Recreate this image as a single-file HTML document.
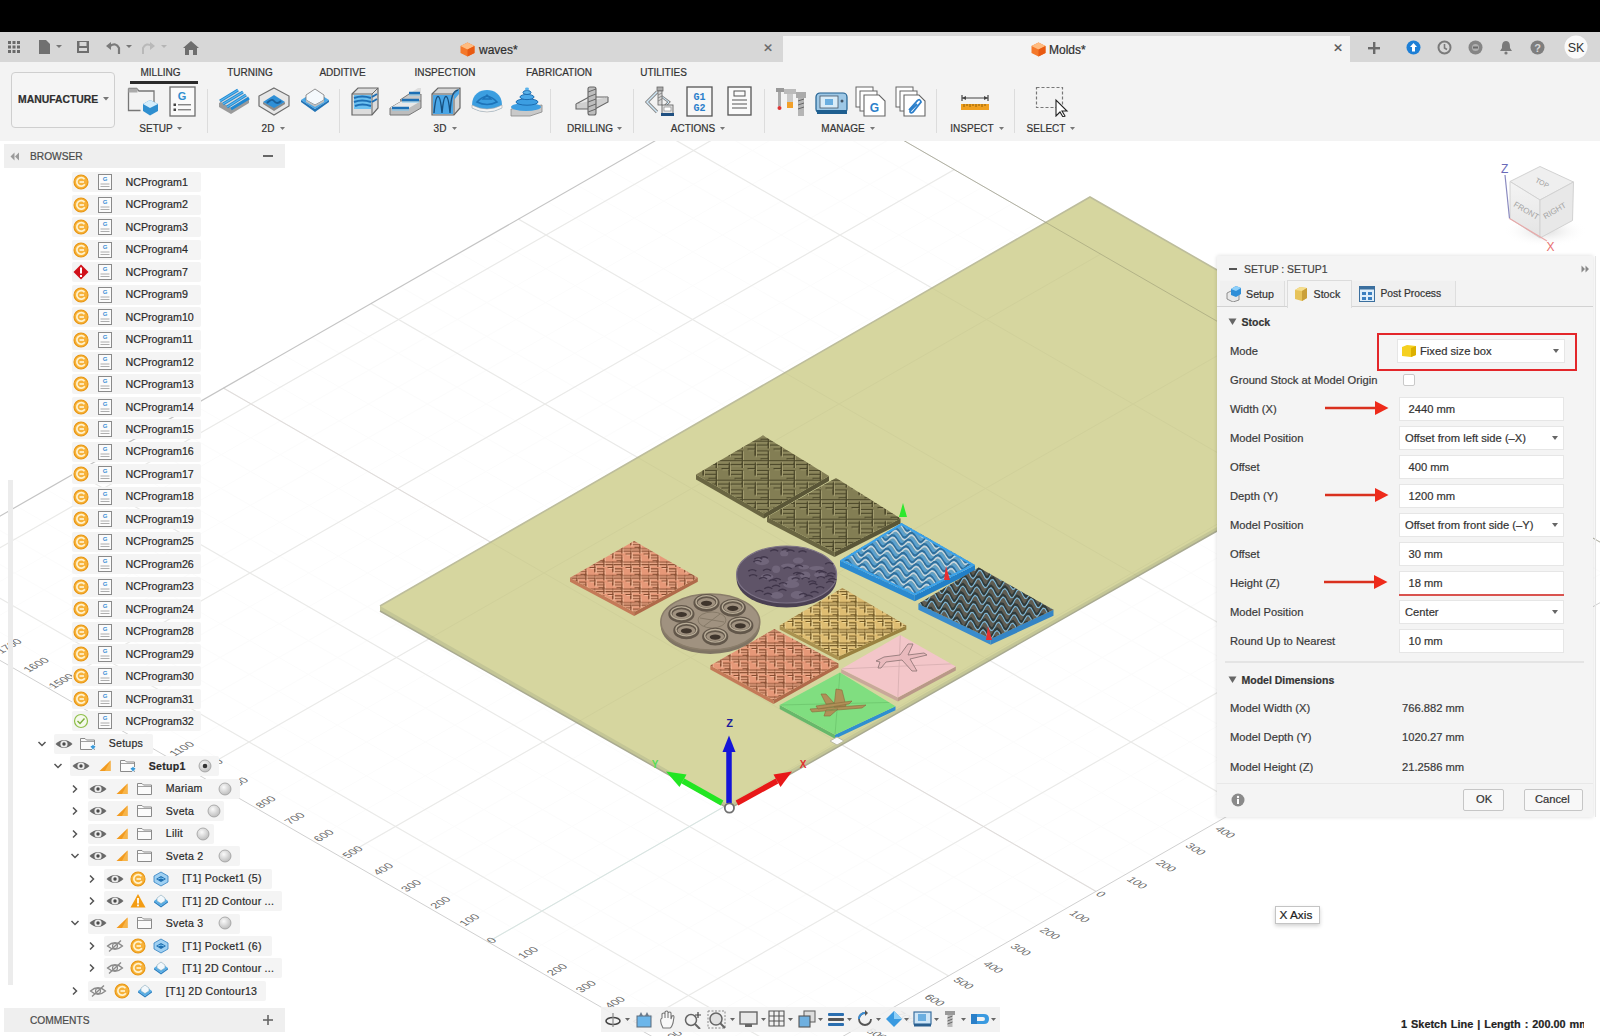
<!DOCTYPE html>
<html><head><meta charset="utf-8">
<style>
*{margin:0;padding:0;box-sizing:border-box}
html,body{width:1600px;height:1036px;overflow:hidden;background:#fff;font-family:"Liberation Sans",sans-serif;color:#333}
.a{position:absolute}
.t{white-space:nowrap;-webkit-text-stroke:0.2px currentColor}
</style></head><body>

<svg class="a" style="left:0;top:0" width="1600" height="1036" viewBox="0 0 1600 1036"><g shape-rendering="geometricPrecision"><line x1="771.5" y1="1077.3" x2="-101.0" y2="574.0" stroke="#fcfcfc" stroke-width="1" opacity="1"/><line x1="830.5" y1="1043.5" x2="-42.0" y2="540.2" stroke="#fcfcfc" stroke-width="1" opacity="1"/><line x1="860.0" y1="1026.6" x2="-12.5" y2="523.3" stroke="#fcfcfc" stroke-width="1" opacity="1"/><line x1="889.5" y1="1009.7" x2="17.0" y2="506.4" stroke="#fcfcfc" stroke-width="1" opacity="1"/><line x1="919.0" y1="992.8" x2="46.5" y2="489.5" stroke="#fcfcfc" stroke-width="1" opacity="1"/><line x1="978.0" y1="959.0" x2="105.5" y2="455.7" stroke="#fcfcfc" stroke-width="1" opacity="1"/><line x1="1007.5" y1="942.1" x2="135.0" y2="438.8" stroke="#fcfcfc" stroke-width="1" opacity="1"/><line x1="1037.0" y1="925.2" x2="164.5" y2="421.9" stroke="#fcfcfc" stroke-width="1" opacity="1"/><line x1="1066.5" y1="908.3" x2="194.0" y2="405.0" stroke="#fcfcfc" stroke-width="1" opacity="1"/><line x1="1125.5" y1="874.5" x2="253.0" y2="371.2" stroke="#fcfcfc" stroke-width="1" opacity="1"/><line x1="1155.0" y1="857.6" x2="282.5" y2="354.3" stroke="#fcfcfc" stroke-width="1" opacity="1"/><line x1="1184.5" y1="840.7" x2="312.0" y2="337.4" stroke="#fcfcfc" stroke-width="1" opacity="1"/><line x1="1214.0" y1="823.8" x2="341.5" y2="320.5" stroke="#fcfcfc" stroke-width="1" opacity="1"/><line x1="1273.0" y1="790.0" x2="400.5" y2="286.7" stroke="#fcfcfc" stroke-width="1" opacity="1"/><line x1="1302.5" y1="773.1" x2="430.0" y2="269.8" stroke="#fcfcfc" stroke-width="1" opacity="1"/><line x1="1332.0" y1="756.2" x2="459.5" y2="252.9" stroke="#fcfcfc" stroke-width="1" opacity="1"/><line x1="1361.5" y1="739.3" x2="489.0" y2="236.0" stroke="#fcfcfc" stroke-width="1" opacity="1"/><line x1="1420.5" y1="705.5" x2="548.0" y2="202.2" stroke="#fcfcfc" stroke-width="1" opacity="1"/><line x1="1450.0" y1="688.6" x2="577.5" y2="185.3" stroke="#fcfcfc" stroke-width="1" opacity="1"/><line x1="1479.5" y1="671.7" x2="607.0" y2="168.4" stroke="#fcfcfc" stroke-width="1" opacity="1"/><line x1="1509.0" y1="654.8" x2="636.5" y2="151.5" stroke="#fcfcfc" stroke-width="1" opacity="1"/><line x1="1568.0" y1="621.0" x2="695.5" y2="117.7" stroke="#fcfcfc" stroke-width="1" opacity="1"/><line x1="1597.5" y1="604.1" x2="725.0" y2="100.8" stroke="#fcfcfc" stroke-width="1" opacity="1"/><line x1="1627.0" y1="587.2" x2="754.5" y2="83.9" stroke="#fcfcfc" stroke-width="1" opacity="1"/><line x1="722.4" y1="1077.1" x2="1628.1" y2="558.3" stroke="#fcfcfc" stroke-width="1" opacity="1"/><line x1="693.1" y1="1060.2" x2="1598.8" y2="541.4" stroke="#fcfcfc" stroke-width="1" opacity="1"/><line x1="663.8" y1="1043.3" x2="1569.5" y2="524.5" stroke="#fcfcfc" stroke-width="1" opacity="1"/><line x1="605.2" y1="1009.5" x2="1510.9" y2="490.7" stroke="#fcfcfc" stroke-width="1" opacity="1"/><line x1="575.9" y1="992.6" x2="1481.6" y2="473.8" stroke="#fcfcfc" stroke-width="1" opacity="1"/><line x1="546.6" y1="975.7" x2="1452.3" y2="456.9" stroke="#fcfcfc" stroke-width="1" opacity="1"/><line x1="517.3" y1="958.8" x2="1423.0" y2="440.0" stroke="#fcfcfc" stroke-width="1" opacity="1"/><line x1="458.7" y1="925.0" x2="1364.4" y2="406.2" stroke="#fcfcfc" stroke-width="1" opacity="1"/><line x1="429.4" y1="908.1" x2="1335.1" y2="389.3" stroke="#fcfcfc" stroke-width="1" opacity="1"/><line x1="400.1" y1="891.2" x2="1305.8" y2="372.4" stroke="#fcfcfc" stroke-width="1" opacity="1"/><line x1="370.8" y1="874.3" x2="1276.5" y2="355.5" stroke="#fcfcfc" stroke-width="1" opacity="1"/><line x1="312.2" y1="840.5" x2="1217.9" y2="321.7" stroke="#fcfcfc" stroke-width="1" opacity="1"/><line x1="282.9" y1="823.6" x2="1188.6" y2="304.8" stroke="#fcfcfc" stroke-width="1" opacity="1"/><line x1="253.6" y1="806.7" x2="1159.3" y2="287.9" stroke="#fcfcfc" stroke-width="1" opacity="1"/><line x1="224.3" y1="789.8" x2="1130.0" y2="271.0" stroke="#fcfcfc" stroke-width="1" opacity="1"/><line x1="165.7" y1="756.0" x2="1071.4" y2="237.2" stroke="#fcfcfc" stroke-width="1" opacity="1"/><line x1="136.4" y1="739.1" x2="1042.1" y2="220.3" stroke="#fcfcfc" stroke-width="1" opacity="1"/><line x1="107.1" y1="722.2" x2="1012.8" y2="203.4" stroke="#fcfcfc" stroke-width="1" opacity="1"/><line x1="77.8" y1="705.3" x2="983.5" y2="186.5" stroke="#fcfcfc" stroke-width="1" opacity="1"/><line x1="19.2" y1="671.5" x2="924.9" y2="152.7" stroke="#fcfcfc" stroke-width="1" opacity="1"/><line x1="-10.1" y1="654.6" x2="895.6" y2="135.8" stroke="#fcfcfc" stroke-width="1" opacity="1"/><line x1="-39.4" y1="637.7" x2="866.3" y2="118.9" stroke="#fcfcfc" stroke-width="1" opacity="1"/><line x1="-68.7" y1="620.8" x2="837.0" y2="102.0" stroke="#fcfcfc" stroke-width="1" opacity="1"/><line x1="801.0" y1="1060.4" x2="-71.5" y2="557.1" stroke="#f1f1f1" stroke-width="1.3" opacity="1"/><line x1="948.5" y1="975.9" x2="76.0" y2="472.6" stroke="#f1f1f1" stroke-width="1.3" opacity="1"/><line x1="1096.0" y1="891.4" x2="223.5" y2="388.1" stroke="#f1f1f1" stroke-width="1.3" opacity="1"/><line x1="1243.5" y1="806.9" x2="371.0" y2="303.6" stroke="#f1f1f1" stroke-width="1.3" opacity="1"/><line x1="1391.0" y1="722.4" x2="518.5" y2="219.1" stroke="#f1f1f1" stroke-width="1.3" opacity="1"/><line x1="1538.5" y1="637.9" x2="666.0" y2="134.6" stroke="#f1f1f1" stroke-width="1.3" opacity="1"/><line x1="634.5" y1="1026.4" x2="1540.2" y2="507.6" stroke="#f1f1f1" stroke-width="1.3" opacity="1"/><line x1="488.0" y1="941.9" x2="1393.7" y2="423.1" stroke="#f1f1f1" stroke-width="1.3" opacity="1"/><line x1="341.5" y1="857.4" x2="1247.2" y2="338.6" stroke="#f1f1f1" stroke-width="1.3" opacity="1"/><line x1="195.0" y1="772.9" x2="1100.7" y2="254.1" stroke="#f1f1f1" stroke-width="1.3" opacity="1"/><line x1="48.5" y1="688.4" x2="954.2" y2="169.6" stroke="#f1f1f1" stroke-width="1.3" opacity="1"/><line x1="-98.0" y1="603.9" x2="807.7" y2="85.1" stroke="#f1f1f1" stroke-width="1.3" opacity="1"/><line x1="1096.0" y1="891.4" x2="223.5" y2="388.1" stroke="#e6e2e2" stroke-width="1" opacity="1"/><line x1="488.0" y1="941.9" x2="1393.7" y2="423.1" stroke="#dcecea" stroke-width="1" opacity="1"/><line x1="747.0" y1="1091.3" x2="-125.5" y2="588.0" stroke="#d0d0d0" stroke-width="1" opacity="1"/><line x1="1652.7" y1="572.5" x2="780.1" y2="69.2" stroke="#d0d0d0" stroke-width="1" opacity="1"/><line x1="747.0" y1="1091.3" x2="1652.7" y2="572.5" stroke="#d0d0d0" stroke-width="1" opacity="1"/><line x1="-125.5" y1="588.0" x2="780.1" y2="69.2" stroke="#c4c4c4" stroke-width="1.2" opacity="1"/></g><polygon points="380,606 1090,197 1217,270 1217,531 729,809 380,611" fill="#c4c696"/><polygon points="380,606 1090,197 1217,270 1217,527 729,805" fill="#d6d69f"/><polyline points="380,606 1090,197 1217,270" fill="none" stroke="#bdbd9c" stroke-width="1.6"/><polyline points="380,611 729,809 1217,531" fill="none" stroke="#a9aa90" stroke-width="1.5"/><g opacity="0.05"><line x1="801.0" y1="1060.4" x2="-71.5" y2="557.1" stroke="#6f6f4a" stroke-width="1" opacity="1"/><line x1="948.5" y1="975.9" x2="76.0" y2="472.6" stroke="#6f6f4a" stroke-width="1" opacity="1"/><line x1="1096.0" y1="891.4" x2="223.5" y2="388.1" stroke="#6f6f4a" stroke-width="1" opacity="1"/><line x1="1243.5" y1="806.9" x2="371.0" y2="303.6" stroke="#6f6f4a" stroke-width="1" opacity="1"/><line x1="1391.0" y1="722.4" x2="518.5" y2="219.1" stroke="#6f6f4a" stroke-width="1" opacity="1"/><line x1="1538.5" y1="637.9" x2="666.0" y2="134.6" stroke="#6f6f4a" stroke-width="1" opacity="1"/><line x1="634.5" y1="1026.4" x2="1540.2" y2="507.6" stroke="#6f6f4a" stroke-width="1" opacity="1"/><line x1="488.0" y1="941.9" x2="1393.7" y2="423.1" stroke="#6f6f4a" stroke-width="1" opacity="1"/><line x1="341.5" y1="857.4" x2="1247.2" y2="338.6" stroke="#6f6f4a" stroke-width="1" opacity="1"/><line x1="195.0" y1="772.9" x2="1100.7" y2="254.1" stroke="#6f6f4a" stroke-width="1" opacity="1"/><line x1="48.5" y1="688.4" x2="954.2" y2="169.6" stroke="#6f6f4a" stroke-width="1" opacity="1"/><line x1="-98.0" y1="603.9" x2="807.7" y2="85.1" stroke="#6f6f4a" stroke-width="1" opacity="1"/></g><g opacity="0.45"><line x1="1652.7" y1="572.5" x2="780.1" y2="69.2" stroke="#8a8a6a" stroke-width="1" opacity="1"/></g><polygon points="696.0,474.5 764.0,513.5 764.0,518.5 696.0,479.5" fill="#6a6642"/><polygon points="764.0,513.5 829.0,476.0 829.0,481.0 764.0,518.5" fill="#5a5637"/><polygon points="763.0,435.5 829.0,476.0 764.0,513.5 696.0,474.5" fill="#837e54"/><clipPath id="c1"><polygon points="763.0,435.5 829.0,476.0 764.0,513.5 696.0,474.5"/></clipPath><g clip-path="url(#c1)"><defs><pattern id="hp1" patternUnits="userSpaceOnUse" width="26.0" height="19.5"><g fill="none"><path d="M-1.3 2.6 H14.3 V16.9" stroke="#a39d70" stroke-width="1.2" transform="translate(1 1)"/><path d="M-1.3 2.6 H14.3 V16.9" stroke="#4a4628" stroke-width="1.2"/><path d="M2.6 6.5 H14.3 V16.9" stroke="#a39d70" stroke-width="1.2" transform="translate(1 1)"/><path d="M2.6 6.5 H14.3 V16.9" stroke="#4a4628" stroke-width="1.2"/><path d="M6.5 10.4 H14.3 V16.9" stroke="#a39d70" stroke-width="1.2" transform="translate(1 1)"/><path d="M6.5 10.4 H14.3 V16.9" stroke="#4a4628" stroke-width="1.2"/><path d="M11.7 12.3 H27.3 V26.7" stroke="#a39d70" stroke-width="1.2" transform="translate(1 1)"/><path d="M11.7 12.3 H27.3 V26.7" stroke="#4a4628" stroke-width="1.2"/><path d="M15.6 16.2 H27.3 V26.7" stroke="#a39d70" stroke-width="1.2" transform="translate(1 1)"/><path d="M15.6 16.2 H27.3 V26.7" stroke="#4a4628" stroke-width="1.2"/><path d="M19.5 20.1 H27.3 V26.7" stroke="#a39d70" stroke-width="1.2" transform="translate(1 1)"/><path d="M19.5 20.1 H27.3 V26.7" stroke="#4a4628" stroke-width="1.2"/><path d="M-14.3 12.3 H1.3 V26.7" stroke="#a39d70" stroke-width="1.2" transform="translate(1 1)"/><path d="M-14.3 12.3 H1.3 V26.7" stroke="#4a4628" stroke-width="1.2"/><path d="M-10.4 16.2 H1.3 V26.7" stroke="#a39d70" stroke-width="1.2" transform="translate(1 1)"/><path d="M-10.4 16.2 H1.3 V26.7" stroke="#4a4628" stroke-width="1.2"/><path d="M-6.5 20.1 H1.3 V26.7" stroke="#a39d70" stroke-width="1.2" transform="translate(1 1)"/><path d="M-6.5 20.1 H1.3 V26.7" stroke="#4a4628" stroke-width="1.2"/><path d="M-1.3 12.3 H14.3 V26.7" stroke="#a39d70" stroke-width="1.2" transform="translate(1 1)"/><path d="M-1.3 12.3 H14.3 V26.7" stroke="#4a4628" stroke-width="1.2"/><path d="M2.6 16.2 H14.3 V26.7" stroke="#a39d70" stroke-width="1.2" transform="translate(1 1)"/><path d="M2.6 16.2 H14.3 V26.7" stroke="#4a4628" stroke-width="1.2"/><path d="M6.5 20.1 H14.3 V26.7" stroke="#a39d70" stroke-width="1.2" transform="translate(1 1)"/><path d="M6.5 20.1 H14.3 V26.7" stroke="#4a4628" stroke-width="1.2"/><path d="M11.7 -7.2 H27.3 V7.2" stroke="#a39d70" stroke-width="1.2" transform="translate(1 1)"/><path d="M11.7 -7.2 H27.3 V7.2" stroke="#4a4628" stroke-width="1.2"/><path d="M15.6 -3.3 H27.3 V7.2" stroke="#a39d70" stroke-width="1.2" transform="translate(1 1)"/><path d="M15.6 -3.3 H27.3 V7.2" stroke="#4a4628" stroke-width="1.2"/><path d="M19.5 0.6 H27.3 V7.2" stroke="#a39d70" stroke-width="1.2" transform="translate(1 1)"/><path d="M19.5 0.6 H27.3 V7.2" stroke="#4a4628" stroke-width="1.2"/><path d="M-14.3 -7.2 H1.3 V7.2" stroke="#a39d70" stroke-width="1.2" transform="translate(1 1)"/><path d="M-14.3 -7.2 H1.3 V7.2" stroke="#4a4628" stroke-width="1.2"/><path d="M-10.4 -3.3 H1.3 V7.2" stroke="#a39d70" stroke-width="1.2" transform="translate(1 1)"/><path d="M-10.4 -3.3 H1.3 V7.2" stroke="#4a4628" stroke-width="1.2"/><path d="M-6.5 0.6 H1.3 V7.2" stroke="#a39d70" stroke-width="1.2" transform="translate(1 1)"/><path d="M-6.5 0.6 H1.3 V7.2" stroke="#4a4628" stroke-width="1.2"/></g></pattern></defs><rect x="0" y="0" width="1600" height="1036" fill="url(#hp1)" opacity="1"/></g><polygon points="767.0,517.0 834.5,552.0 834.5,557.0 767.0,522.0" fill="#6a6642"/><polygon points="834.5,552.0 900.5,518.5 900.5,523.5 834.5,557.0" fill="#5a5637"/><polygon points="836.0,478.0 900.5,518.5 834.5,552.0 767.0,517.0" fill="#837e54"/><clipPath id="c2"><polygon points="836.0,478.0 900.5,518.5 834.5,552.0 767.0,517.0"/></clipPath><g clip-path="url(#c2)"><defs><pattern id="hp2" patternUnits="userSpaceOnUse" width="26.0" height="19.5"><g fill="none"><path d="M-1.3 2.6 H14.3 V16.9" stroke="#a39d70" stroke-width="1.2" transform="translate(1 1)"/><path d="M-1.3 2.6 H14.3 V16.9" stroke="#4a4628" stroke-width="1.2"/><path d="M2.6 6.5 H14.3 V16.9" stroke="#a39d70" stroke-width="1.2" transform="translate(1 1)"/><path d="M2.6 6.5 H14.3 V16.9" stroke="#4a4628" stroke-width="1.2"/><path d="M6.5 10.4 H14.3 V16.9" stroke="#a39d70" stroke-width="1.2" transform="translate(1 1)"/><path d="M6.5 10.4 H14.3 V16.9" stroke="#4a4628" stroke-width="1.2"/><path d="M11.7 12.3 H27.3 V26.7" stroke="#a39d70" stroke-width="1.2" transform="translate(1 1)"/><path d="M11.7 12.3 H27.3 V26.7" stroke="#4a4628" stroke-width="1.2"/><path d="M15.6 16.2 H27.3 V26.7" stroke="#a39d70" stroke-width="1.2" transform="translate(1 1)"/><path d="M15.6 16.2 H27.3 V26.7" stroke="#4a4628" stroke-width="1.2"/><path d="M19.5 20.1 H27.3 V26.7" stroke="#a39d70" stroke-width="1.2" transform="translate(1 1)"/><path d="M19.5 20.1 H27.3 V26.7" stroke="#4a4628" stroke-width="1.2"/><path d="M-14.3 12.3 H1.3 V26.7" stroke="#a39d70" stroke-width="1.2" transform="translate(1 1)"/><path d="M-14.3 12.3 H1.3 V26.7" stroke="#4a4628" stroke-width="1.2"/><path d="M-10.4 16.2 H1.3 V26.7" stroke="#a39d70" stroke-width="1.2" transform="translate(1 1)"/><path d="M-10.4 16.2 H1.3 V26.7" stroke="#4a4628" stroke-width="1.2"/><path d="M-6.5 20.1 H1.3 V26.7" stroke="#a39d70" stroke-width="1.2" transform="translate(1 1)"/><path d="M-6.5 20.1 H1.3 V26.7" stroke="#4a4628" stroke-width="1.2"/><path d="M-1.3 12.3 H14.3 V26.7" stroke="#a39d70" stroke-width="1.2" transform="translate(1 1)"/><path d="M-1.3 12.3 H14.3 V26.7" stroke="#4a4628" stroke-width="1.2"/><path d="M2.6 16.2 H14.3 V26.7" stroke="#a39d70" stroke-width="1.2" transform="translate(1 1)"/><path d="M2.6 16.2 H14.3 V26.7" stroke="#4a4628" stroke-width="1.2"/><path d="M6.5 20.1 H14.3 V26.7" stroke="#a39d70" stroke-width="1.2" transform="translate(1 1)"/><path d="M6.5 20.1 H14.3 V26.7" stroke="#4a4628" stroke-width="1.2"/><path d="M11.7 -7.2 H27.3 V7.2" stroke="#a39d70" stroke-width="1.2" transform="translate(1 1)"/><path d="M11.7 -7.2 H27.3 V7.2" stroke="#4a4628" stroke-width="1.2"/><path d="M15.6 -3.3 H27.3 V7.2" stroke="#a39d70" stroke-width="1.2" transform="translate(1 1)"/><path d="M15.6 -3.3 H27.3 V7.2" stroke="#4a4628" stroke-width="1.2"/><path d="M19.5 0.6 H27.3 V7.2" stroke="#a39d70" stroke-width="1.2" transform="translate(1 1)"/><path d="M19.5 0.6 H27.3 V7.2" stroke="#4a4628" stroke-width="1.2"/><path d="M-14.3 -7.2 H1.3 V7.2" stroke="#a39d70" stroke-width="1.2" transform="translate(1 1)"/><path d="M-14.3 -7.2 H1.3 V7.2" stroke="#4a4628" stroke-width="1.2"/><path d="M-10.4 -3.3 H1.3 V7.2" stroke="#a39d70" stroke-width="1.2" transform="translate(1 1)"/><path d="M-10.4 -3.3 H1.3 V7.2" stroke="#4a4628" stroke-width="1.2"/><path d="M-6.5 0.6 H1.3 V7.2" stroke="#a39d70" stroke-width="1.2" transform="translate(1 1)"/><path d="M-6.5 0.6 H1.3 V7.2" stroke="#4a4628" stroke-width="1.2"/></g></pattern></defs><rect x="0" y="0" width="1600" height="1036" fill="url(#hp2)" opacity="1"/></g><polygon points="840.0,560.5 914.8,595.3 914.8,601.3 840.0,566.5" fill="#2b8ad0"/><polygon points="914.8,595.3 975.0,565.0 975.0,571.0 914.8,601.3" fill="#2280c8"/><polygon points="901.5,523.0 975.0,565.0 914.8,595.3 840.0,560.5" fill="#5aa0d0"/><clipPath id="c3"><polygon points="901.5,523.0 975.0,565.0 914.8,595.3 840.0,560.5"/></clipPath><g clip-path="url(#c3)"><g fill="none"><polyline points="836.0,497.2 838.0,497.1 840.0,499.1 842.0,502.2 844.0,505.1 846.0,506.3 848.0,505.4 850.0,503.4 852.0,501.7 854.0,501.6 856.0,503.5 858.0,506.7 860.0,509.5 862.0,510.7 864.0,509.9 866.0,507.9 868.0,506.1 870.0,506.1 872.0,508.0 874.0,511.2 876.0,514.0 878.0,515.2 880.0,514.4 882.0,512.3 884.0,510.6 886.0,510.5 888.0,512.5 890.0,515.7 892.0,518.5 894.0,519.7 896.0,518.9 898.0,516.8 900.0,515.1 902.0,515.0 904.0,517.0 906.0,520.1 908.0,523.0 910.0,524.2 912.0,523.3 914.0,521.3 916.0,519.6 918.0,519.5 920.0,521.5 922.0,524.6 924.0,527.5 926.0,528.7 928.0,527.8 930.0,525.8 932.0,524.1 934.0,524.0 936.0,525.9 938.0,529.1 940.0,531.9 942.0,533.1 944.0,532.3 946.0,530.3 948.0,528.5 950.0,528.5 952.0,530.4 954.0,533.6 956.0,536.4 958.0,537.6 960.0,536.8 962.0,534.7 964.0,533.0 966.0,532.9 968.0,534.9 970.0,538.1 972.0,540.9 974.0,542.1 976.0,541.3 978.0,539.2 980.0,537.5" stroke="#2f6f9c" stroke-width="2"/><polyline points="836.0,499.6 838.0,499.5 840.0,501.5 842.0,504.6 844.0,507.5 846.0,508.7 848.0,507.8 850.0,505.8 852.0,504.1 854.0,504.0 856.0,505.9 858.0,509.1 860.0,511.9 862.0,513.1 864.0,512.3 866.0,510.3 868.0,508.5 870.0,508.5 872.0,510.4 874.0,513.6 876.0,516.4 878.0,517.6 880.0,516.8 882.0,514.7 884.0,513.0 886.0,512.9 888.0,514.9 890.0,518.1 892.0,520.9 894.0,522.1 896.0,521.3 898.0,519.2 900.0,517.5 902.0,517.4 904.0,519.4 906.0,522.5 908.0,525.4 910.0,526.6 912.0,525.7 914.0,523.7 916.0,522.0 918.0,521.9 920.0,523.9 922.0,527.0 924.0,529.9 926.0,531.1 928.0,530.2 930.0,528.2 932.0,526.5 934.0,526.4 936.0,528.3 938.0,531.5 940.0,534.3 942.0,535.5 944.0,534.7 946.0,532.7 948.0,530.9 950.0,530.9 952.0,532.8 954.0,536.0 956.0,538.8 958.0,540.0 960.0,539.2 962.0,537.1 964.0,535.4 966.0,535.3 968.0,537.3 970.0,540.5 972.0,543.3 974.0,544.5 976.0,543.7 978.0,541.6 980.0,539.9" stroke="#c9d5da" stroke-width="1.6"/><polyline points="836.0,501.5 838.0,501.4 840.0,503.4 842.0,506.5 844.0,509.4 846.0,510.6 848.0,509.7 850.0,507.7 852.0,506.0 854.0,505.9 856.0,507.8 858.0,511.0 860.0,513.8 862.0,515.0 864.0,514.2 866.0,512.2 868.0,510.4 870.0,510.4 872.0,512.3 874.0,515.5 876.0,518.3 878.0,519.5 880.0,518.7 882.0,516.6 884.0,514.9 886.0,514.8 888.0,516.8 890.0,520.0 892.0,522.8 894.0,524.0 896.0,523.2 898.0,521.1 900.0,519.4 902.0,519.3 904.0,521.3 906.0,524.4 908.0,527.3 910.0,528.5 912.0,527.6 914.0,525.6 916.0,523.9 918.0,523.8 920.0,525.8 922.0,528.9 924.0,531.8 926.0,533.0 928.0,532.1 930.0,530.1 932.0,528.4 934.0,528.3 936.0,530.2 938.0,533.4 940.0,536.2 942.0,537.4 944.0,536.6 946.0,534.6 948.0,532.8 950.0,532.8 952.0,534.7 954.0,537.9 956.0,540.7 958.0,541.9 960.0,541.1 962.0,539.0 964.0,537.3 966.0,537.2 968.0,539.2 970.0,542.4 972.0,545.2 974.0,546.4 976.0,545.6 978.0,543.5 980.0,541.8" stroke="#6aa0b8" stroke-width="1.2"/><polyline points="836.0,504.4 838.0,507.0 840.0,510.2 842.0,512.5 844.0,512.9 846.0,511.4 848.0,509.3 850.0,508.1 852.0,508.9 854.0,511.5 856.0,514.7 858.0,517.0 860.0,517.3 862.0,515.9 864.0,513.8 866.0,512.6 868.0,513.3 870.0,515.9 872.0,519.2 874.0,521.5 876.0,521.8 878.0,520.3 880.0,518.2 882.0,517.1 884.0,517.8 886.0,520.4 888.0,523.6 890.0,525.9 892.0,526.3 894.0,524.8 896.0,522.7 898.0,521.5 900.0,522.3 902.0,524.9 904.0,528.1 906.0,530.4 908.0,530.8 910.0,529.3 912.0,527.2 914.0,526.0 916.0,526.8 918.0,529.4 920.0,532.6 922.0,534.9 924.0,535.3 926.0,533.8 928.0,531.7 930.0,530.5 932.0,531.3 934.0,533.9 936.0,537.1 938.0,539.4 940.0,539.7 942.0,538.3 944.0,536.2 946.0,535.0 948.0,535.7 950.0,538.3 952.0,541.6 954.0,543.9 956.0,544.2 958.0,542.7 960.0,540.6 962.0,539.5 964.0,540.2 966.0,542.8 968.0,546.0 970.0,548.3 972.0,548.7 974.0,547.2 976.0,545.1 978.0,543.9 980.0,544.7" stroke="#2f6f9c" stroke-width="2"/><polyline points="836.0,506.8 838.0,509.4 840.0,512.6 842.0,514.9 844.0,515.3 846.0,513.8 848.0,511.7 850.0,510.5 852.0,511.3 854.0,513.9 856.0,517.1 858.0,519.4 860.0,519.7 862.0,518.3 864.0,516.2 866.0,515.0 868.0,515.7 870.0,518.3 872.0,521.6 874.0,523.9 876.0,524.2 878.0,522.7 880.0,520.6 882.0,519.5 884.0,520.2 886.0,522.8 888.0,526.0 890.0,528.3 892.0,528.7 894.0,527.2 896.0,525.1 898.0,523.9 900.0,524.7 902.0,527.3 904.0,530.5 906.0,532.8 908.0,533.2 910.0,531.7 912.0,529.6 914.0,528.4 916.0,529.2 918.0,531.8 920.0,535.0 922.0,537.3 924.0,537.7 926.0,536.2 928.0,534.1 930.0,532.9 932.0,533.7 934.0,536.3 936.0,539.5 938.0,541.8 940.0,542.1 942.0,540.7 944.0,538.6 946.0,537.4 948.0,538.1 950.0,540.7 952.0,544.0 954.0,546.3 956.0,546.6 958.0,545.1 960.0,543.0 962.0,541.9 964.0,542.6 966.0,545.2 968.0,548.4 970.0,550.7 972.0,551.1 974.0,549.6 976.0,547.5 978.0,546.3 980.0,547.1" stroke="#c9d5da" stroke-width="1.6"/><polyline points="836.0,508.7 838.0,511.3 840.0,514.5 842.0,516.8 844.0,517.2 846.0,515.7 848.0,513.6 850.0,512.4 852.0,513.2 854.0,515.8 856.0,519.0 858.0,521.3 860.0,521.6 862.0,520.2 864.0,518.1 866.0,516.9 868.0,517.6 870.0,520.2 872.0,523.5 874.0,525.8 876.0,526.1 878.0,524.6 880.0,522.5 882.0,521.4 884.0,522.1 886.0,524.7 888.0,527.9 890.0,530.2 892.0,530.6 894.0,529.1 896.0,527.0 898.0,525.8 900.0,526.6 902.0,529.2 904.0,532.4 906.0,534.7 908.0,535.1 910.0,533.6 912.0,531.5 914.0,530.3 916.0,531.1 918.0,533.7 920.0,536.9 922.0,539.2 924.0,539.6 926.0,538.1 928.0,536.0 930.0,534.8 932.0,535.6 934.0,538.2 936.0,541.4 938.0,543.7 940.0,544.0 942.0,542.6 944.0,540.5 946.0,539.3 948.0,540.0 950.0,542.6 952.0,545.9 954.0,548.2 956.0,548.5 958.0,547.0 960.0,544.9 962.0,543.8 964.0,544.5 966.0,547.1 968.0,550.3 970.0,552.6 972.0,553.0 974.0,551.5 976.0,549.4 978.0,548.2 980.0,549.0" stroke="#6aa0b8" stroke-width="1.2"/><polyline points="836.0,515.0 838.0,518.0 840.0,519.6 842.0,519.2 844.0,517.2 846.0,515.3 848.0,514.9 850.0,516.4 852.0,519.5 854.0,522.5 856.0,524.1 858.0,523.6 860.0,521.7 862.0,519.8 864.0,519.3 866.0,520.9 868.0,524.0 870.0,527.0 872.0,528.6 874.0,528.1 876.0,526.2 878.0,524.3 880.0,523.8 882.0,525.4 884.0,528.4 886.0,531.5 888.0,533.1 890.0,532.6 892.0,530.7 894.0,528.8 896.0,528.3 898.0,529.9 900.0,532.9 902.0,536.0 904.0,537.5 906.0,537.1 908.0,535.2 910.0,533.2 912.0,532.8 914.0,534.4 916.0,537.4 918.0,540.4 920.0,542.0 922.0,541.6 924.0,539.6 926.0,537.7 928.0,537.3 930.0,538.8 932.0,541.9 934.0,544.9 936.0,546.5 938.0,546.0 940.0,544.1 942.0,542.2 944.0,541.7 946.0,543.3 948.0,546.4 950.0,549.4 952.0,551.0 954.0,550.5 956.0,548.6 958.0,546.7 960.0,546.2 962.0,547.8 964.0,550.8 966.0,553.9 968.0,555.5 970.0,555.0 972.0,553.1 974.0,551.2 976.0,550.7 978.0,552.3 980.0,555.3" stroke="#2f6f9c" stroke-width="2"/><polyline points="836.0,517.4 838.0,520.4 840.0,522.0 842.0,521.6 844.0,519.6 846.0,517.7 848.0,517.3 850.0,518.8 852.0,521.9 854.0,524.9 856.0,526.5 858.0,526.0 860.0,524.1 862.0,522.2 864.0,521.7 866.0,523.3 868.0,526.4 870.0,529.4 872.0,531.0 874.0,530.5 876.0,528.6 878.0,526.7 880.0,526.2 882.0,527.8 884.0,530.8 886.0,533.9 888.0,535.5 890.0,535.0 892.0,533.1 894.0,531.2 896.0,530.7 898.0,532.3 900.0,535.3 902.0,538.4 904.0,539.9 906.0,539.5 908.0,537.6 910.0,535.6 912.0,535.2 914.0,536.8 916.0,539.8 918.0,542.8 920.0,544.4 922.0,544.0 924.0,542.0 926.0,540.1 928.0,539.7 930.0,541.2 932.0,544.3 934.0,547.3 936.0,548.9 938.0,548.4 940.0,546.5 942.0,544.6 944.0,544.1 946.0,545.7 948.0,548.8 950.0,551.8 952.0,553.4 954.0,552.9 956.0,551.0 958.0,549.1 960.0,548.6 962.0,550.2 964.0,553.2 966.0,556.3 968.0,557.9 970.0,557.4 972.0,555.5 974.0,553.6 976.0,553.1 978.0,554.7 980.0,557.7" stroke="#c9d5da" stroke-width="1.6"/><polyline points="836.0,519.3 838.0,522.3 840.0,523.9 842.0,523.5 844.0,521.5 846.0,519.6 848.0,519.2 850.0,520.7 852.0,523.8 854.0,526.8 856.0,528.4 858.0,527.9 860.0,526.0 862.0,524.1 864.0,523.6 866.0,525.2 868.0,528.3 870.0,531.3 872.0,532.9 874.0,532.4 876.0,530.5 878.0,528.6 880.0,528.1 882.0,529.7 884.0,532.7 886.0,535.8 888.0,537.4 890.0,536.9 892.0,535.0 894.0,533.1 896.0,532.6 898.0,534.2 900.0,537.2 902.0,540.3 904.0,541.8 906.0,541.4 908.0,539.5 910.0,537.5 912.0,537.1 914.0,538.7 916.0,541.7 918.0,544.7 920.0,546.3 922.0,545.9 924.0,543.9 926.0,542.0 928.0,541.6 930.0,543.1 932.0,546.2 934.0,549.2 936.0,550.8 938.0,550.3 940.0,548.4 942.0,546.5 944.0,546.0 946.0,547.6 948.0,550.7 950.0,553.7 952.0,555.3 954.0,554.8 956.0,552.9 958.0,551.0 960.0,550.5 962.0,552.1 964.0,555.1 966.0,558.2 968.0,559.8 970.0,559.3 972.0,557.4 974.0,555.5 976.0,555.0 978.0,556.6 980.0,559.6" stroke="#6aa0b8" stroke-width="1.2"/><polyline points="836.0,525.6 838.0,526.4 840.0,525.2 842.0,523.1 844.0,521.6 846.0,522.0 848.0,524.3 850.0,527.5 852.0,530.1 854.0,530.9 856.0,529.7 858.0,527.6 860.0,526.1 862.0,526.5 864.0,528.8 866.0,532.0 868.0,534.6 870.0,535.3 872.0,534.2 874.0,532.1 876.0,530.6 878.0,530.9 880.0,533.2 882.0,536.5 884.0,539.1 886.0,539.8 888.0,538.6 890.0,536.5 892.0,535.1 894.0,535.4 896.0,537.7 898.0,540.9 900.0,543.5 902.0,544.3 904.0,543.1 906.0,541.0 908.0,539.5 910.0,539.9 912.0,542.2 914.0,545.4 916.0,548.0 918.0,548.8 920.0,547.6 922.0,545.5 924.0,544.0 926.0,544.4 928.0,546.7 930.0,549.9 932.0,552.5 934.0,553.3 936.0,552.1 938.0,550.0 940.0,548.5 942.0,548.9 944.0,551.2 946.0,554.4 948.0,557.0 950.0,557.7 952.0,556.6 954.0,554.5 956.0,553.0 958.0,553.3 960.0,555.6 962.0,558.9 964.0,561.5 966.0,562.2 968.0,561.0 970.0,558.9 972.0,557.5 974.0,557.8 976.0,560.1 978.0,563.3 980.0,565.9" stroke="#2f6f9c" stroke-width="2"/><polyline points="836.0,528.0 838.0,528.8 840.0,527.6 842.0,525.5 844.0,524.0 846.0,524.4 848.0,526.7 850.0,529.9 852.0,532.5 854.0,533.3 856.0,532.1 858.0,530.0 860.0,528.5 862.0,528.9 864.0,531.2 866.0,534.4 868.0,537.0 870.0,537.7 872.0,536.6 874.0,534.5 876.0,533.0 878.0,533.3 880.0,535.6 882.0,538.9 884.0,541.5 886.0,542.2 888.0,541.0 890.0,538.9 892.0,537.5 894.0,537.8 896.0,540.1 898.0,543.3 900.0,545.9 902.0,546.7 904.0,545.5 906.0,543.4 908.0,541.9 910.0,542.3 912.0,544.6 914.0,547.8 916.0,550.4 918.0,551.2 920.0,550.0 922.0,547.9 924.0,546.4 926.0,546.8 928.0,549.1 930.0,552.3 932.0,554.9 934.0,555.7 936.0,554.5 938.0,552.4 940.0,550.9 942.0,551.3 944.0,553.6 946.0,556.8 948.0,559.4 950.0,560.1 952.0,559.0 954.0,556.9 956.0,555.4 958.0,555.7 960.0,558.0 962.0,561.3 964.0,563.9 966.0,564.6 968.0,563.4 970.0,561.3 972.0,559.9 974.0,560.2 976.0,562.5 978.0,565.7 980.0,568.3" stroke="#c9d5da" stroke-width="1.6"/><polyline points="836.0,529.9 838.0,530.7 840.0,529.5 842.0,527.4 844.0,525.9 846.0,526.3 848.0,528.6 850.0,531.8 852.0,534.4 854.0,535.2 856.0,534.0 858.0,531.9 860.0,530.4 862.0,530.8 864.0,533.1 866.0,536.3 868.0,538.9 870.0,539.6 872.0,538.5 874.0,536.4 876.0,534.9 878.0,535.2 880.0,537.5 882.0,540.8 884.0,543.4 886.0,544.1 888.0,542.9 890.0,540.8 892.0,539.4 894.0,539.7 896.0,542.0 898.0,545.2 900.0,547.8 902.0,548.6 904.0,547.4 906.0,545.3 908.0,543.8 910.0,544.2 912.0,546.5 914.0,549.7 916.0,552.3 918.0,553.1 920.0,551.9 922.0,549.8 924.0,548.3 926.0,548.7 928.0,551.0 930.0,554.2 932.0,556.8 934.0,557.6 936.0,556.4 938.0,554.3 940.0,552.8 942.0,553.2 944.0,555.5 946.0,558.7 948.0,561.3 950.0,562.0 952.0,560.9 954.0,558.8 956.0,557.3 958.0,557.6 960.0,559.9 962.0,563.2 964.0,565.8 966.0,566.5 968.0,565.3 970.0,563.2 972.0,561.8 974.0,562.1 976.0,564.4 978.0,567.6 980.0,570.2" stroke="#6aa0b8" stroke-width="1.2"/><polyline points="836.0,532.8 838.0,531.1 840.0,529.1 842.0,528.2 844.0,529.4 846.0,532.3 848.0,535.4 850.0,537.4 852.0,537.3 854.0,535.6 856.0,533.5 858.0,532.7 860.0,533.9 862.0,536.7 864.0,539.9 866.0,541.9 868.0,541.8 870.0,540.1 872.0,538.0 874.0,537.2 876.0,538.4 878.0,541.2 880.0,544.4 882.0,546.3 884.0,546.3 886.0,544.5 888.0,542.5 890.0,541.7 892.0,542.9 894.0,545.7 896.0,548.9 898.0,550.8 900.0,550.7 902.0,549.0 904.0,547.0 906.0,546.1 908.0,547.3 910.0,550.2 912.0,553.3 914.0,555.3 916.0,555.2 918.0,553.5 920.0,551.5 922.0,550.6 924.0,551.8 926.0,554.7 928.0,557.8 930.0,559.8 932.0,559.7 934.0,558.0 936.0,555.9 938.0,555.1 940.0,556.3 942.0,559.1 944.0,562.3 946.0,564.3 948.0,564.2 950.0,562.5 952.0,560.4 954.0,559.6 956.0,560.8 958.0,563.6 960.0,566.8 962.0,568.7 964.0,568.7 966.0,566.9 968.0,564.9 970.0,564.1 972.0,565.3 974.0,568.1 976.0,571.3 978.0,573.2 980.0,573.1" stroke="#2f6f9c" stroke-width="2"/><polyline points="836.0,535.2 838.0,533.5 840.0,531.5 842.0,530.6 844.0,531.8 846.0,534.7 848.0,537.8 850.0,539.8 852.0,539.7 854.0,538.0 856.0,535.9 858.0,535.1 860.0,536.3 862.0,539.1 864.0,542.3 866.0,544.3 868.0,544.2 870.0,542.5 872.0,540.4 874.0,539.6 876.0,540.8 878.0,543.6 880.0,546.8 882.0,548.7 884.0,548.7 886.0,546.9 888.0,544.9 890.0,544.1 892.0,545.3 894.0,548.1 896.0,551.3 898.0,553.2 900.0,553.1 902.0,551.4 904.0,549.4 906.0,548.5 908.0,549.7 910.0,552.6 912.0,555.7 914.0,557.7 916.0,557.6 918.0,555.9 920.0,553.9 922.0,553.0 924.0,554.2 926.0,557.1 928.0,560.2 930.0,562.2 932.0,562.1 934.0,560.4 936.0,558.3 938.0,557.5 940.0,558.7 942.0,561.5 944.0,564.7 946.0,566.7 948.0,566.6 950.0,564.9 952.0,562.8 954.0,562.0 956.0,563.2 958.0,566.0 960.0,569.2 962.0,571.1 964.0,571.1 966.0,569.3 968.0,567.3 970.0,566.5 972.0,567.7 974.0,570.5 976.0,573.7 978.0,575.6 980.0,575.5" stroke="#c9d5da" stroke-width="1.6"/><polyline points="836.0,537.1 838.0,535.4 840.0,533.4 842.0,532.5 844.0,533.7 846.0,536.6 848.0,539.7 850.0,541.7 852.0,541.6 854.0,539.9 856.0,537.8 858.0,537.0 860.0,538.2 862.0,541.0 864.0,544.2 866.0,546.2 868.0,546.1 870.0,544.4 872.0,542.3 874.0,541.5 876.0,542.7 878.0,545.5 880.0,548.7 882.0,550.6 884.0,550.6 886.0,548.8 888.0,546.8 890.0,546.0 892.0,547.2 894.0,550.0 896.0,553.2 898.0,555.1 900.0,555.0 902.0,553.3 904.0,551.3 906.0,550.4 908.0,551.6 910.0,554.5 912.0,557.6 914.0,559.6 916.0,559.5 918.0,557.8 920.0,555.8 922.0,554.9 924.0,556.1 926.0,559.0 928.0,562.1 930.0,564.1 932.0,564.0 934.0,562.3 936.0,560.2 938.0,559.4 940.0,560.6 942.0,563.4 944.0,566.6 946.0,568.6 948.0,568.5 950.0,566.8 952.0,564.7 954.0,563.9 956.0,565.1 958.0,567.9 960.0,571.1 962.0,573.0 964.0,573.0 966.0,571.2 968.0,569.2 970.0,568.4 972.0,569.6 974.0,572.4 976.0,575.6 978.0,577.5 980.0,577.4" stroke="#6aa0b8" stroke-width="1.2"/><polyline points="836.0,536.9 838.0,535.2 840.0,535.2 842.0,537.1 844.0,540.3 846.0,543.1 848.0,544.3 850.0,543.5 852.0,541.4 854.0,539.7 856.0,539.6 858.0,541.6 860.0,544.8 862.0,547.6 864.0,548.8 866.0,548.0 868.0,545.9 870.0,544.2 872.0,544.1 874.0,546.1 876.0,549.3 878.0,552.1 880.0,553.3 882.0,552.4 884.0,550.4 886.0,548.7 888.0,548.6 890.0,550.6 892.0,553.7 894.0,556.6 896.0,557.8 898.0,556.9 900.0,554.9 902.0,553.1 904.0,553.1 906.0,555.0 908.0,558.2 910.0,561.1 912.0,562.2 914.0,561.4 916.0,559.3 918.0,557.6 920.0,557.6 922.0,559.5 924.0,562.7 926.0,565.5 928.0,566.7 930.0,565.9 932.0,563.8 934.0,562.1 936.0,562.0 938.0,564.0 940.0,567.2 942.0,570.0 944.0,571.2 946.0,570.4 948.0,568.3 950.0,566.6 952.0,566.5 954.0,568.5 956.0,571.7 958.0,574.5 960.0,575.7 962.0,574.8 964.0,572.8 966.0,571.1 968.0,571.0 970.0,573.0 972.0,576.1 974.0,579.0 976.0,580.2 978.0,579.3 980.0,577.3" stroke="#2f6f9c" stroke-width="2"/><polyline points="836.0,539.3 838.0,537.6 840.0,537.6 842.0,539.5 844.0,542.7 846.0,545.5 848.0,546.7 850.0,545.9 852.0,543.8 854.0,542.1 856.0,542.0 858.0,544.0 860.0,547.2 862.0,550.0 864.0,551.2 866.0,550.4 868.0,548.3 870.0,546.6 872.0,546.5 874.0,548.5 876.0,551.7 878.0,554.5 880.0,555.7 882.0,554.8 884.0,552.8 886.0,551.1 888.0,551.0 890.0,553.0 892.0,556.1 894.0,559.0 896.0,560.2 898.0,559.3 900.0,557.3 902.0,555.5 904.0,555.5 906.0,557.4 908.0,560.6 910.0,563.5 912.0,564.6 914.0,563.8 916.0,561.7 918.0,560.0 920.0,560.0 922.0,561.9 924.0,565.1 926.0,567.9 928.0,569.1 930.0,568.3 932.0,566.2 934.0,564.5 936.0,564.4 938.0,566.4 940.0,569.6 942.0,572.4 944.0,573.6 946.0,572.8 948.0,570.7 950.0,569.0 952.0,568.9 954.0,570.9 956.0,574.1 958.0,576.9 960.0,578.1 962.0,577.2 964.0,575.2 966.0,573.5 968.0,573.4 970.0,575.4 972.0,578.5 974.0,581.4 976.0,582.6 978.0,581.7 980.0,579.7" stroke="#c9d5da" stroke-width="1.6"/><polyline points="836.0,541.2 838.0,539.5 840.0,539.5 842.0,541.4 844.0,544.6 846.0,547.4 848.0,548.6 850.0,547.8 852.0,545.7 854.0,544.0 856.0,543.9 858.0,545.9 860.0,549.1 862.0,551.9 864.0,553.1 866.0,552.3 868.0,550.2 870.0,548.5 872.0,548.4 874.0,550.4 876.0,553.6 878.0,556.4 880.0,557.6 882.0,556.7 884.0,554.7 886.0,553.0 888.0,552.9 890.0,554.9 892.0,558.0 894.0,560.9 896.0,562.1 898.0,561.2 900.0,559.2 902.0,557.4 904.0,557.4 906.0,559.3 908.0,562.5 910.0,565.4 912.0,566.5 914.0,565.7 916.0,563.6 918.0,561.9 920.0,561.9 922.0,563.8 924.0,567.0 926.0,569.8 928.0,571.0 930.0,570.2 932.0,568.1 934.0,566.4 936.0,566.3 938.0,568.3 940.0,571.5 942.0,574.3 944.0,575.5 946.0,574.7 948.0,572.6 950.0,570.9 952.0,570.8 954.0,572.8 956.0,576.0 958.0,578.8 960.0,580.0 962.0,579.1 964.0,577.1 966.0,575.4 968.0,575.3 970.0,577.3 972.0,580.4 974.0,583.3 976.0,584.5 978.0,583.6 980.0,581.6" stroke="#6aa0b8" stroke-width="1.2"/><polyline points="836.0,541.7 838.0,542.4 840.0,545.0 842.0,548.3 844.0,550.6 846.0,550.9 848.0,549.4 850.0,547.3 852.0,546.1 854.0,546.9 856.0,549.5 858.0,552.8 860.0,555.1 862.0,555.4 864.0,553.9 866.0,551.8 868.0,550.6 870.0,551.4 872.0,554.0 874.0,557.2 876.0,559.5 878.0,559.9 880.0,558.4 882.0,556.3 884.0,555.1 886.0,555.9 888.0,558.5 890.0,561.7 892.0,564.0 894.0,564.4 896.0,562.9 898.0,560.8 900.0,559.6 902.0,560.4 904.0,563.0 906.0,566.2 908.0,568.5 910.0,568.8 912.0,567.4 914.0,565.2 916.0,564.1 918.0,564.8 920.0,567.4 922.0,570.7 924.0,573.0 926.0,573.3 928.0,571.8 930.0,569.7 932.0,568.5 934.0,569.3 936.0,571.9 938.0,575.2 940.0,577.5 942.0,577.8 944.0,576.3 946.0,574.2 948.0,573.0 950.0,573.8 952.0,576.4 954.0,579.6 956.0,581.9 958.0,582.3 960.0,580.8 962.0,578.7 964.0,577.5 966.0,578.3 968.0,580.9 970.0,584.1 972.0,586.4 974.0,586.8 976.0,585.3 978.0,583.2 980.0,582.0" stroke="#2f6f9c" stroke-width="2"/><polyline points="836.0,544.1 838.0,544.8 840.0,547.4 842.0,550.7 844.0,553.0 846.0,553.3 848.0,551.8 850.0,549.7 852.0,548.5 854.0,549.3 856.0,551.9 858.0,555.2 860.0,557.5 862.0,557.8 864.0,556.3 866.0,554.2 868.0,553.0 870.0,553.8 872.0,556.4 874.0,559.6 876.0,561.9 878.0,562.3 880.0,560.8 882.0,558.7 884.0,557.5 886.0,558.3 888.0,560.9 890.0,564.1 892.0,566.4 894.0,566.8 896.0,565.3 898.0,563.2 900.0,562.0 902.0,562.8 904.0,565.4 906.0,568.6 908.0,570.9 910.0,571.2 912.0,569.8 914.0,567.6 916.0,566.5 918.0,567.2 920.0,569.8 922.0,573.1 924.0,575.4 926.0,575.7 928.0,574.2 930.0,572.1 932.0,570.9 934.0,571.7 936.0,574.3 938.0,577.6 940.0,579.9 942.0,580.2 944.0,578.7 946.0,576.6 948.0,575.4 950.0,576.2 952.0,578.8 954.0,582.0 956.0,584.3 958.0,584.7 960.0,583.2 962.0,581.1 964.0,579.9 966.0,580.7 968.0,583.3 970.0,586.5 972.0,588.8 974.0,589.2 976.0,587.7 978.0,585.6 980.0,584.4" stroke="#c9d5da" stroke-width="1.6"/><polyline points="836.0,546.0 838.0,546.7 840.0,549.3 842.0,552.6 844.0,554.9 846.0,555.2 848.0,553.7 850.0,551.6 852.0,550.4 854.0,551.2 856.0,553.8 858.0,557.1 860.0,559.4 862.0,559.7 864.0,558.2 866.0,556.1 868.0,554.9 870.0,555.7 872.0,558.3 874.0,561.5 876.0,563.8 878.0,564.2 880.0,562.7 882.0,560.6 884.0,559.4 886.0,560.2 888.0,562.8 890.0,566.0 892.0,568.3 894.0,568.7 896.0,567.2 898.0,565.1 900.0,563.9 902.0,564.7 904.0,567.3 906.0,570.5 908.0,572.8 910.0,573.1 912.0,571.7 914.0,569.5 916.0,568.4 918.0,569.1 920.0,571.7 922.0,575.0 924.0,577.3 926.0,577.6 928.0,576.1 930.0,574.0 932.0,572.8 934.0,573.6 936.0,576.2 938.0,579.5 940.0,581.8 942.0,582.1 944.0,580.6 946.0,578.5 948.0,577.3 950.0,578.1 952.0,580.7 954.0,583.9 956.0,586.2 958.0,586.6 960.0,585.1 962.0,583.0 964.0,581.8 966.0,582.6 968.0,585.2 970.0,588.4 972.0,590.7 974.0,591.1 976.0,589.6 978.0,587.5 980.0,586.3" stroke="#6aa0b8" stroke-width="1.2"/><polyline points="836.0,550.0 838.0,553.1 840.0,556.1 842.0,557.7 844.0,557.2 846.0,555.3 848.0,553.4 850.0,552.9 852.0,554.5 854.0,557.5 856.0,560.6 858.0,562.2 860.0,561.7 862.0,559.8 864.0,557.9 866.0,557.4 868.0,559.0 870.0,562.0 872.0,565.1 874.0,566.6 876.0,566.2 878.0,564.3 880.0,562.3 882.0,561.9 884.0,563.5 886.0,566.5 888.0,569.5 890.0,571.1 892.0,570.6 894.0,568.7 896.0,566.8 898.0,566.4 900.0,568.0 902.0,571.0 904.0,574.0 906.0,575.6 908.0,575.1 910.0,573.2 912.0,571.3 914.0,570.8 916.0,572.4 918.0,575.5 920.0,578.5 922.0,580.1 924.0,579.6 926.0,577.7 928.0,575.8 930.0,575.3 932.0,576.9 934.0,579.9 936.0,583.0 938.0,584.6 940.0,584.1 942.0,582.2 944.0,580.3 946.0,579.8 948.0,581.4 950.0,584.4 952.0,587.5 954.0,589.0 956.0,588.6 958.0,586.7 960.0,584.7 962.0,584.3 964.0,585.9 966.0,588.9 968.0,591.9 970.0,593.5 972.0,593.0 974.0,591.1 976.0,589.2 978.0,588.8 980.0,590.4" stroke="#2f6f9c" stroke-width="2"/><polyline points="836.0,552.4 838.0,555.5 840.0,558.5 842.0,560.1 844.0,559.6 846.0,557.7 848.0,555.8 850.0,555.3 852.0,556.9 854.0,559.9 856.0,563.0 858.0,564.6 860.0,564.1 862.0,562.2 864.0,560.3 866.0,559.8 868.0,561.4 870.0,564.4 872.0,567.5 874.0,569.0 876.0,568.6 878.0,566.7 880.0,564.7 882.0,564.3 884.0,565.9 886.0,568.9 888.0,571.9 890.0,573.5 892.0,573.0 894.0,571.1 896.0,569.2 898.0,568.8 900.0,570.4 902.0,573.4 904.0,576.4 906.0,578.0 908.0,577.5 910.0,575.6 912.0,573.7 914.0,573.2 916.0,574.8 918.0,577.9 920.0,580.9 922.0,582.5 924.0,582.0 926.0,580.1 928.0,578.2 930.0,577.7 932.0,579.3 934.0,582.3 936.0,585.4 938.0,587.0 940.0,586.5 942.0,584.6 944.0,582.7 946.0,582.2 948.0,583.8 950.0,586.8 952.0,589.9 954.0,591.4 956.0,591.0 958.0,589.1 960.0,587.1 962.0,586.7 964.0,588.3 966.0,591.3 968.0,594.3 970.0,595.9 972.0,595.4 974.0,593.5 976.0,591.6 978.0,591.2 980.0,592.8" stroke="#c9d5da" stroke-width="1.6"/><polyline points="836.0,554.3 838.0,557.4 840.0,560.4 842.0,562.0 844.0,561.5 846.0,559.6 848.0,557.7 850.0,557.2 852.0,558.8 854.0,561.8 856.0,564.9 858.0,566.5 860.0,566.0 862.0,564.1 864.0,562.2 866.0,561.7 868.0,563.3 870.0,566.3 872.0,569.4 874.0,570.9 876.0,570.5 878.0,568.6 880.0,566.6 882.0,566.2 884.0,567.8 886.0,570.8 888.0,573.8 890.0,575.4 892.0,574.9 894.0,573.0 896.0,571.1 898.0,570.7 900.0,572.3 902.0,575.3 904.0,578.3 906.0,579.9 908.0,579.4 910.0,577.5 912.0,575.6 914.0,575.1 916.0,576.7 918.0,579.8 920.0,582.8 922.0,584.4 924.0,583.9 926.0,582.0 928.0,580.1 930.0,579.6 932.0,581.2 934.0,584.2 936.0,587.3 938.0,588.9 940.0,588.4 942.0,586.5 944.0,584.6 946.0,584.1 948.0,585.7 950.0,588.7 952.0,591.8 954.0,593.3 956.0,592.9 958.0,591.0 960.0,589.0 962.0,588.6 964.0,590.2 966.0,593.2 968.0,596.2 970.0,597.8 972.0,597.3 974.0,595.4 976.0,593.5 978.0,593.1 980.0,594.7" stroke="#6aa0b8" stroke-width="1.2"/><polyline points="836.0,561.1 838.0,563.7 840.0,564.4 842.0,563.3 844.0,561.1 846.0,559.7 848.0,560.0 850.0,562.3 852.0,565.6 854.0,568.2 856.0,568.9 858.0,567.7 860.0,565.6 862.0,564.2 864.0,564.5 866.0,566.8 868.0,570.1 870.0,572.6 872.0,573.4 874.0,572.2 876.0,570.1 878.0,568.6 880.0,569.0 882.0,571.3 884.0,574.5 886.0,577.1 888.0,577.9 890.0,576.7 892.0,574.6 894.0,573.1 896.0,573.5 898.0,575.8 900.0,579.0 902.0,581.6 904.0,582.4 906.0,581.2 908.0,579.1 910.0,577.6 912.0,578.0 914.0,580.3 916.0,583.5 918.0,586.1 920.0,586.8 922.0,585.7 924.0,583.5 926.0,582.1 928.0,582.4 930.0,584.7 932.0,588.0 934.0,590.6 936.0,591.3 938.0,590.1 940.0,588.0 942.0,586.6 944.0,586.9 946.0,589.2 948.0,592.5 950.0,595.0 952.0,595.8 954.0,594.6 956.0,592.5 958.0,591.0 960.0,591.4 962.0,593.7 964.0,596.9 966.0,599.5 968.0,600.3 970.0,599.1 972.0,597.0 974.0,595.5 976.0,595.9 978.0,598.2 980.0,601.4" stroke="#2f6f9c" stroke-width="2"/><polyline points="836.0,563.5 838.0,566.1 840.0,566.8 842.0,565.7 844.0,563.5 846.0,562.1 848.0,562.4 850.0,564.7 852.0,568.0 854.0,570.6 856.0,571.3 858.0,570.1 860.0,568.0 862.0,566.6 864.0,566.9 866.0,569.2 868.0,572.5 870.0,575.0 872.0,575.8 874.0,574.6 876.0,572.5 878.0,571.0 880.0,571.4 882.0,573.7 884.0,576.9 886.0,579.5 888.0,580.3 890.0,579.1 892.0,577.0 894.0,575.5 896.0,575.9 898.0,578.2 900.0,581.4 902.0,584.0 904.0,584.8 906.0,583.6 908.0,581.5 910.0,580.0 912.0,580.4 914.0,582.7 916.0,585.9 918.0,588.5 920.0,589.2 922.0,588.1 924.0,585.9 926.0,584.5 928.0,584.8 930.0,587.1 932.0,590.4 934.0,593.0 936.0,593.7 938.0,592.5 940.0,590.4 942.0,589.0 944.0,589.3 946.0,591.6 948.0,594.9 950.0,597.4 952.0,598.2 954.0,597.0 956.0,594.9 958.0,593.4 960.0,593.8 962.0,596.1 964.0,599.3 966.0,601.9 968.0,602.7 970.0,601.5 972.0,599.4 974.0,597.9 976.0,598.3 978.0,600.6 980.0,603.8" stroke="#c9d5da" stroke-width="1.6"/><polyline points="836.0,565.4 838.0,568.0 840.0,568.7 842.0,567.6 844.0,565.4 846.0,564.0 848.0,564.3 850.0,566.6 852.0,569.9 854.0,572.5 856.0,573.2 858.0,572.0 860.0,569.9 862.0,568.5 864.0,568.8 866.0,571.1 868.0,574.4 870.0,576.9 872.0,577.7 874.0,576.5 876.0,574.4 878.0,572.9 880.0,573.3 882.0,575.6 884.0,578.8 886.0,581.4 888.0,582.2 890.0,581.0 892.0,578.9 894.0,577.4 896.0,577.8 898.0,580.1 900.0,583.3 902.0,585.9 904.0,586.7 906.0,585.5 908.0,583.4 910.0,581.9 912.0,582.3 914.0,584.6 916.0,587.8 918.0,590.4 920.0,591.1 922.0,590.0 924.0,587.8 926.0,586.4 928.0,586.7 930.0,589.0 932.0,592.3 934.0,594.9 936.0,595.6 938.0,594.4 940.0,592.3 942.0,590.9 944.0,591.2 946.0,593.5 948.0,596.8 950.0,599.3 952.0,600.1 954.0,598.9 956.0,596.8 958.0,595.3 960.0,595.7 962.0,598.0 964.0,601.2 966.0,603.8 968.0,604.6 970.0,603.4 972.0,601.3 974.0,599.8 976.0,600.2 978.0,602.5 980.0,605.7" stroke="#6aa0b8" stroke-width="1.2"/><polyline points="836.0,571.0 838.0,570.9 840.0,569.2 842.0,567.1 844.0,566.3 846.0,567.5 848.0,570.3 850.0,573.5 852.0,575.4 854.0,575.4 856.0,573.6 858.0,571.6 860.0,570.8 862.0,572.0 864.0,574.8 866.0,578.0 868.0,579.9 870.0,579.8 872.0,578.1 874.0,576.1 876.0,575.2 878.0,576.4 880.0,579.3 882.0,582.4 884.0,584.4 886.0,584.3 888.0,582.6 890.0,580.6 892.0,579.7 894.0,580.9 896.0,583.8 898.0,586.9 900.0,588.9 902.0,588.8 904.0,587.1 906.0,585.0 908.0,584.2 910.0,585.4 912.0,588.2 914.0,591.4 916.0,593.4 918.0,593.3 920.0,591.6 922.0,589.5 924.0,588.7 926.0,589.9 928.0,592.7 930.0,595.9 932.0,597.8 934.0,597.8 936.0,596.0 938.0,594.0 940.0,593.2 942.0,594.4 944.0,597.2 946.0,600.4 948.0,602.3 950.0,602.2 952.0,600.5 954.0,598.5 956.0,597.6 958.0,598.8 960.0,601.7 962.0,604.8 964.0,606.8 966.0,606.7 968.0,605.0 970.0,603.0 972.0,602.1 974.0,603.3 976.0,606.2 978.0,609.3 980.0,611.3" stroke="#2f6f9c" stroke-width="2"/><polyline points="836.0,573.4 838.0,573.3 840.0,571.6 842.0,569.5 844.0,568.7 846.0,569.9 848.0,572.7 850.0,575.9 852.0,577.8 854.0,577.8 856.0,576.0 858.0,574.0 860.0,573.2 862.0,574.4 864.0,577.2 866.0,580.4 868.0,582.3 870.0,582.2 872.0,580.5 874.0,578.5 876.0,577.6 878.0,578.8 880.0,581.7 882.0,584.8 884.0,586.8 886.0,586.7 888.0,585.0 890.0,583.0 892.0,582.1 894.0,583.3 896.0,586.2 898.0,589.3 900.0,591.3 902.0,591.2 904.0,589.5 906.0,587.4 908.0,586.6 910.0,587.8 912.0,590.6 914.0,593.8 916.0,595.8 918.0,595.7 920.0,594.0 922.0,591.9 924.0,591.1 926.0,592.3 928.0,595.1 930.0,598.3 932.0,600.2 934.0,600.2 936.0,598.4 938.0,596.4 940.0,595.6 942.0,596.8 944.0,599.6 946.0,602.8 948.0,604.7 950.0,604.6 952.0,602.9 954.0,600.9 956.0,600.0 958.0,601.2 960.0,604.1 962.0,607.2 964.0,609.2 966.0,609.1 968.0,607.4 970.0,605.4 972.0,604.5 974.0,605.7 976.0,608.6 978.0,611.7 980.0,613.7" stroke="#c9d5da" stroke-width="1.6"/><polyline points="836.0,575.3 838.0,575.2 840.0,573.5 842.0,571.4 844.0,570.6 846.0,571.8 848.0,574.6 850.0,577.8 852.0,579.7 854.0,579.7 856.0,577.9 858.0,575.9 860.0,575.1 862.0,576.3 864.0,579.1 866.0,582.3 868.0,584.2 870.0,584.1 872.0,582.4 874.0,580.4 876.0,579.5 878.0,580.7 880.0,583.6 882.0,586.7 884.0,588.7 886.0,588.6 888.0,586.9 890.0,584.9 892.0,584.0 894.0,585.2 896.0,588.1 898.0,591.2 900.0,593.2 902.0,593.1 904.0,591.4 906.0,589.3 908.0,588.5 910.0,589.7 912.0,592.5 914.0,595.7 916.0,597.7 918.0,597.6 920.0,595.9 922.0,593.8 924.0,593.0 926.0,594.2 928.0,597.0 930.0,600.2 932.0,602.1 934.0,602.1 936.0,600.3 938.0,598.3 940.0,597.5 942.0,598.7 944.0,601.5 946.0,604.7 948.0,606.6 950.0,606.5 952.0,604.8 954.0,602.8 956.0,601.9 958.0,603.1 960.0,606.0 962.0,609.1 964.0,611.1 966.0,611.0 968.0,609.3 970.0,607.3 972.0,606.4 974.0,607.6 976.0,610.5 978.0,613.6 980.0,615.6" stroke="#6aa0b8" stroke-width="1.2"/><polyline points="836.0,577.0 838.0,575.0 840.0,573.3 842.0,573.2 844.0,575.2 846.0,578.4 848.0,581.2 850.0,582.4 852.0,581.5 854.0,579.5 856.0,577.8 858.0,577.7 860.0,579.7 862.0,582.8 864.0,585.7 866.0,586.9 868.0,586.0 870.0,584.0 872.0,582.2 874.0,582.2 876.0,584.2 878.0,587.3 880.0,590.2 882.0,591.3 884.0,590.5 886.0,588.4 888.0,586.7 890.0,586.7 892.0,588.6 894.0,591.8 896.0,594.6 898.0,595.8 900.0,595.0 902.0,592.9 904.0,591.2 906.0,591.1 908.0,593.1 910.0,596.3 912.0,599.1 914.0,600.3 916.0,599.4 918.0,597.4 920.0,595.7 922.0,595.6 924.0,597.6 926.0,600.8 928.0,603.6 930.0,604.8 932.0,603.9 934.0,601.9 936.0,600.2 938.0,600.1 940.0,602.1 942.0,605.2 944.0,608.1 946.0,609.3 948.0,608.4 950.0,606.4 952.0,604.6 954.0,604.6 956.0,606.6 958.0,609.7 960.0,612.6 962.0,613.7 964.0,612.9 966.0,610.8 968.0,609.1 970.0,609.1 972.0,611.0 974.0,614.2 976.0,617.0 978.0,618.2 980.0,617.4" stroke="#2f6f9c" stroke-width="2"/><polyline points="836.0,579.4 838.0,577.4 840.0,575.7 842.0,575.6 844.0,577.6 846.0,580.8 848.0,583.6 850.0,584.8 852.0,583.9 854.0,581.9 856.0,580.2 858.0,580.1 860.0,582.1 862.0,585.2 864.0,588.1 866.0,589.3 868.0,588.4 870.0,586.4 872.0,584.6 874.0,584.6 876.0,586.6 878.0,589.7 880.0,592.6 882.0,593.7 884.0,592.9 886.0,590.8 888.0,589.1 890.0,589.1 892.0,591.0 894.0,594.2 896.0,597.0 898.0,598.2 900.0,597.4 902.0,595.3 904.0,593.6 906.0,593.5 908.0,595.5 910.0,598.7 912.0,601.5 914.0,602.7 916.0,601.8 918.0,599.8 920.0,598.1 922.0,598.0 924.0,600.0 926.0,603.2 928.0,606.0 930.0,607.2 932.0,606.3 934.0,604.3 936.0,602.6 938.0,602.5 940.0,604.5 942.0,607.6 944.0,610.5 946.0,611.7 948.0,610.8 950.0,608.8 952.0,607.0 954.0,607.0 956.0,609.0 958.0,612.1 960.0,615.0 962.0,616.1 964.0,615.3 966.0,613.2 968.0,611.5 970.0,611.5 972.0,613.4 974.0,616.6 976.0,619.4 978.0,620.6 980.0,619.8" stroke="#c9d5da" stroke-width="1.6"/><polyline points="836.0,581.3 838.0,579.3 840.0,577.6 842.0,577.5 844.0,579.5 846.0,582.7 848.0,585.5 850.0,586.7 852.0,585.8 854.0,583.8 856.0,582.1 858.0,582.0 860.0,584.0 862.0,587.1 864.0,590.0 866.0,591.2 868.0,590.3 870.0,588.3 872.0,586.5 874.0,586.5 876.0,588.5 878.0,591.6 880.0,594.5 882.0,595.6 884.0,594.8 886.0,592.7 888.0,591.0 890.0,591.0 892.0,592.9 894.0,596.1 896.0,598.9 898.0,600.1 900.0,599.3 902.0,597.2 904.0,595.5 906.0,595.4 908.0,597.4 910.0,600.6 912.0,603.4 914.0,604.6 916.0,603.7 918.0,601.7 920.0,600.0 922.0,599.9 924.0,601.9 926.0,605.1 928.0,607.9 930.0,609.1 932.0,608.2 934.0,606.2 936.0,604.5 938.0,604.4 940.0,606.4 942.0,609.5 944.0,612.4 946.0,613.6 948.0,612.7 950.0,610.7 952.0,608.9 954.0,608.9 956.0,610.9 958.0,614.0 960.0,616.9 962.0,618.0 964.0,617.2 966.0,615.1 968.0,613.4 970.0,613.4 972.0,615.3 974.0,618.5 976.0,621.3 978.0,622.5 980.0,621.7" stroke="#6aa0b8" stroke-width="1.2"/><polyline points="836.0,580.9 838.0,579.7 840.0,580.5 842.0,583.1 844.0,586.3 846.0,588.6 848.0,589.0 850.0,587.5 852.0,585.4 854.0,584.2 856.0,585.0 858.0,587.6 860.0,590.8 862.0,593.1 864.0,593.5 866.0,592.0 868.0,589.9 870.0,588.7 872.0,589.5 874.0,592.1 876.0,595.3 878.0,597.6 880.0,597.9 882.0,596.4 884.0,594.3 886.0,593.2 888.0,593.9 890.0,596.6 892.0,599.8 894.0,602.1 896.0,602.4 898.0,600.9 900.0,598.8 902.0,597.6 904.0,598.4 906.0,601.0 908.0,604.3 910.0,606.6 912.0,606.9 914.0,605.4 916.0,603.3 918.0,602.1 920.0,602.9 922.0,605.5 924.0,608.7 926.0,611.0 928.0,611.4 930.0,609.9 932.0,607.8 934.0,606.6 936.0,607.4 938.0,610.0 940.0,613.2 942.0,615.5 944.0,615.9 946.0,614.4 948.0,612.3 950.0,611.1 952.0,611.9 954.0,614.5 956.0,617.7 958.0,620.0 960.0,620.3 962.0,618.8 964.0,616.7 966.0,615.6 968.0,616.3 970.0,619.0 972.0,622.2 974.0,624.5 976.0,624.8 978.0,623.3 980.0,621.2" stroke="#2f6f9c" stroke-width="2"/><polyline points="836.0,583.3 838.0,582.1 840.0,582.9 842.0,585.5 844.0,588.7 846.0,591.0 848.0,591.4 850.0,589.9 852.0,587.8 854.0,586.6 856.0,587.4 858.0,590.0 860.0,593.2 862.0,595.5 864.0,595.9 866.0,594.4 868.0,592.3 870.0,591.1 872.0,591.9 874.0,594.5 876.0,597.7 878.0,600.0 880.0,600.3 882.0,598.8 884.0,596.7 886.0,595.6 888.0,596.3 890.0,599.0 892.0,602.2 894.0,604.5 896.0,604.8 898.0,603.3 900.0,601.2 902.0,600.0 904.0,600.8 906.0,603.4 908.0,606.7 910.0,609.0 912.0,609.3 914.0,607.8 916.0,605.7 918.0,604.5 920.0,605.3 922.0,607.9 924.0,611.1 926.0,613.4 928.0,613.8 930.0,612.3 932.0,610.2 934.0,609.0 936.0,609.8 938.0,612.4 940.0,615.6 942.0,617.9 944.0,618.3 946.0,616.8 948.0,614.7 950.0,613.5 952.0,614.3 954.0,616.9 956.0,620.1 958.0,622.4 960.0,622.7 962.0,621.2 964.0,619.1 966.0,618.0 968.0,618.7 970.0,621.4 972.0,624.6 974.0,626.9 976.0,627.2 978.0,625.7 980.0,623.6" stroke="#c9d5da" stroke-width="1.6"/><polyline points="836.0,585.2 838.0,584.0 840.0,584.8 842.0,587.4 844.0,590.6 846.0,592.9 848.0,593.3 850.0,591.8 852.0,589.7 854.0,588.5 856.0,589.3 858.0,591.9 860.0,595.1 862.0,597.4 864.0,597.8 866.0,596.3 868.0,594.2 870.0,593.0 872.0,593.8 874.0,596.4 876.0,599.6 878.0,601.9 880.0,602.2 882.0,600.7 884.0,598.6 886.0,597.5 888.0,598.2 890.0,600.9 892.0,604.1 894.0,606.4 896.0,606.7 898.0,605.2 900.0,603.1 902.0,601.9 904.0,602.7 906.0,605.3 908.0,608.6 910.0,610.9 912.0,611.2 914.0,609.7 916.0,607.6 918.0,606.4 920.0,607.2 922.0,609.8 924.0,613.0 926.0,615.3 928.0,615.7 930.0,614.2 932.0,612.1 934.0,610.9 936.0,611.7 938.0,614.3 940.0,617.5 942.0,619.8 944.0,620.2 946.0,618.7 948.0,616.6 950.0,615.4 952.0,616.2 954.0,618.8 956.0,622.0 958.0,624.3 960.0,624.6 962.0,623.1 964.0,621.0 966.0,619.9 968.0,620.6 970.0,623.3 972.0,626.5 974.0,628.8 976.0,629.1 978.0,627.6 980.0,625.5" stroke="#6aa0b8" stroke-width="1.2"/><polyline points="836.0,586.5 838.0,588.1 840.0,591.1 842.0,594.2 844.0,595.7 846.0,595.3 848.0,593.3 850.0,591.4 852.0,591.0 854.0,592.6 856.0,595.6 858.0,598.6 860.0,600.2 862.0,599.7 864.0,597.8 866.0,595.9 868.0,595.5 870.0,597.1 872.0,600.1 874.0,603.1 876.0,604.7 878.0,604.2 880.0,602.3 882.0,600.4 884.0,599.9 886.0,601.5 888.0,604.6 890.0,607.6 892.0,609.2 894.0,608.7 896.0,606.8 898.0,604.9 900.0,604.4 902.0,606.0 904.0,609.1 906.0,612.1 908.0,613.7 910.0,613.2 912.0,611.3 914.0,609.4 916.0,608.9 918.0,610.5 920.0,613.5 922.0,616.6 924.0,618.1 926.0,617.7 928.0,615.7 930.0,613.8 932.0,613.4 934.0,615.0 936.0,618.0 938.0,621.0 940.0,622.6 942.0,622.1 944.0,620.2 946.0,618.3 948.0,617.9 950.0,619.5 952.0,622.5 954.0,625.5 956.0,627.1 958.0,626.6 960.0,624.7 962.0,622.8 964.0,622.3 966.0,623.9 968.0,627.0 970.0,630.0 972.0,631.6 974.0,631.1 976.0,629.2 978.0,627.3 980.0,626.8" stroke="#2f6f9c" stroke-width="2"/><polyline points="836.0,588.9 838.0,590.5 840.0,593.5 842.0,596.6 844.0,598.1 846.0,597.7 848.0,595.7 850.0,593.8 852.0,593.4 854.0,595.0 856.0,598.0 858.0,601.0 860.0,602.6 862.0,602.1 864.0,600.2 866.0,598.3 868.0,597.9 870.0,599.5 872.0,602.5 874.0,605.5 876.0,607.1 878.0,606.6 880.0,604.7 882.0,602.8 884.0,602.3 886.0,603.9 888.0,607.0 890.0,610.0 892.0,611.6 894.0,611.1 896.0,609.2 898.0,607.3 900.0,606.8 902.0,608.4 904.0,611.5 906.0,614.5 908.0,616.1 910.0,615.6 912.0,613.7 914.0,611.8 916.0,611.3 918.0,612.9 920.0,615.9 922.0,619.0 924.0,620.5 926.0,620.1 928.0,618.1 930.0,616.2 932.0,615.8 934.0,617.4 936.0,620.4 938.0,623.4 940.0,625.0 942.0,624.5 944.0,622.6 946.0,620.7 948.0,620.3 950.0,621.9 952.0,624.9 954.0,627.9 956.0,629.5 958.0,629.0 960.0,627.1 962.0,625.2 964.0,624.7 966.0,626.3 968.0,629.4 970.0,632.4 972.0,634.0 974.0,633.5 976.0,631.6 978.0,629.7 980.0,629.2" stroke="#c9d5da" stroke-width="1.6"/><polyline points="836.0,590.8 838.0,592.4 840.0,595.4 842.0,598.5 844.0,600.0 846.0,599.6 848.0,597.6 850.0,595.7 852.0,595.3 854.0,596.9 856.0,599.9 858.0,602.9 860.0,604.5 862.0,604.0 864.0,602.1 866.0,600.2 868.0,599.8 870.0,601.4 872.0,604.4 874.0,607.4 876.0,609.0 878.0,608.5 880.0,606.6 882.0,604.7 884.0,604.2 886.0,605.8 888.0,608.9 890.0,611.9 892.0,613.5 894.0,613.0 896.0,611.1 898.0,609.2 900.0,608.7 902.0,610.3 904.0,613.4 906.0,616.4 908.0,618.0 910.0,617.5 912.0,615.6 914.0,613.7 916.0,613.2 918.0,614.8 920.0,617.8 922.0,620.9 924.0,622.4 926.0,622.0 928.0,620.0 930.0,618.1 932.0,617.7 934.0,619.3 936.0,622.3 938.0,625.3 940.0,626.9 942.0,626.4 944.0,624.5 946.0,622.6 948.0,622.2 950.0,623.8 952.0,626.8 954.0,629.8 956.0,631.4 958.0,630.9 960.0,629.0 962.0,627.1 964.0,626.6 966.0,628.2 968.0,631.3 970.0,634.3 972.0,635.9 974.0,635.4 976.0,633.5 978.0,631.6 980.0,631.1" stroke="#6aa0b8" stroke-width="1.2"/><polyline points="836.0,595.9 838.0,599.2 840.0,601.7 842.0,602.5 844.0,601.3 846.0,599.2 848.0,597.7 850.0,598.1 852.0,600.4 854.0,603.6 856.0,606.2 858.0,607.0 860.0,605.8 862.0,603.7 864.0,602.2 866.0,602.6 868.0,604.9 870.0,608.1 872.0,610.7 874.0,611.5 876.0,610.3 878.0,608.2 880.0,606.7 882.0,607.1 884.0,609.4 886.0,612.6 888.0,615.2 890.0,615.9 892.0,614.8 894.0,612.6 896.0,611.2 898.0,611.5 900.0,613.8 902.0,617.1 904.0,619.7 906.0,620.4 908.0,619.2 910.0,617.1 912.0,615.7 914.0,616.0 916.0,618.3 918.0,621.6 920.0,624.1 922.0,624.9 924.0,623.7 926.0,621.6 928.0,620.1 930.0,620.5 932.0,622.8 934.0,626.0 936.0,628.6 938.0,629.4 940.0,628.2 942.0,626.1 944.0,624.6 946.0,625.0 948.0,627.3 950.0,630.5 952.0,633.1 954.0,633.9 956.0,632.7 958.0,630.6 960.0,629.1 962.0,629.5 964.0,631.8 966.0,635.0 968.0,637.6 970.0,638.3 972.0,637.2 974.0,635.0 976.0,633.6 978.0,633.9 980.0,636.2" stroke="#2f6f9c" stroke-width="2"/><polyline points="836.0,598.3 838.0,601.6 840.0,604.1 842.0,604.9 844.0,603.7 846.0,601.6 848.0,600.1 850.0,600.5 852.0,602.8 854.0,606.0 856.0,608.6 858.0,609.4 860.0,608.2 862.0,606.1 864.0,604.6 866.0,605.0 868.0,607.3 870.0,610.5 872.0,613.1 874.0,613.9 876.0,612.7 878.0,610.6 880.0,609.1 882.0,609.5 884.0,611.8 886.0,615.0 888.0,617.6 890.0,618.3 892.0,617.2 894.0,615.0 896.0,613.6 898.0,613.9 900.0,616.2 902.0,619.5 904.0,622.1 906.0,622.8 908.0,621.6 910.0,619.5 912.0,618.1 914.0,618.4 916.0,620.7 918.0,624.0 920.0,626.5 922.0,627.3 924.0,626.1 926.0,624.0 928.0,622.5 930.0,622.9 932.0,625.2 934.0,628.4 936.0,631.0 938.0,631.8 940.0,630.6 942.0,628.5 944.0,627.0 946.0,627.4 948.0,629.7 950.0,632.9 952.0,635.5 954.0,636.3 956.0,635.1 958.0,633.0 960.0,631.5 962.0,631.9 964.0,634.2 966.0,637.4 968.0,640.0 970.0,640.7 972.0,639.6 974.0,637.4 976.0,636.0 978.0,636.3 980.0,638.6" stroke="#c9d5da" stroke-width="1.6"/><polyline points="836.0,600.2 838.0,603.5 840.0,606.0 842.0,606.8 844.0,605.6 846.0,603.5 848.0,602.0 850.0,602.4 852.0,604.7 854.0,607.9 856.0,610.5 858.0,611.3 860.0,610.1 862.0,608.0 864.0,606.5 866.0,606.9 868.0,609.2 870.0,612.4 872.0,615.0 874.0,615.8 876.0,614.6 878.0,612.5 880.0,611.0 882.0,611.4 884.0,613.7 886.0,616.9 888.0,619.5 890.0,620.2 892.0,619.1 894.0,616.9 896.0,615.5 898.0,615.8 900.0,618.1 902.0,621.4 904.0,624.0 906.0,624.7 908.0,623.5 910.0,621.4 912.0,620.0 914.0,620.3 916.0,622.6 918.0,625.9 920.0,628.4 922.0,629.2 924.0,628.0 926.0,625.9 928.0,624.4 930.0,624.8 932.0,627.1 934.0,630.3 936.0,632.9 938.0,633.7 940.0,632.5 942.0,630.4 944.0,628.9 946.0,629.3 948.0,631.6 950.0,634.8 952.0,637.4 954.0,638.2 956.0,637.0 958.0,634.9 960.0,633.4 962.0,633.8 964.0,636.1 966.0,639.3 968.0,641.9 970.0,642.6 972.0,641.5 974.0,639.3 976.0,637.9 978.0,638.2 980.0,640.5" stroke="#6aa0b8" stroke-width="1.2"/></g><polygon points="901.5,523.0 975.0,565.0 914.8,595.3 840.0,560.5" fill="none" stroke="#3aa2ea" stroke-width="4"/></g><polygon points="918.4,603.7 990.7,638.8 990.7,644.8 918.4,609.7" fill="#3a8ccc"/><polygon points="990.7,638.8 1053.5,609.8 1053.5,615.8 990.7,644.8" fill="#3585c5"/><polygon points="978.7,567.6 1053.5,609.8 990.7,638.8 918.4,603.7" fill="#5f5c52"/><clipPath id="c4"><polygon points="978.7,567.6 1053.5,609.8 990.7,638.8 918.4,603.7"/></clipPath><g clip-path="url(#c4)"><g fill="none"><polyline points="915.0,538.6 917.0,541.0 919.0,545.0 921.0,547.7 923.0,547.1 925.0,543.8 927.0,540.4 929.0,539.4 931.0,541.8 933.0,545.8 935.0,548.5 937.0,548.0 939.0,544.7 941.0,541.2 943.0,540.2 945.0,542.6 947.0,546.7 949.0,549.4 951.0,548.8 953.0,545.5 955.0,542.0 957.0,541.1 959.0,543.5 961.0,547.5 963.0,550.2 965.0,549.7 967.0,546.4 969.0,542.9 971.0,541.9 973.0,544.3 975.0,548.3 977.0,551.0 979.0,550.5 981.0,547.2 983.0,543.7 985.0,542.8 987.0,545.2 989.0,549.2 991.0,551.9 993.0,551.3 995.0,548.0 997.0,544.6 999.0,543.6 1001.0,546.0 1003.0,550.0 1005.0,552.7 1007.0,552.2 1009.0,548.9 1011.0,545.4 1013.0,544.4 1015.0,546.8 1017.0,550.9 1019.0,553.6 1021.0,553.0 1023.0,549.7 1025.0,546.2 1027.0,545.3 1029.0,547.7 1031.0,551.7 1033.0,554.4 1035.0,553.9 1037.0,550.6 1039.0,547.1 1041.0,546.1 1043.0,548.5 1045.0,552.5 1047.0,555.2 1049.0,554.7 1051.0,551.4 1053.0,547.9 1055.0,547.0 1057.0,549.4 1059.0,553.4" stroke="#2f3a3a" stroke-width="2.2"/><polyline points="915.0,540.8 917.0,543.2 919.0,547.2 921.0,549.9 923.0,549.3 925.0,546.0 927.0,542.6 929.0,541.6 931.0,544.0 933.0,548.0 935.0,550.7 937.0,550.2 939.0,546.9 941.0,543.4 943.0,542.4 945.0,544.8 947.0,548.9 949.0,551.6 951.0,551.0 953.0,547.7 955.0,544.2 957.0,543.3 959.0,545.7 961.0,549.7 963.0,552.4 965.0,551.9 967.0,548.6 969.0,545.1 971.0,544.1 973.0,546.5 975.0,550.5 977.0,553.2 979.0,552.7 981.0,549.4 983.0,545.9 985.0,545.0 987.0,547.4 989.0,551.4 991.0,554.1 993.0,553.5 995.0,550.2 997.0,546.8 999.0,545.8 1001.0,548.2 1003.0,552.2 1005.0,554.9 1007.0,554.4 1009.0,551.1 1011.0,547.6 1013.0,546.6 1015.0,549.0 1017.0,553.1 1019.0,555.8 1021.0,555.2 1023.0,551.9 1025.0,548.4 1027.0,547.5 1029.0,549.9 1031.0,553.9 1033.0,556.6 1035.0,556.1 1037.0,552.8 1039.0,549.3 1041.0,548.3 1043.0,550.7 1045.0,554.7 1047.0,557.4 1049.0,556.9 1051.0,553.6 1053.0,550.1 1055.0,549.2 1057.0,551.6 1059.0,555.6" stroke="#7fb8d8" stroke-width="1.1"/><polyline points="915.0,548.6 917.0,552.5 919.0,555.7 921.0,556.0 923.0,553.1 925.0,549.4 927.0,547.7 929.0,549.4 931.0,553.3 933.0,556.6 935.0,556.8 937.0,553.9 939.0,550.2 941.0,548.6 943.0,550.3 945.0,554.2 947.0,557.4 949.0,557.6 951.0,554.8 953.0,551.1 955.0,549.4 957.0,551.1 959.0,555.0 961.0,558.3 963.0,558.5 965.0,555.6 967.0,551.9 969.0,550.2 971.0,552.0 973.0,555.9 975.0,559.1 977.0,559.3 979.0,556.5 981.0,552.7 983.0,551.1 985.0,552.8 987.0,556.7 989.0,559.9 991.0,560.2 993.0,557.3 995.0,553.6 997.0,551.9 999.0,553.6 1001.0,557.5 1003.0,560.8 1005.0,561.0 1007.0,558.1 1009.0,554.4 1011.0,552.8 1013.0,554.5 1015.0,558.4 1017.0,561.6 1019.0,561.8 1021.0,559.0 1023.0,555.3 1025.0,553.6 1027.0,555.3 1029.0,559.2 1031.0,562.5 1033.0,562.7 1035.0,559.8 1037.0,556.1 1039.0,554.4 1041.0,556.2 1043.0,560.1 1045.0,563.3 1047.0,563.5 1049.0,560.7 1051.0,556.9 1053.0,555.3 1055.0,557.0 1057.0,560.9 1059.0,564.1" stroke="#2f3a3a" stroke-width="2.2"/><polyline points="915.0,550.8 917.0,554.7 919.0,557.9 921.0,558.2 923.0,555.3 925.0,551.6 927.0,549.9 929.0,551.6 931.0,555.5 933.0,558.8 935.0,559.0 937.0,556.1 939.0,552.4 941.0,550.8 943.0,552.5 945.0,556.4 947.0,559.6 949.0,559.8 951.0,557.0 953.0,553.3 955.0,551.6 957.0,553.3 959.0,557.2 961.0,560.5 963.0,560.7 965.0,557.8 967.0,554.1 969.0,552.4 971.0,554.2 973.0,558.1 975.0,561.3 977.0,561.5 979.0,558.7 981.0,554.9 983.0,553.3 985.0,555.0 987.0,558.9 989.0,562.1 991.0,562.4 993.0,559.5 995.0,555.8 997.0,554.1 999.0,555.8 1001.0,559.7 1003.0,563.0 1005.0,563.2 1007.0,560.3 1009.0,556.6 1011.0,555.0 1013.0,556.7 1015.0,560.6 1017.0,563.8 1019.0,564.0 1021.0,561.2 1023.0,557.5 1025.0,555.8 1027.0,557.5 1029.0,561.4 1031.0,564.7 1033.0,564.9 1035.0,562.0 1037.0,558.3 1039.0,556.6 1041.0,558.4 1043.0,562.3 1045.0,565.5 1047.0,565.7 1049.0,562.9 1051.0,559.1 1053.0,557.5 1055.0,559.2 1057.0,563.1 1059.0,566.3" stroke="#7fb8d8" stroke-width="1.1"/><polyline points="915.0,560.0 917.0,563.6 919.0,564.6 921.0,562.3 923.0,558.5 925.0,556.2 927.0,557.2 929.0,560.8 931.0,564.5 933.0,565.5 935.0,563.2 937.0,559.4 939.0,557.1 941.0,558.0 943.0,561.7 945.0,565.3 947.0,566.3 949.0,564.0 951.0,560.2 953.0,557.9 955.0,558.9 957.0,562.5 959.0,566.2 961.0,567.1 963.0,564.8 965.0,561.0 967.0,558.7 969.0,559.7 971.0,563.4 973.0,567.0 975.0,568.0 977.0,565.7 979.0,561.9 981.0,559.6 983.0,560.6 985.0,564.2 987.0,567.8 989.0,568.8 991.0,566.5 993.0,562.7 995.0,560.4 997.0,561.4 999.0,565.0 1001.0,568.7 1003.0,569.7 1005.0,567.4 1007.0,563.6 1009.0,561.3 1011.0,562.2 1013.0,565.9 1015.0,569.5 1017.0,570.5 1019.0,568.2 1021.0,564.4 1023.0,562.1 1025.0,563.1 1027.0,566.7 1029.0,570.4 1031.0,571.3 1033.0,569.0 1035.0,565.2 1037.0,562.9 1039.0,563.9 1041.0,567.6 1043.0,571.2 1045.0,572.2 1047.0,569.9 1049.0,566.1 1051.0,563.8 1053.0,564.8 1055.0,568.4 1057.0,572.0 1059.0,573.0" stroke="#2f3a3a" stroke-width="2.2"/><polyline points="915.0,562.2 917.0,565.8 919.0,566.8 921.0,564.5 923.0,560.7 925.0,558.4 927.0,559.4 929.0,563.0 931.0,566.7 933.0,567.7 935.0,565.4 937.0,561.6 939.0,559.3 941.0,560.2 943.0,563.9 945.0,567.5 947.0,568.5 949.0,566.2 951.0,562.4 953.0,560.1 955.0,561.1 957.0,564.7 959.0,568.4 961.0,569.3 963.0,567.0 965.0,563.2 967.0,560.9 969.0,561.9 971.0,565.6 973.0,569.2 975.0,570.2 977.0,567.9 979.0,564.1 981.0,561.8 983.0,562.8 985.0,566.4 987.0,570.0 989.0,571.0 991.0,568.7 993.0,564.9 995.0,562.6 997.0,563.6 999.0,567.2 1001.0,570.9 1003.0,571.9 1005.0,569.6 1007.0,565.8 1009.0,563.5 1011.0,564.4 1013.0,568.1 1015.0,571.7 1017.0,572.7 1019.0,570.4 1021.0,566.6 1023.0,564.3 1025.0,565.3 1027.0,568.9 1029.0,572.6 1031.0,573.5 1033.0,571.2 1035.0,567.4 1037.0,565.1 1039.0,566.1 1041.0,569.8 1043.0,573.4 1045.0,574.4 1047.0,572.1 1049.0,568.3 1051.0,566.0 1053.0,567.0 1055.0,570.6 1057.0,574.2 1059.0,575.2" stroke="#7fb8d8" stroke-width="1.1"/><polyline points="915.0,571.4 917.0,573.1 919.0,571.5 921.0,567.7 923.0,564.9 925.0,565.1 927.0,568.3 929.0,572.2 931.0,574.0 933.0,572.3 935.0,568.6 937.0,565.7 939.0,565.9 941.0,569.2 943.0,573.1 945.0,574.8 947.0,573.1 949.0,569.4 951.0,566.6 953.0,566.8 955.0,570.0 957.0,573.9 959.0,575.6 961.0,574.0 963.0,570.3 965.0,567.4 967.0,567.6 969.0,570.9 971.0,574.8 973.0,576.5 975.0,574.8 977.0,571.1 979.0,568.2 981.0,568.5 983.0,571.7 985.0,575.6 987.0,577.3 989.0,575.7 991.0,571.9 993.0,569.1 995.0,569.3 997.0,572.5 999.0,576.4 1001.0,578.2 1003.0,576.5 1005.0,572.8 1007.0,569.9 1009.0,570.1 1011.0,573.4 1013.0,577.3 1015.0,579.0 1017.0,577.3 1019.0,573.6 1021.0,570.8 1023.0,571.0 1025.0,574.2 1027.0,578.1 1029.0,579.8 1031.0,578.2 1033.0,574.5 1035.0,571.6 1037.0,571.8 1039.0,575.1 1041.0,579.0 1043.0,580.7 1045.0,579.0 1047.0,575.3 1049.0,572.4 1051.0,572.7 1053.0,575.9 1055.0,579.8 1057.0,581.5 1059.0,579.9" stroke="#2f3a3a" stroke-width="2.2"/><polyline points="915.0,573.6 917.0,575.3 919.0,573.7 921.0,569.9 923.0,567.1 925.0,567.3 927.0,570.5 929.0,574.4 931.0,576.2 933.0,574.5 935.0,570.8 937.0,567.9 939.0,568.1 941.0,571.4 943.0,575.3 945.0,577.0 947.0,575.3 949.0,571.6 951.0,568.8 953.0,569.0 955.0,572.2 957.0,576.1 959.0,577.8 961.0,576.2 963.0,572.5 965.0,569.6 967.0,569.8 969.0,573.1 971.0,577.0 973.0,578.7 975.0,577.0 977.0,573.3 979.0,570.4 981.0,570.7 983.0,573.9 985.0,577.8 987.0,579.5 989.0,577.9 991.0,574.1 993.0,571.3 995.0,571.5 997.0,574.7 999.0,578.6 1001.0,580.4 1003.0,578.7 1005.0,575.0 1007.0,572.1 1009.0,572.3 1011.0,575.6 1013.0,579.5 1015.0,581.2 1017.0,579.5 1019.0,575.8 1021.0,573.0 1023.0,573.2 1025.0,576.4 1027.0,580.3 1029.0,582.0 1031.0,580.4 1033.0,576.7 1035.0,573.8 1037.0,574.0 1039.0,577.3 1041.0,581.2 1043.0,582.9 1045.0,581.2 1047.0,577.5 1049.0,574.6 1051.0,574.9 1053.0,578.1 1055.0,582.0 1057.0,583.7 1059.0,582.1" stroke="#7fb8d8" stroke-width="1.1"/><polyline points="915.0,581.4 917.0,580.5 919.0,577.0 921.0,573.7 923.0,573.2 925.0,575.9 927.0,579.9 929.0,582.3 931.0,581.3 933.0,577.8 935.0,574.5 937.0,574.0 939.0,576.7 941.0,580.7 943.0,583.1 945.0,582.2 947.0,578.7 949.0,575.4 951.0,574.8 953.0,577.5 955.0,581.6 957.0,584.0 959.0,583.0 961.0,579.5 963.0,576.2 965.0,575.7 967.0,578.4 969.0,582.4 971.0,584.8 973.0,583.8 975.0,580.4 977.0,577.1 979.0,576.5 981.0,579.2 983.0,583.2 985.0,585.6 987.0,584.7 989.0,581.2 991.0,577.9 993.0,577.4 995.0,580.1 997.0,584.1 999.0,586.5 1001.0,585.5 1003.0,582.0 1005.0,578.7 1007.0,578.2 1009.0,580.9 1011.0,584.9 1013.0,587.3 1015.0,586.4 1017.0,582.9 1019.0,579.6 1021.0,579.0 1023.0,581.7 1025.0,585.8 1027.0,588.2 1029.0,587.2 1031.0,583.7 1033.0,580.4 1035.0,579.9 1037.0,582.6 1039.0,586.6 1041.0,589.0 1043.0,588.0 1045.0,584.6 1047.0,581.3 1049.0,580.7 1051.0,583.4 1053.0,587.4 1055.0,589.8 1057.0,588.9 1059.0,585.4" stroke="#2f3a3a" stroke-width="2.2"/><polyline points="915.0,583.6 917.0,582.7 919.0,579.2 921.0,575.9 923.0,575.4 925.0,578.1 927.0,582.1 929.0,584.5 931.0,583.5 933.0,580.0 935.0,576.7 937.0,576.2 939.0,578.9 941.0,582.9 943.0,585.3 945.0,584.4 947.0,580.9 949.0,577.6 951.0,577.0 953.0,579.7 955.0,583.8 957.0,586.2 959.0,585.2 961.0,581.7 963.0,578.4 965.0,577.9 967.0,580.6 969.0,584.6 971.0,587.0 973.0,586.0 975.0,582.6 977.0,579.3 979.0,578.7 981.0,581.4 983.0,585.4 985.0,587.8 987.0,586.9 989.0,583.4 991.0,580.1 993.0,579.6 995.0,582.3 997.0,586.3 999.0,588.7 1001.0,587.7 1003.0,584.2 1005.0,580.9 1007.0,580.4 1009.0,583.1 1011.0,587.1 1013.0,589.5 1015.0,588.6 1017.0,585.1 1019.0,581.8 1021.0,581.2 1023.0,583.9 1025.0,588.0 1027.0,590.4 1029.0,589.4 1031.0,585.9 1033.0,582.6 1035.0,582.1 1037.0,584.8 1039.0,588.8 1041.0,591.2 1043.0,590.2 1045.0,586.8 1047.0,583.5 1049.0,582.9 1051.0,585.6 1053.0,589.6 1055.0,592.0 1057.0,591.1 1059.0,587.6" stroke="#7fb8d8" stroke-width="1.1"/><polyline points="915.0,589.4 917.0,586.3 919.0,582.7 921.0,581.4 923.0,583.5 925.0,587.5 927.0,590.4 929.0,590.2 931.0,587.1 933.0,583.5 935.0,582.2 937.0,584.3 939.0,588.3 941.0,591.3 943.0,591.1 945.0,587.9 947.0,584.3 949.0,583.1 951.0,585.1 953.0,589.1 955.0,592.1 957.0,591.9 959.0,588.8 961.0,585.2 963.0,583.9 965.0,586.0 967.0,590.0 969.0,592.9 971.0,592.7 973.0,589.6 975.0,586.0 977.0,584.7 979.0,586.8 981.0,590.8 983.0,593.8 985.0,593.6 987.0,590.5 989.0,586.9 991.0,585.6 993.0,587.7 995.0,591.7 997.0,594.6 999.0,594.4 1001.0,591.3 1003.0,587.7 1005.0,586.4 1007.0,588.5 1009.0,592.5 1011.0,595.5 1013.0,595.3 1015.0,592.1 1017.0,588.5 1019.0,587.3 1021.0,589.3 1023.0,593.3 1025.0,596.3 1027.0,596.1 1029.0,593.0 1031.0,589.4 1033.0,588.1 1035.0,590.2 1037.0,594.2 1039.0,597.1 1041.0,596.9 1043.0,593.8 1045.0,590.2 1047.0,588.9 1049.0,591.0 1051.0,595.0 1053.0,598.0 1055.0,597.8 1057.0,594.7 1059.0,591.1" stroke="#2f3a3a" stroke-width="2.2"/><polyline points="915.0,591.6 917.0,588.5 919.0,584.9 921.0,583.6 923.0,585.7 925.0,589.7 927.0,592.6 929.0,592.4 931.0,589.3 933.0,585.7 935.0,584.4 937.0,586.5 939.0,590.5 941.0,593.5 943.0,593.3 945.0,590.1 947.0,586.5 949.0,585.3 951.0,587.3 953.0,591.3 955.0,594.3 957.0,594.1 959.0,591.0 961.0,587.4 963.0,586.1 965.0,588.2 967.0,592.2 969.0,595.1 971.0,594.9 973.0,591.8 975.0,588.2 977.0,586.9 979.0,589.0 981.0,593.0 983.0,596.0 985.0,595.8 987.0,592.7 989.0,589.1 991.0,587.8 993.0,589.9 995.0,593.9 997.0,596.8 999.0,596.6 1001.0,593.5 1003.0,589.9 1005.0,588.6 1007.0,590.7 1009.0,594.7 1011.0,597.7 1013.0,597.5 1015.0,594.3 1017.0,590.7 1019.0,589.5 1021.0,591.5 1023.0,595.5 1025.0,598.5 1027.0,598.3 1029.0,595.2 1031.0,591.6 1033.0,590.3 1035.0,592.4 1037.0,596.4 1039.0,599.3 1041.0,599.1 1043.0,596.0 1045.0,592.4 1047.0,591.1 1049.0,593.2 1051.0,597.2 1053.0,600.2 1055.0,600.0 1057.0,596.9 1059.0,593.3" stroke="#7fb8d8" stroke-width="1.1"/><polyline points="915.0,595.5 917.0,591.7 919.0,589.8 921.0,591.2 923.0,595.0 925.0,598.4 927.0,599.0 929.0,596.3 931.0,592.6 933.0,590.6 935.0,592.0 937.0,595.8 939.0,599.2 941.0,599.8 943.0,597.2 945.0,593.4 947.0,591.5 949.0,592.8 951.0,596.6 953.0,600.1 955.0,600.7 957.0,598.0 959.0,594.3 961.0,592.3 963.0,593.7 965.0,597.5 967.0,600.9 969.0,601.5 971.0,598.9 973.0,595.1 975.0,593.1 977.0,594.5 979.0,598.3 981.0,601.8 983.0,602.3 985.0,599.7 987.0,595.9 989.0,594.0 991.0,595.4 993.0,599.2 995.0,602.6 997.0,603.2 999.0,600.5 1001.0,596.8 1003.0,594.8 1005.0,596.2 1007.0,600.0 1009.0,603.4 1011.0,604.0 1013.0,601.4 1015.0,597.6 1017.0,595.7 1019.0,597.0 1021.0,600.8 1023.0,604.3 1025.0,604.9 1027.0,602.2 1029.0,598.5 1031.0,596.5 1033.0,597.9 1035.0,601.7 1037.0,605.1 1039.0,605.7 1041.0,603.1 1043.0,599.3 1045.0,597.3 1047.0,598.7 1049.0,602.5 1051.0,606.0 1053.0,606.5 1055.0,603.9 1057.0,600.1 1059.0,598.2" stroke="#2f3a3a" stroke-width="2.2"/><polyline points="915.0,597.7 917.0,593.9 919.0,592.0 921.0,593.4 923.0,597.2 925.0,600.6 927.0,601.2 929.0,598.5 931.0,594.8 933.0,592.8 935.0,594.2 937.0,598.0 939.0,601.4 941.0,602.0 943.0,599.4 945.0,595.6 947.0,593.7 949.0,595.0 951.0,598.8 953.0,602.3 955.0,602.9 957.0,600.2 959.0,596.5 961.0,594.5 963.0,595.9 965.0,599.7 967.0,603.1 969.0,603.7 971.0,601.1 973.0,597.3 975.0,595.3 977.0,596.7 979.0,600.5 981.0,604.0 983.0,604.5 985.0,601.9 987.0,598.1 989.0,596.2 991.0,597.6 993.0,601.4 995.0,604.8 997.0,605.4 999.0,602.7 1001.0,599.0 1003.0,597.0 1005.0,598.4 1007.0,602.2 1009.0,605.6 1011.0,606.2 1013.0,603.6 1015.0,599.8 1017.0,597.9 1019.0,599.2 1021.0,603.0 1023.0,606.5 1025.0,607.1 1027.0,604.4 1029.0,600.7 1031.0,598.7 1033.0,600.1 1035.0,603.9 1037.0,607.3 1039.0,607.9 1041.0,605.3 1043.0,601.5 1045.0,599.5 1047.0,600.9 1049.0,604.7 1051.0,608.2 1053.0,608.7 1055.0,606.1 1057.0,602.3 1059.0,600.4" stroke="#7fb8d8" stroke-width="1.1"/><polyline points="915.0,600.9 917.0,598.3 919.0,599.0 921.0,602.5 923.0,606.2 925.0,607.6 927.0,605.5 929.0,601.8 931.0,599.2 933.0,599.8 935.0,603.3 937.0,607.1 939.0,608.4 941.0,606.4 943.0,602.6 945.0,600.0 947.0,600.7 949.0,604.1 951.0,607.9 953.0,609.2 955.0,607.2 957.0,603.4 959.0,600.9 961.0,601.5 963.0,605.0 965.0,608.8 967.0,610.1 969.0,608.1 971.0,604.3 973.0,601.7 975.0,602.3 977.0,605.8 979.0,609.6 981.0,610.9 983.0,608.9 985.0,605.1 987.0,602.5 989.0,603.2 991.0,606.7 993.0,610.4 995.0,611.8 997.0,609.7 999.0,606.0 1001.0,603.4 1003.0,604.0 1005.0,607.5 1007.0,611.3 1009.0,612.6 1011.0,610.6 1013.0,606.8 1015.0,604.2 1017.0,604.9 1019.0,608.3 1021.0,612.1 1023.0,613.4 1025.0,611.4 1027.0,607.6 1029.0,605.1 1031.0,605.7 1033.0,609.2 1035.0,613.0 1037.0,614.3 1039.0,612.3 1041.0,608.5 1043.0,605.9 1045.0,606.5 1047.0,610.0 1049.0,613.8 1051.0,615.1 1053.0,613.1 1055.0,609.3 1057.0,606.7 1059.0,607.4" stroke="#2f3a3a" stroke-width="2.2"/><polyline points="915.0,603.1 917.0,600.5 919.0,601.2 921.0,604.7 923.0,608.4 925.0,609.8 927.0,607.7 929.0,604.0 931.0,601.4 933.0,602.0 935.0,605.5 937.0,609.3 939.0,610.6 941.0,608.6 943.0,604.8 945.0,602.2 947.0,602.9 949.0,606.3 951.0,610.1 953.0,611.4 955.0,609.4 957.0,605.6 959.0,603.1 961.0,603.7 963.0,607.2 965.0,611.0 967.0,612.3 969.0,610.3 971.0,606.5 973.0,603.9 975.0,604.5 977.0,608.0 979.0,611.8 981.0,613.1 983.0,611.1 985.0,607.3 987.0,604.7 989.0,605.4 991.0,608.9 993.0,612.6 995.0,614.0 997.0,611.9 999.0,608.2 1001.0,605.6 1003.0,606.2 1005.0,609.7 1007.0,613.5 1009.0,614.8 1011.0,612.8 1013.0,609.0 1015.0,606.4 1017.0,607.1 1019.0,610.5 1021.0,614.3 1023.0,615.6 1025.0,613.6 1027.0,609.8 1029.0,607.3 1031.0,607.9 1033.0,611.4 1035.0,615.2 1037.0,616.5 1039.0,614.5 1041.0,610.7 1043.0,608.1 1045.0,608.7 1047.0,612.2 1049.0,616.0 1051.0,617.3 1053.0,615.3 1055.0,611.5 1057.0,608.9 1059.0,609.6" stroke="#7fb8d8" stroke-width="1.1"/><polyline points="915.0,607.1 917.0,606.9 919.0,610.0 921.0,613.9 923.0,616.0 925.0,614.6 927.0,611.0 929.0,607.9 931.0,607.8 933.0,610.8 935.0,614.8 937.0,616.8 939.0,615.5 941.0,611.8 943.0,608.8 945.0,608.6 947.0,611.6 949.0,615.6 951.0,617.7 953.0,616.3 955.0,612.7 957.0,609.6 959.0,609.5 961.0,612.5 963.0,616.5 965.0,618.5 967.0,617.1 969.0,613.5 971.0,610.4 973.0,610.3 975.0,613.3 977.0,617.3 979.0,619.3 981.0,618.0 983.0,614.4 985.0,611.3 987.0,611.1 989.0,614.2 991.0,618.1 993.0,620.2 995.0,618.8 997.0,615.2 999.0,612.1 1001.0,612.0 1003.0,615.0 1005.0,619.0 1007.0,621.0 1009.0,619.7 1011.0,616.0 1013.0,613.0 1015.0,612.8 1017.0,615.8 1019.0,619.8 1021.0,621.9 1023.0,620.5 1025.0,616.9 1027.0,613.8 1029.0,613.7 1031.0,616.7 1033.0,620.7 1035.0,622.7 1037.0,621.3 1039.0,617.7 1041.0,614.6 1043.0,614.5 1045.0,617.5 1047.0,621.5 1049.0,623.5 1051.0,622.2 1053.0,618.6 1055.0,615.5 1057.0,615.3 1059.0,618.4" stroke="#2f3a3a" stroke-width="2.2"/><polyline points="915.0,609.3 917.0,609.1 919.0,612.2 921.0,616.1 923.0,618.2 925.0,616.8 927.0,613.2 929.0,610.1 931.0,610.0 933.0,613.0 935.0,617.0 937.0,619.0 939.0,617.7 941.0,614.0 943.0,611.0 945.0,610.8 947.0,613.8 949.0,617.8 951.0,619.9 953.0,618.5 955.0,614.9 957.0,611.8 959.0,611.7 961.0,614.7 963.0,618.7 965.0,620.7 967.0,619.3 969.0,615.7 971.0,612.6 973.0,612.5 975.0,615.5 977.0,619.5 979.0,621.5 981.0,620.2 983.0,616.6 985.0,613.5 987.0,613.3 989.0,616.4 991.0,620.3 993.0,622.4 995.0,621.0 997.0,617.4 999.0,614.3 1001.0,614.2 1003.0,617.2 1005.0,621.2 1007.0,623.2 1009.0,621.9 1011.0,618.2 1013.0,615.2 1015.0,615.0 1017.0,618.0 1019.0,622.0 1021.0,624.1 1023.0,622.7 1025.0,619.1 1027.0,616.0 1029.0,615.9 1031.0,618.9 1033.0,622.9 1035.0,624.9 1037.0,623.5 1039.0,619.9 1041.0,616.8 1043.0,616.7 1045.0,619.7 1047.0,623.7 1049.0,625.7 1051.0,624.4 1053.0,620.8 1055.0,617.7 1057.0,617.5 1059.0,620.6" stroke="#7fb8d8" stroke-width="1.1"/><polyline points="915.0,615.1 917.0,617.5 919.0,621.5 921.0,624.2 923.0,623.6 925.0,620.3 927.0,616.8 929.0,615.9 931.0,618.4 933.0,622.4 935.0,625.0 937.0,624.4 939.0,621.1 941.0,617.6 943.0,616.8 945.0,619.2 947.0,623.2 949.0,625.9 951.0,625.3 953.0,621.9 955.0,618.5 957.0,617.6 959.0,620.0 961.0,624.1 963.0,626.7 965.0,626.1 967.0,622.8 969.0,619.3 971.0,618.4 973.0,620.9 975.0,624.9 977.0,627.6 979.0,627.0 981.0,623.6 983.0,620.2 985.0,619.3 987.0,621.7 989.0,625.7 991.0,628.4 993.0,627.8 995.0,624.5 997.0,621.0 999.0,620.1 1001.0,622.6 1003.0,626.6 1005.0,629.2 1007.0,628.6 1009.0,625.3 1011.0,621.8 1013.0,621.0 1015.0,623.4 1017.0,627.4 1019.0,630.1 1021.0,629.5 1023.0,626.1 1025.0,622.7 1027.0,621.8 1029.0,624.2 1031.0,628.3 1033.0,630.9 1035.0,630.3 1037.0,627.0 1039.0,623.5 1041.0,622.6 1043.0,625.1 1045.0,629.1 1047.0,631.8 1049.0,631.2 1051.0,627.8 1053.0,624.4 1055.0,623.5 1057.0,625.9 1059.0,629.9" stroke="#2f3a3a" stroke-width="2.2"/><polyline points="915.0,617.3 917.0,619.7 919.0,623.7 921.0,626.4 923.0,625.8 925.0,622.5 927.0,619.0 929.0,618.1 931.0,620.6 933.0,624.6 935.0,627.2 937.0,626.6 939.0,623.3 941.0,619.8 943.0,619.0 945.0,621.4 947.0,625.4 949.0,628.1 951.0,627.5 953.0,624.1 955.0,620.7 957.0,619.8 959.0,622.2 961.0,626.3 963.0,628.9 965.0,628.3 967.0,625.0 969.0,621.5 971.0,620.6 973.0,623.1 975.0,627.1 977.0,629.8 979.0,629.2 981.0,625.8 983.0,622.4 985.0,621.5 987.0,623.9 989.0,627.9 991.0,630.6 993.0,630.0 995.0,626.7 997.0,623.2 999.0,622.3 1001.0,624.8 1003.0,628.8 1005.0,631.4 1007.0,630.8 1009.0,627.5 1011.0,624.0 1013.0,623.2 1015.0,625.6 1017.0,629.6 1019.0,632.3 1021.0,631.7 1023.0,628.3 1025.0,624.9 1027.0,624.0 1029.0,626.4 1031.0,630.5 1033.0,633.1 1035.0,632.5 1037.0,629.2 1039.0,625.7 1041.0,624.8 1043.0,627.3 1045.0,631.3 1047.0,634.0 1049.0,633.4 1051.0,630.0 1053.0,626.6 1055.0,625.7 1057.0,628.1 1059.0,632.1" stroke="#7fb8d8" stroke-width="1.1"/><polyline points="915.0,625.2 917.0,629.1 919.0,632.3 921.0,632.4 923.0,629.5 925.0,625.8 927.0,624.2 929.0,626.0 931.0,629.9 933.0,633.1 935.0,633.3 937.0,630.4 939.0,626.7 941.0,625.1 943.0,626.8 945.0,630.8 947.0,634.0 949.0,634.1 951.0,631.2 953.0,627.5 955.0,625.9 957.0,627.7 959.0,631.6 961.0,634.8 963.0,635.0 965.0,632.0 967.0,628.3 969.0,626.7 971.0,628.5 973.0,632.4 975.0,635.6 977.0,635.8 979.0,632.9 981.0,629.2 983.0,627.6 985.0,629.4 987.0,633.3 989.0,636.5 991.0,636.6 993.0,633.7 995.0,630.0 997.0,628.4 999.0,630.2 1001.0,634.1 1003.0,637.3 1005.0,637.5 1007.0,634.6 1009.0,630.9 1011.0,629.3 1013.0,631.0 1015.0,635.0 1017.0,638.2 1019.0,638.3 1021.0,635.4 1023.0,631.7 1025.0,630.1 1027.0,631.9 1029.0,635.8 1031.0,639.0 1033.0,639.2 1035.0,636.2 1037.0,632.5 1039.0,630.9 1041.0,632.7 1043.0,636.6 1045.0,639.8 1047.0,640.0 1049.0,637.1 1051.0,633.4 1053.0,631.8 1055.0,633.6 1057.0,637.5 1059.0,640.7" stroke="#2f3a3a" stroke-width="2.2"/><polyline points="915.0,627.4 917.0,631.3 919.0,634.5 921.0,634.6 923.0,631.7 925.0,628.0 927.0,626.4 929.0,628.2 931.0,632.1 933.0,635.3 935.0,635.5 937.0,632.6 939.0,628.9 941.0,627.3 943.0,629.0 945.0,633.0 947.0,636.2 949.0,636.3 951.0,633.4 953.0,629.7 955.0,628.1 957.0,629.9 959.0,633.8 961.0,637.0 963.0,637.2 965.0,634.2 967.0,630.5 969.0,628.9 971.0,630.7 973.0,634.6 975.0,637.8 977.0,638.0 979.0,635.1 981.0,631.4 983.0,629.8 985.0,631.6 987.0,635.5 989.0,638.7 991.0,638.8 993.0,635.9 995.0,632.2 997.0,630.6 999.0,632.4 1001.0,636.3 1003.0,639.5 1005.0,639.7 1007.0,636.8 1009.0,633.1 1011.0,631.5 1013.0,633.2 1015.0,637.2 1017.0,640.4 1019.0,640.5 1021.0,637.6 1023.0,633.9 1025.0,632.3 1027.0,634.1 1029.0,638.0 1031.0,641.2 1033.0,641.4 1035.0,638.4 1037.0,634.7 1039.0,633.1 1041.0,634.9 1043.0,638.8 1045.0,642.0 1047.0,642.2 1049.0,639.3 1051.0,635.6 1053.0,634.0 1055.0,635.8 1057.0,639.7 1059.0,642.9" stroke="#7fb8d8" stroke-width="1.1"/><polyline points="915.0,636.6 917.0,640.2 919.0,641.1 921.0,638.7 923.0,635.0 925.0,632.7 927.0,633.7 929.0,637.4 931.0,641.0 933.0,641.9 935.0,639.6 937.0,635.8 939.0,633.5 941.0,634.6 943.0,638.3 945.0,641.9 947.0,642.8 949.0,640.4 951.0,636.6 953.0,634.4 955.0,635.4 957.0,639.1 959.0,642.7 961.0,643.6 963.0,641.3 965.0,637.5 967.0,635.2 969.0,636.3 971.0,639.9 973.0,643.5 975.0,644.5 977.0,642.1 979.0,638.3 981.0,636.1 983.0,637.1 985.0,640.8 987.0,644.4 989.0,645.3 991.0,642.9 993.0,639.2 995.0,636.9 997.0,637.9 999.0,641.6 1001.0,645.2 1003.0,646.1 1005.0,643.8 1007.0,640.0 1009.0,637.7 1011.0,638.8 1013.0,642.5 1015.0,646.1 1017.0,647.0 1019.0,644.6 1021.0,640.8 1023.0,638.6 1025.0,639.6 1027.0,643.3 1029.0,646.9 1031.0,647.8 1033.0,645.5 1035.0,641.7 1037.0,639.4 1039.0,640.5 1041.0,644.1 1043.0,647.7 1045.0,648.7 1047.0,646.3 1049.0,642.5 1051.0,640.3 1053.0,641.3 1055.0,645.0 1057.0,648.6 1059.0,649.5" stroke="#2f3a3a" stroke-width="2.2"/><polyline points="915.0,638.8 917.0,642.4 919.0,643.3 921.0,640.9 923.0,637.2 925.0,634.9 927.0,635.9 929.0,639.6 931.0,643.2 933.0,644.1 935.0,641.8 937.0,638.0 939.0,635.7 941.0,636.8 943.0,640.5 945.0,644.1 947.0,645.0 949.0,642.6 951.0,638.8 953.0,636.6 955.0,637.6 957.0,641.3 959.0,644.9 961.0,645.8 963.0,643.5 965.0,639.7 967.0,637.4 969.0,638.5 971.0,642.1 973.0,645.7 975.0,646.7 977.0,644.3 979.0,640.5 981.0,638.3 983.0,639.3 985.0,643.0 987.0,646.6 989.0,647.5 991.0,645.1 993.0,641.4 995.0,639.1 997.0,640.1 999.0,643.8 1001.0,647.4 1003.0,648.3 1005.0,646.0 1007.0,642.2 1009.0,639.9 1011.0,641.0 1013.0,644.7 1015.0,648.3 1017.0,649.2 1019.0,646.8 1021.0,643.0 1023.0,640.8 1025.0,641.8 1027.0,645.5 1029.0,649.1 1031.0,650.0 1033.0,647.7 1035.0,643.9 1037.0,641.6 1039.0,642.7 1041.0,646.3 1043.0,649.9 1045.0,650.9 1047.0,648.5 1049.0,644.7 1051.0,642.5 1053.0,643.5 1055.0,647.2 1057.0,650.8 1059.0,651.7" stroke="#7fb8d8" stroke-width="1.1"/><polyline points="915.0,648.0 917.0,649.6 919.0,647.9 921.0,644.2 923.0,641.3 925.0,641.6 927.0,644.9 929.0,648.8 931.0,650.5 933.0,648.7 935.0,645.0 937.0,642.2 939.0,642.5 941.0,645.8 943.0,649.6 945.0,651.3 947.0,649.6 949.0,645.8 951.0,643.0 953.0,643.3 955.0,646.6 957.0,650.5 959.0,652.1 961.0,650.4 963.0,646.7 965.0,643.9 967.0,644.2 969.0,647.4 971.0,651.3 973.0,653.0 975.0,651.2 977.0,647.5 979.0,644.7 981.0,645.0 983.0,648.3 985.0,652.2 987.0,653.8 989.0,652.1 991.0,648.4 993.0,645.5 995.0,645.8 997.0,649.1 999.0,653.0 1001.0,654.7 1003.0,652.9 1005.0,649.2 1007.0,646.4 1009.0,646.7 1011.0,650.0 1013.0,653.8 1015.0,655.5 1017.0,653.8 1019.0,650.0 1021.0,647.2 1023.0,647.5 1025.0,650.8 1027.0,654.7 1029.0,656.3 1031.0,654.6 1033.0,650.9 1035.0,648.1 1037.0,648.4 1039.0,651.6 1041.0,655.5 1043.0,657.2 1045.0,655.4 1047.0,651.7 1049.0,648.9 1051.0,649.2 1053.0,652.5 1055.0,656.4 1057.0,658.0 1059.0,656.3" stroke="#2f3a3a" stroke-width="2.2"/><polyline points="915.0,650.2 917.0,651.8 919.0,650.1 921.0,646.4 923.0,643.5 925.0,643.8 927.0,647.1 929.0,651.0 931.0,652.7 933.0,650.9 935.0,647.2 937.0,644.4 939.0,644.7 941.0,648.0 943.0,651.8 945.0,653.5 947.0,651.8 949.0,648.0 951.0,645.2 953.0,645.5 955.0,648.8 957.0,652.7 959.0,654.3 961.0,652.6 963.0,648.9 965.0,646.1 967.0,646.4 969.0,649.6 971.0,653.5 973.0,655.2 975.0,653.4 977.0,649.7 979.0,646.9 981.0,647.2 983.0,650.5 985.0,654.4 987.0,656.0 989.0,654.3 991.0,650.6 993.0,647.7 995.0,648.0 997.0,651.3 999.0,655.2 1001.0,656.9 1003.0,655.1 1005.0,651.4 1007.0,648.6 1009.0,648.9 1011.0,652.2 1013.0,656.0 1015.0,657.7 1017.0,656.0 1019.0,652.2 1021.0,649.4 1023.0,649.7 1025.0,653.0 1027.0,656.9 1029.0,658.5 1031.0,656.8 1033.0,653.1 1035.0,650.3 1037.0,650.6 1039.0,653.8 1041.0,657.7 1043.0,659.4 1045.0,657.6 1047.0,653.9 1049.0,651.1 1051.0,651.4 1053.0,654.7 1055.0,658.6 1057.0,660.2 1059.0,658.5" stroke="#7fb8d8" stroke-width="1.1"/><polyline points="915.0,657.9 917.0,656.9 919.0,653.4 921.0,650.2 923.0,649.7 925.0,652.4 927.0,656.5 929.0,658.8 931.0,657.8 933.0,654.3 935.0,651.0 937.0,650.5 939.0,653.3 941.0,657.3 943.0,659.6 945.0,658.6 947.0,655.1 949.0,651.8 951.0,651.4 953.0,654.1 955.0,658.1 957.0,660.5 959.0,659.5 961.0,655.9 963.0,652.7 965.0,652.2 967.0,655.0 969.0,659.0 971.0,661.3 973.0,660.3 975.0,656.8 977.0,653.5 979.0,653.0 981.0,655.8 983.0,659.8 985.0,662.1 987.0,661.1 989.0,657.6 991.0,654.4 993.0,653.9 995.0,656.6 997.0,660.7 999.0,663.0 1001.0,662.0 1003.0,658.5 1005.0,655.2 1007.0,654.7 1009.0,657.5 1011.0,661.5 1013.0,663.8 1015.0,662.8 1017.0,659.3 1019.0,656.0 1021.0,655.6 1023.0,658.3 1025.0,662.3 1027.0,664.7 1029.0,663.7 1031.0,660.1 1033.0,656.9 1035.0,656.4 1037.0,659.2 1039.0,663.2 1041.0,665.5 1043.0,664.5 1045.0,661.0 1047.0,657.7 1049.0,657.2 1051.0,660.0 1053.0,664.0 1055.0,666.3 1057.0,665.3 1059.0,661.8" stroke="#2f3a3a" stroke-width="2.2"/><polyline points="915.0,660.1 917.0,659.1 919.0,655.6 921.0,652.4 923.0,651.9 925.0,654.6 927.0,658.7 929.0,661.0 931.0,660.0 933.0,656.5 935.0,653.2 937.0,652.7 939.0,655.5 941.0,659.5 943.0,661.8 945.0,660.8 947.0,657.3 949.0,654.0 951.0,653.6 953.0,656.3 955.0,660.3 957.0,662.7 959.0,661.7 961.0,658.1 963.0,654.9 965.0,654.4 967.0,657.2 969.0,661.2 971.0,663.5 973.0,662.5 975.0,659.0 977.0,655.7 979.0,655.2 981.0,658.0 983.0,662.0 985.0,664.3 987.0,663.3 989.0,659.8 991.0,656.6 993.0,656.1 995.0,658.8 997.0,662.9 999.0,665.2 1001.0,664.2 1003.0,660.7 1005.0,657.4 1007.0,656.9 1009.0,659.7 1011.0,663.7 1013.0,666.0 1015.0,665.0 1017.0,661.5 1019.0,658.2 1021.0,657.8 1023.0,660.5 1025.0,664.5 1027.0,666.9 1029.0,665.9 1031.0,662.3 1033.0,659.1 1035.0,658.6 1037.0,661.4 1039.0,665.4 1041.0,667.7 1043.0,666.7 1045.0,663.2 1047.0,659.9 1049.0,659.4 1051.0,662.2 1053.0,666.2 1055.0,668.5 1057.0,667.5 1059.0,664.0" stroke="#7fb8d8" stroke-width="1.1"/></g></g><g></g><polygon points="570.0,577.7 634.2,612.1 634.2,616.1 570.0,581.7" fill="#c47a58"/><polygon points="634.2,612.1 697.8,577.7 697.8,581.7 634.2,616.1" fill="#b06a4a"/><polygon points="634.2,541.0 697.8,577.7 634.2,612.1 570.0,577.7" fill="#e69878"/><clipPath id="c5"><polygon points="634.2,541.0 697.8,577.7 634.2,612.1 570.0,577.7"/></clipPath><g clip-path="url(#c5)"><defs><pattern id="hp3" patternUnits="userSpaceOnUse" width="18.0" height="13.5"><g fill="none"><path d="M-0.9 1.8 H9.9 V11.7" stroke="#f4bb9c" stroke-width="1.0" transform="translate(1 1)"/><path d="M-0.9 1.8 H9.9 V11.7" stroke="#854a2e" stroke-width="1.0"/><path d="M1.8 4.5 H9.9 V11.7" stroke="#f4bb9c" stroke-width="1.0" transform="translate(1 1)"/><path d="M1.8 4.5 H9.9 V11.7" stroke="#854a2e" stroke-width="1.0"/><path d="M4.5 7.2 H9.9 V11.7" stroke="#f4bb9c" stroke-width="1.0" transform="translate(1 1)"/><path d="M4.5 7.2 H9.9 V11.7" stroke="#854a2e" stroke-width="1.0"/><path d="M8.1 8.6 H18.9 V18.5" stroke="#f4bb9c" stroke-width="1.0" transform="translate(1 1)"/><path d="M8.1 8.6 H18.9 V18.5" stroke="#854a2e" stroke-width="1.0"/><path d="M10.8 11.2 H18.9 V18.5" stroke="#f4bb9c" stroke-width="1.0" transform="translate(1 1)"/><path d="M10.8 11.2 H18.9 V18.5" stroke="#854a2e" stroke-width="1.0"/><path d="M13.5 13.9 H18.9 V18.5" stroke="#f4bb9c" stroke-width="1.0" transform="translate(1 1)"/><path d="M13.5 13.9 H18.9 V18.5" stroke="#854a2e" stroke-width="1.0"/><path d="M-9.9 8.6 H0.9 V18.5" stroke="#f4bb9c" stroke-width="1.0" transform="translate(1 1)"/><path d="M-9.9 8.6 H0.9 V18.5" stroke="#854a2e" stroke-width="1.0"/><path d="M-7.2 11.2 H0.9 V18.5" stroke="#f4bb9c" stroke-width="1.0" transform="translate(1 1)"/><path d="M-7.2 11.2 H0.9 V18.5" stroke="#854a2e" stroke-width="1.0"/><path d="M-4.5 13.9 H0.9 V18.5" stroke="#f4bb9c" stroke-width="1.0" transform="translate(1 1)"/><path d="M-4.5 13.9 H0.9 V18.5" stroke="#854a2e" stroke-width="1.0"/><path d="M-0.9 8.6 H9.9 V18.5" stroke="#f4bb9c" stroke-width="1.0" transform="translate(1 1)"/><path d="M-0.9 8.6 H9.9 V18.5" stroke="#854a2e" stroke-width="1.0"/><path d="M1.8 11.2 H9.9 V18.5" stroke="#f4bb9c" stroke-width="1.0" transform="translate(1 1)"/><path d="M1.8 11.2 H9.9 V18.5" stroke="#854a2e" stroke-width="1.0"/><path d="M4.5 13.9 H9.9 V18.5" stroke="#f4bb9c" stroke-width="1.0" transform="translate(1 1)"/><path d="M4.5 13.9 H9.9 V18.5" stroke="#854a2e" stroke-width="1.0"/><path d="M8.1 -5.0 H18.9 V5.0" stroke="#f4bb9c" stroke-width="1.0" transform="translate(1 1)"/><path d="M8.1 -5.0 H18.9 V5.0" stroke="#854a2e" stroke-width="1.0"/><path d="M10.8 -2.3 H18.9 V5.0" stroke="#f4bb9c" stroke-width="1.0" transform="translate(1 1)"/><path d="M10.8 -2.3 H18.9 V5.0" stroke="#854a2e" stroke-width="1.0"/><path d="M13.5 0.4 H18.9 V5.0" stroke="#f4bb9c" stroke-width="1.0" transform="translate(1 1)"/><path d="M13.5 0.4 H18.9 V5.0" stroke="#854a2e" stroke-width="1.0"/><path d="M-9.9 -5.0 H0.9 V5.0" stroke="#f4bb9c" stroke-width="1.0" transform="translate(1 1)"/><path d="M-9.9 -5.0 H0.9 V5.0" stroke="#854a2e" stroke-width="1.0"/><path d="M-7.2 -2.3 H0.9 V5.0" stroke="#f4bb9c" stroke-width="1.0" transform="translate(1 1)"/><path d="M-7.2 -2.3 H0.9 V5.0" stroke="#854a2e" stroke-width="1.0"/><path d="M-4.5 0.4 H0.9 V5.0" stroke="#f4bb9c" stroke-width="1.0" transform="translate(1 1)"/><path d="M-4.5 0.4 H0.9 V5.0" stroke="#854a2e" stroke-width="1.0"/></g></pattern></defs><rect x="0" y="0" width="1600" height="1036" fill="url(#hp3)" opacity="1"/></g><polygon points="710.3,665.6 773.5,700.0 773.5,704.0 710.3,669.6" fill="#c47a58"/><polygon points="773.5,700.0 838.5,663.6 838.5,667.6 773.5,704.0" fill="#b06a4a"/><polygon points="774.4,629.0 838.5,663.6 773.5,700.0 710.3,665.6" fill="#e69878"/><clipPath id="c6"><polygon points="774.4,629.0 838.5,663.6 773.5,700.0 710.3,665.6"/></clipPath><g clip-path="url(#c6)"><defs><pattern id="hp4" patternUnits="userSpaceOnUse" width="18.0" height="13.5"><g fill="none"><path d="M-0.9 1.8 H9.9 V11.7" stroke="#f4bb9c" stroke-width="1.0" transform="translate(1 1)"/><path d="M-0.9 1.8 H9.9 V11.7" stroke="#854a2e" stroke-width="1.0"/><path d="M1.8 4.5 H9.9 V11.7" stroke="#f4bb9c" stroke-width="1.0" transform="translate(1 1)"/><path d="M1.8 4.5 H9.9 V11.7" stroke="#854a2e" stroke-width="1.0"/><path d="M4.5 7.2 H9.9 V11.7" stroke="#f4bb9c" stroke-width="1.0" transform="translate(1 1)"/><path d="M4.5 7.2 H9.9 V11.7" stroke="#854a2e" stroke-width="1.0"/><path d="M8.1 8.6 H18.9 V18.5" stroke="#f4bb9c" stroke-width="1.0" transform="translate(1 1)"/><path d="M8.1 8.6 H18.9 V18.5" stroke="#854a2e" stroke-width="1.0"/><path d="M10.8 11.2 H18.9 V18.5" stroke="#f4bb9c" stroke-width="1.0" transform="translate(1 1)"/><path d="M10.8 11.2 H18.9 V18.5" stroke="#854a2e" stroke-width="1.0"/><path d="M13.5 13.9 H18.9 V18.5" stroke="#f4bb9c" stroke-width="1.0" transform="translate(1 1)"/><path d="M13.5 13.9 H18.9 V18.5" stroke="#854a2e" stroke-width="1.0"/><path d="M-9.9 8.6 H0.9 V18.5" stroke="#f4bb9c" stroke-width="1.0" transform="translate(1 1)"/><path d="M-9.9 8.6 H0.9 V18.5" stroke="#854a2e" stroke-width="1.0"/><path d="M-7.2 11.2 H0.9 V18.5" stroke="#f4bb9c" stroke-width="1.0" transform="translate(1 1)"/><path d="M-7.2 11.2 H0.9 V18.5" stroke="#854a2e" stroke-width="1.0"/><path d="M-4.5 13.9 H0.9 V18.5" stroke="#f4bb9c" stroke-width="1.0" transform="translate(1 1)"/><path d="M-4.5 13.9 H0.9 V18.5" stroke="#854a2e" stroke-width="1.0"/><path d="M-0.9 8.6 H9.9 V18.5" stroke="#f4bb9c" stroke-width="1.0" transform="translate(1 1)"/><path d="M-0.9 8.6 H9.9 V18.5" stroke="#854a2e" stroke-width="1.0"/><path d="M1.8 11.2 H9.9 V18.5" stroke="#f4bb9c" stroke-width="1.0" transform="translate(1 1)"/><path d="M1.8 11.2 H9.9 V18.5" stroke="#854a2e" stroke-width="1.0"/><path d="M4.5 13.9 H9.9 V18.5" stroke="#f4bb9c" stroke-width="1.0" transform="translate(1 1)"/><path d="M4.5 13.9 H9.9 V18.5" stroke="#854a2e" stroke-width="1.0"/><path d="M8.1 -5.0 H18.9 V5.0" stroke="#f4bb9c" stroke-width="1.0" transform="translate(1 1)"/><path d="M8.1 -5.0 H18.9 V5.0" stroke="#854a2e" stroke-width="1.0"/><path d="M10.8 -2.3 H18.9 V5.0" stroke="#f4bb9c" stroke-width="1.0" transform="translate(1 1)"/><path d="M10.8 -2.3 H18.9 V5.0" stroke="#854a2e" stroke-width="1.0"/><path d="M13.5 0.4 H18.9 V5.0" stroke="#f4bb9c" stroke-width="1.0" transform="translate(1 1)"/><path d="M13.5 0.4 H18.9 V5.0" stroke="#854a2e" stroke-width="1.0"/><path d="M-9.9 -5.0 H0.9 V5.0" stroke="#f4bb9c" stroke-width="1.0" transform="translate(1 1)"/><path d="M-9.9 -5.0 H0.9 V5.0" stroke="#854a2e" stroke-width="1.0"/><path d="M-7.2 -2.3 H0.9 V5.0" stroke="#f4bb9c" stroke-width="1.0" transform="translate(1 1)"/><path d="M-7.2 -2.3 H0.9 V5.0" stroke="#854a2e" stroke-width="1.0"/><path d="M-4.5 0.4 H0.9 V5.0" stroke="#f4bb9c" stroke-width="1.0" transform="translate(1 1)"/><path d="M-4.5 0.4 H0.9 V5.0" stroke="#854a2e" stroke-width="1.0"/></g></pattern></defs><rect x="0" y="0" width="1600" height="1036" fill="url(#hp4)" opacity="1"/></g><polygon points="779.7,625.5 838.8,656.4 838.8,660.4 779.7,629.5" fill="#ab9250"/><polygon points="838.8,656.4 906.3,625.5 906.3,629.5 838.8,660.4" fill="#9a8240"/><polygon points="842.4,588.0 906.3,625.5 838.8,656.4 779.7,625.5" fill="#dfbd72"/><clipPath id="c7"><polygon points="842.4,588.0 906.3,625.5 838.8,656.4 779.7,625.5"/></clipPath><g clip-path="url(#c7)"><defs><pattern id="hp5" patternUnits="userSpaceOnUse" width="18.0" height="13.5"><g fill="none"><path d="M-0.9 1.8 H9.9 V11.7" stroke="#efd898" stroke-width="1.0" transform="translate(1 1)"/><path d="M-0.9 1.8 H9.9 V11.7" stroke="#6f5622" stroke-width="1.0"/><path d="M1.8 4.5 H9.9 V11.7" stroke="#efd898" stroke-width="1.0" transform="translate(1 1)"/><path d="M1.8 4.5 H9.9 V11.7" stroke="#6f5622" stroke-width="1.0"/><path d="M4.5 7.2 H9.9 V11.7" stroke="#efd898" stroke-width="1.0" transform="translate(1 1)"/><path d="M4.5 7.2 H9.9 V11.7" stroke="#6f5622" stroke-width="1.0"/><path d="M8.1 8.6 H18.9 V18.5" stroke="#efd898" stroke-width="1.0" transform="translate(1 1)"/><path d="M8.1 8.6 H18.9 V18.5" stroke="#6f5622" stroke-width="1.0"/><path d="M10.8 11.2 H18.9 V18.5" stroke="#efd898" stroke-width="1.0" transform="translate(1 1)"/><path d="M10.8 11.2 H18.9 V18.5" stroke="#6f5622" stroke-width="1.0"/><path d="M13.5 13.9 H18.9 V18.5" stroke="#efd898" stroke-width="1.0" transform="translate(1 1)"/><path d="M13.5 13.9 H18.9 V18.5" stroke="#6f5622" stroke-width="1.0"/><path d="M-9.9 8.6 H0.9 V18.5" stroke="#efd898" stroke-width="1.0" transform="translate(1 1)"/><path d="M-9.9 8.6 H0.9 V18.5" stroke="#6f5622" stroke-width="1.0"/><path d="M-7.2 11.2 H0.9 V18.5" stroke="#efd898" stroke-width="1.0" transform="translate(1 1)"/><path d="M-7.2 11.2 H0.9 V18.5" stroke="#6f5622" stroke-width="1.0"/><path d="M-4.5 13.9 H0.9 V18.5" stroke="#efd898" stroke-width="1.0" transform="translate(1 1)"/><path d="M-4.5 13.9 H0.9 V18.5" stroke="#6f5622" stroke-width="1.0"/><path d="M-0.9 8.6 H9.9 V18.5" stroke="#efd898" stroke-width="1.0" transform="translate(1 1)"/><path d="M-0.9 8.6 H9.9 V18.5" stroke="#6f5622" stroke-width="1.0"/><path d="M1.8 11.2 H9.9 V18.5" stroke="#efd898" stroke-width="1.0" transform="translate(1 1)"/><path d="M1.8 11.2 H9.9 V18.5" stroke="#6f5622" stroke-width="1.0"/><path d="M4.5 13.9 H9.9 V18.5" stroke="#efd898" stroke-width="1.0" transform="translate(1 1)"/><path d="M4.5 13.9 H9.9 V18.5" stroke="#6f5622" stroke-width="1.0"/><path d="M8.1 -5.0 H18.9 V5.0" stroke="#efd898" stroke-width="1.0" transform="translate(1 1)"/><path d="M8.1 -5.0 H18.9 V5.0" stroke="#6f5622" stroke-width="1.0"/><path d="M10.8 -2.3 H18.9 V5.0" stroke="#efd898" stroke-width="1.0" transform="translate(1 1)"/><path d="M10.8 -2.3 H18.9 V5.0" stroke="#6f5622" stroke-width="1.0"/><path d="M13.5 0.4 H18.9 V5.0" stroke="#efd898" stroke-width="1.0" transform="translate(1 1)"/><path d="M13.5 0.4 H18.9 V5.0" stroke="#6f5622" stroke-width="1.0"/><path d="M-9.9 -5.0 H0.9 V5.0" stroke="#efd898" stroke-width="1.0" transform="translate(1 1)"/><path d="M-9.9 -5.0 H0.9 V5.0" stroke="#6f5622" stroke-width="1.0"/><path d="M-7.2 -2.3 H0.9 V5.0" stroke="#efd898" stroke-width="1.0" transform="translate(1 1)"/><path d="M-7.2 -2.3 H0.9 V5.0" stroke="#6f5622" stroke-width="1.0"/><path d="M-4.5 0.4 H0.9 V5.0" stroke="#efd898" stroke-width="1.0" transform="translate(1 1)"/><path d="M-4.5 0.4 H0.9 V5.0" stroke="#6f5622" stroke-width="1.0"/></g></pattern></defs><rect x="0" y="0" width="1600" height="1036" fill="url(#hp5)" opacity="1"/></g><polygon points="841.2,668.9 897.9,697.4 897.9,701.4 841.2,672.9" fill="#c9a89a"/><polygon points="897.9,697.4 955.8,666.5 955.8,670.5 897.9,701.4" fill="#b99888"/><polygon points="900.3,635.1 955.8,666.5 897.9,697.4 841.2,668.9" fill="#f3c6c9"/><clipPath id="c8"><polygon points="900.3,635.1 955.8,666.5 897.9,697.4 841.2,668.9"/></clipPath><g clip-path="url(#c8)"><g stroke="#a08080" stroke-width="0.8" fill="none" opacity="0.35"><line x1="841.2" y1="668.9" x2="957.0" y2="663.6"/><line x1="900.3" y1="635.1" x2="897.9" y2="697.4"/></g><g fill="#e8b8bc" stroke="#8a7272" stroke-width="0.9" opacity="0.9"><path d="M876 661 L884 657 L900 655 L908 644 L913 644 L908 655 L924 653 L927 655 L910 659 L917 671 L912 671 L902 660 L886 662 L881 668 L878 668 L880 662Z"/></g></g><polygon points="779.7,705.0 835.0,734.8 835.0,738.8 779.7,709.0" fill="#67b86a"/><polygon points="835.0,734.8 895.5,706.3 895.5,710.3 835.0,738.8" fill="#2f8fd0"/><polygon points="840.0,672.5 895.5,706.3 835.0,734.8 779.7,705.0" fill="#80de80"/><clipPath id="c9"><polygon points="840.0,672.5 895.5,706.3 835.0,734.8 779.7,705.0"/></clipPath><g clip-path="url(#c9)"><g stroke="#4a9a4a" stroke-width="0.8" fill="none" opacity="0.35"><line x1="779.7" y1="705.0" x2="895.3" y2="702.3"/><line x1="840.0" y1="672.5" x2="835.0" y2="734.8"/></g><g fill="#b09058" stroke="#8a6a3a" stroke-width="0.6"><path d="M810 709 L866 705 L862 708 L812 712Z M834 707 L836 689 L842 690 L846 706Z M826 710 L824 716 L830 716 L838 709Z"/><path d="M816 706 L852 701 L849 704 L818 709Z M826 704 L821 694 L826 694 L834 703Z"/></g></g><ellipse cx="786.6" cy="579" rx="50" ry="28.5" fill="#4a4052"/><ellipse cx="786.6" cy="574.5" rx="50" ry="28.5" fill="#5f5468" stroke="#7d7386" stroke-width="1.2"/><g fill="#7a6f84" opacity="0.7"><ellipse cx="761.9" cy="561.3" rx="7.2" ry="3.9"/><ellipse cx="784.2" cy="553.4" rx="4.1" ry="2.9"/><ellipse cx="816.8" cy="568.3" rx="7.6" ry="2.2"/><ellipse cx="767.1" cy="576.6" rx="6.2" ry="3.1"/><ellipse cx="805.2" cy="575.3" rx="5.1" ry="3.8"/><ellipse cx="788.2" cy="565.8" rx="7.2" ry="2.3"/><ellipse cx="776.1" cy="569.2" rx="4.0" ry="3.7"/><ellipse cx="791.3" cy="584.4" rx="7.9" ry="3.7"/><ellipse cx="777.0" cy="595.4" rx="6.2" ry="3.4"/><ellipse cx="797.5" cy="595.0" rx="6.8" ry="3.9"/><ellipse cx="803.8" cy="567.1" rx="5.4" ry="2.3"/><ellipse cx="792.8" cy="579.0" rx="5.2" ry="3.2"/><ellipse cx="819.5" cy="574.9" rx="5.4" ry="2.6"/><ellipse cx="798.2" cy="560.6" rx="5.3" ry="3.0"/></g><g stroke="#3a3044" stroke-width="1.4" fill="none" opacity="0.85"><path d="M783.6 568.8 q4 -3 8 0"/><path d="M793.2 573.9 q4 -3 8 0"/><path d="M786.5 551.5 q4 -3 8 0"/><path d="M825.4 577.0 q4 -3 8 0"/><path d="M764.3 588.7 q4 -3 8 0"/><path d="M796.1 574.8 q4 -3 8 0"/><path d="M804.7 596.7 q4 -3 8 0"/><path d="M799.2 595.0 q4 -3 8 0"/><path d="M825.2 564.1 q4 -3 8 0"/><path d="M772.0 586.8 q4 -3 8 0"/><path d="M748.3 571.1 q4 -3 8 0"/><path d="M816.2 588.1 q4 -3 8 0"/><path d="M798.5 552.3 q4 -3 8 0"/><path d="M828.3 580.0 q4 -3 8 0"/><path d="M808.2 582.4 q4 -3 8 0"/><path d="M754.3 559.1 q4 -3 8 0"/><path d="M763.9 594.8 q4 -3 8 0"/><path d="M763.0 570.6 q4 -3 8 0"/><path d="M779.0 584.1 q4 -3 8 0"/><path d="M801.6 579.1 q4 -3 8 0"/><path d="M770.2 551.3 q4 -3 8 0"/><path d="M791.7 579.2 q4 -3 8 0"/><path d="M818.6 573.0 q4 -3 8 0"/><path d="M768.8 581.3 q4 -3 8 0"/><path d="M753.4 561.9 q4 -3 8 0"/><path d="M759.1 579.0 q4 -3 8 0"/><path d="M826.2 582.7 q4 -3 8 0"/><path d="M816.9 578.1 q4 -3 8 0"/><path d="M795.0 566.8 q4 -3 8 0"/><path d="M781.7 550.3 q4 -3 8 0"/><path d="M759.9 558.3 q4 -3 8 0"/><path d="M809.3 584.7 q4 -3 8 0"/><path d="M810.5 593.0 q4 -3 8 0"/><path d="M778.4 590.7 q4 -3 8 0"/><path d="M827.2 574.4 q4 -3 8 0"/><path d="M815.9 572.0 q4 -3 8 0"/><path d="M749.1 576.1 q4 -3 8 0"/><path d="M763.1 576.3 q4 -3 8 0"/><path d="M772.7 579.9 q4 -3 8 0"/><path d="M755.3 591.9 q4 -3 8 0"/></g><ellipse cx="710.3" cy="626" rx="49.5" ry="28" fill="#7f7464"/><ellipse cx="710.3" cy="622" rx="49.5" ry="28" fill="#a09280" stroke="#8a7d6a" stroke-width="1.5"/><g fill="none" stroke="#867a68" stroke-width="1"><ellipse cx="712" cy="620" rx="14" ry="8"/><path d="M700 618 L724 622 M704 626 L720 614"/></g><g fill="none"><ellipse cx="706.5" cy="602.8" rx="11" ry="6.8" stroke="#62574a" stroke-width="4.2"/><ellipse cx="706.5" cy="602.0" rx="10.5" ry="6.3" stroke="#b9ad98" stroke-width="1.3"/><ellipse cx="732.8" cy="607.8" rx="11" ry="6.8" stroke="#62574a" stroke-width="4.2"/><ellipse cx="732.8" cy="607.0" rx="10.5" ry="6.3" stroke="#b9ad98" stroke-width="1.3"/><ellipse cx="681.4" cy="614" rx="11" ry="6.8" stroke="#62574a" stroke-width="4.2"/><ellipse cx="681.4" cy="613.2" rx="10.5" ry="6.3" stroke="#b9ad98" stroke-width="1.3"/><ellipse cx="740.3" cy="625.4" rx="11" ry="6.8" stroke="#62574a" stroke-width="4.2"/><ellipse cx="740.3" cy="624.6" rx="10.5" ry="6.3" stroke="#b9ad98" stroke-width="1.3"/><ellipse cx="686.4" cy="630.4" rx="11" ry="6.8" stroke="#62574a" stroke-width="4.2"/><ellipse cx="686.4" cy="629.6" rx="10.5" ry="6.3" stroke="#b9ad98" stroke-width="1.3"/><ellipse cx="715.2" cy="636.6" rx="11" ry="6.8" stroke="#62574a" stroke-width="4.2"/><ellipse cx="715.2" cy="635.8000000000001" rx="10.5" ry="6.3" stroke="#b9ad98" stroke-width="1.3"/></g><g fill="#3f352c"><ellipse cx="706.5" cy="603.3" rx="5.5" ry="2.6"/><ellipse cx="732.8" cy="608.3" rx="5.5" ry="2.6"/><ellipse cx="681.4" cy="614.5" rx="5.5" ry="2.6"/><ellipse cx="740.3" cy="625.9" rx="5.5" ry="2.6"/><ellipse cx="686.4" cy="630.9" rx="5.5" ry="2.6"/><ellipse cx="715.2" cy="637.1" rx="5.5" ry="2.6"/></g><path d="M830 741 L837 737 L844 741 L837 745Z" fill="#fafafa" stroke="#b8b8a0" stroke-width="1"/><path d="M903 503 L907 517 L899 517Z" fill="#2ee82e"/><path d="M946 566 L950 580 L944 580Z" fill="#e83030"/><path d="M988 626 L992 640 L986 640Z" fill="#e83030"/><path d="M729 803 L729 750" stroke="#1515d8" stroke-width="5.5"/><path d="M722.5 752 L729 735.5 L735.5 752Z" fill="#1515d8"/><text x="729.5" y="727" font-size="11" font-weight="bold" fill="#1a1a9a" text-anchor="middle" font-family="Liberation Sans">Z</text><path d="M722 803 L683 781" stroke="#22e622" stroke-width="5.5"/><path d="M686.5 774.5 L666 771.5 L679.5 787Z" fill="#22e622"/><text x="655" y="768" font-size="10" font-weight="bold" fill="#55dd55" text-anchor="middle" font-family="Liberation Sans">Y</text><path d="M737 803 L777 781" stroke="#e81818" stroke-width="5.5"/><path d="M773.5 774.5 L792 771.5 L780.5 787Z" fill="#e81818"/><text x="803" y="768" font-size="10" font-weight="bold" fill="#e03030" text-anchor="middle" font-family="Liberation Sans">X</text><circle cx="729.4" cy="808" r="4.6" fill="#fff" stroke="#707070" stroke-width="1.8"/><text x="0" y="0" transform="matrix(0.866 -0.5 0.866 0.5 8.7 646.0)" font-size="11" fill="#6a6a6a" text-anchor="middle" dominant-baseline="central" font-family="Liberation Sans">1700</text><text x="0" y="0" transform="matrix(0.866 -0.5 0.866 0.5 35.9 664.7)" font-size="11" fill="#6a6a6a" text-anchor="middle" dominant-baseline="central" font-family="Liberation Sans">1600</text><text x="0" y="0" transform="matrix(0.866 -0.5 0.866 0.5 61.0 681.0)" font-size="11" fill="#6a6a6a" text-anchor="middle" dominant-baseline="central" font-family="Liberation Sans">1500</text><text x="0" y="0" transform="matrix(0.866 -0.5 0.866 0.5 181.5 748.7)" font-size="11" fill="#6a6a6a" text-anchor="middle" dominant-baseline="central" font-family="Liberation Sans">1100</text><text x="0" y="0" transform="matrix(0.866 -0.5 0.866 0.5 210.0 766.0)" font-size="11" fill="#6a6a6a" text-anchor="middle" dominant-baseline="central" font-family="Liberation Sans">1000</text><text x="0" y="0" transform="matrix(0.866 -0.5 0.866 0.5 238.0 783.0)" font-size="11" fill="#6a6a6a" text-anchor="middle" dominant-baseline="central" font-family="Liberation Sans">900</text><text x="0" y="0" transform="matrix(0.866 -0.5 0.866 0.5 265.4 801.8)" font-size="11" fill="#6a6a6a" text-anchor="middle" dominant-baseline="central" font-family="Liberation Sans">800</text><text x="0" y="0" transform="matrix(0.866 -0.5 0.866 0.5 294.4 818.2)" font-size="11" fill="#6a6a6a" text-anchor="middle" dominant-baseline="central" font-family="Liberation Sans">700</text><text x="0" y="0" transform="matrix(0.866 -0.5 0.866 0.5 323.4 835.3)" font-size="11" fill="#6a6a6a" text-anchor="middle" dominant-baseline="central" font-family="Liberation Sans">600</text><text x="0" y="0" transform="matrix(0.866 -0.5 0.866 0.5 352.4 851.8)" font-size="11" fill="#6a6a6a" text-anchor="middle" dominant-baseline="central" font-family="Liberation Sans">500</text><text x="0" y="0" transform="matrix(0.866 -0.5 0.866 0.5 382.9 868.9)" font-size="11" fill="#6a6a6a" text-anchor="middle" dominant-baseline="central" font-family="Liberation Sans">400</text><text x="0" y="0" transform="matrix(0.866 -0.5 0.866 0.5 410.9 885.6)" font-size="11" fill="#6a6a6a" text-anchor="middle" dominant-baseline="central" font-family="Liberation Sans">300</text><text x="0" y="0" transform="matrix(0.866 -0.5 0.866 0.5 440.2 902.4)" font-size="11" fill="#6a6a6a" text-anchor="middle" dominant-baseline="central" font-family="Liberation Sans">200</text><text x="0" y="0" transform="matrix(0.866 -0.5 0.866 0.5 469.2 919.8)" font-size="11" fill="#6a6a6a" text-anchor="middle" dominant-baseline="central" font-family="Liberation Sans">100</text><text x="0" y="0" transform="matrix(0.866 -0.5 0.866 0.5 491.2 940.3)" font-size="11" fill="#6a6a6a" text-anchor="middle" dominant-baseline="central" font-family="Liberation Sans">0</text><text x="0" y="0" transform="matrix(0.866 -0.5 0.866 0.5 527.8 952.5)" font-size="11" fill="#6a6a6a" text-anchor="middle" dominant-baseline="central" font-family="Liberation Sans">100</text><text x="0" y="0" transform="matrix(0.866 -0.5 0.866 0.5 556.8 969.5)" font-size="11" fill="#6a6a6a" text-anchor="middle" dominant-baseline="central" font-family="Liberation Sans">200</text><text x="0" y="0" transform="matrix(0.866 -0.5 0.866 0.5 585.7 986.3)" font-size="11" fill="#6a6a6a" text-anchor="middle" dominant-baseline="central" font-family="Liberation Sans">300</text><text x="0" y="0" transform="matrix(0.866 -0.5 0.866 0.5 614.7 1002.2)" font-size="11" fill="#6a6a6a" text-anchor="middle" dominant-baseline="central" font-family="Liberation Sans">400</text><text x="0" y="0" transform="matrix(0.866 -0.5 0.866 0.5 643.0 1019.0)" font-size="11" fill="#6a6a6a" text-anchor="middle" dominant-baseline="central" font-family="Liberation Sans">500</text><text x="0" y="0" transform="matrix(0.866 -0.5 0.866 0.5 672.0 1036.0)" font-size="11" fill="#6a6a6a" text-anchor="middle" dominant-baseline="central" font-family="Liberation Sans">600</text><text x="0" y="0" transform="matrix(0.866 0.5 -0.866 0.5 1225.4 832.0)" font-size="11" fill="#6a6a6a" text-anchor="middle" dominant-baseline="central" font-family="Liberation Sans">400</text><text x="0" y="0" transform="matrix(0.866 0.5 -0.866 0.5 1195.9 848.9)" font-size="11" fill="#6a6a6a" text-anchor="middle" dominant-baseline="central" font-family="Liberation Sans">300</text><text x="0" y="0" transform="matrix(0.866 0.5 -0.866 0.5 1166.4 865.8)" font-size="11" fill="#6a6a6a" text-anchor="middle" dominant-baseline="central" font-family="Liberation Sans">200</text><text x="0" y="0" transform="matrix(0.866 0.5 -0.866 0.5 1137.4 882.6)" font-size="11" fill="#6a6a6a" text-anchor="middle" dominant-baseline="central" font-family="Liberation Sans">100</text><text x="0" y="0" transform="matrix(0.866 0.5 -0.866 0.5 1101.1 893.9)" font-size="11" fill="#6a6a6a" text-anchor="middle" dominant-baseline="central" font-family="Liberation Sans">0</text><text x="0" y="0" transform="matrix(0.866 0.5 -0.866 0.5 1079.8 916.4)" font-size="11" fill="#6a6a6a" text-anchor="middle" dominant-baseline="central" font-family="Liberation Sans">100</text><text x="0" y="0" transform="matrix(0.866 0.5 -0.866 0.5 1050.2 933.3)" font-size="11" fill="#6a6a6a" text-anchor="middle" dominant-baseline="central" font-family="Liberation Sans">200</text><text x="0" y="0" transform="matrix(0.866 0.5 -0.866 0.5 1021.0 949.6)" font-size="11" fill="#6a6a6a" text-anchor="middle" dominant-baseline="central" font-family="Liberation Sans">300</text><text x="0" y="0" transform="matrix(0.866 0.5 -0.866 0.5 993.4 967.0)" font-size="11" fill="#6a6a6a" text-anchor="middle" dominant-baseline="central" font-family="Liberation Sans">400</text><text x="0" y="0" transform="matrix(0.866 0.5 -0.866 0.5 963.9 983.0)" font-size="11" fill="#6a6a6a" text-anchor="middle" dominant-baseline="central" font-family="Liberation Sans">500</text><text x="0" y="0" transform="matrix(0.866 0.5 -0.866 0.5 934.9 1000.0)" font-size="11" fill="#6a6a6a" text-anchor="middle" dominant-baseline="central" font-family="Liberation Sans">600</text><text x="0" y="0" transform="matrix(0.866 0.5 -0.866 0.5 906.0 1017.0)" font-size="11" fill="#6a6a6a" text-anchor="middle" dominant-baseline="central" font-family="Liberation Sans">700</text><text x="0" y="0" transform="matrix(0.866 0.5 -0.866 0.5 877.0 1034.0)" font-size="11" fill="#6a6a6a" text-anchor="middle" dominant-baseline="central" font-family="Liberation Sans">800</text></svg>
<div class="a" style="left:0px;top:0px;width:1600px;height:32px;background:#000;"></div>
<div class="a" style="left:0px;top:32px;width:1600px;height:30px;background:#d7d7d7;"></div>
<div class="a" style="left:783px;top:36px;width:567px;height:26px;background:#f3f3f3;"></div>
<div class="a" style="left:0px;top:62px;width:1600px;height:79px;background:#f3f3f3;"></div>
<svg class="a" style="left:8px;top:41px;" width="12" height="12" viewBox="0 0 12 12"><rect x="0" y="0" width="3" height="3" fill="#6a6a6a"/><rect x="0" y="4.5" width="3" height="3" fill="#6a6a6a"/><rect x="0" y="9" width="3" height="3" fill="#6a6a6a"/><rect x="4.5" y="0" width="3" height="3" fill="#6a6a6a"/><rect x="4.5" y="4.5" width="3" height="3" fill="#6a6a6a"/><rect x="4.5" y="9" width="3" height="3" fill="#6a6a6a"/><rect x="9" y="0" width="3" height="3" fill="#6a6a6a"/><rect x="9" y="4.5" width="3" height="3" fill="#6a6a6a"/><rect x="9" y="9" width="3" height="3" fill="#6a6a6a"/></svg>
<svg class="a" style="left:38px;top:40px;" width="26" height="14" viewBox="0 0 26 14"><path d="M1 0h7l4 4v10H1z" fill="#707070"/><path d="M18 5h6l-3 3z" fill="#777"/></svg>
<svg class="a" style="left:77px;top:41px;" width="12" height="12" viewBox="0 0 12 12"><rect x="0" y="0" width="12" height="12" fill="#6e6e6e"/><rect x="2.5" y="1" width="7" height="4" fill="#d7d7d7"/><rect x="2" y="7" width="8" height="3" fill="#d7d7d7"/></svg>
<svg class="a" style="left:106px;top:40px;" width="30" height="15" viewBox="0 0 30 15"><path d="M4 6 Q10 2 13 8 V14" stroke="#7a7a7a" stroke-width="2.2" fill="none"/><path d="M0 6l5-4v8z" fill="#7a7a7a"/><path d="M20 5h6l-3 3z" fill="#777"/></svg>
<svg class="a" style="left:141px;top:40px;" width="30" height="15" viewBox="0 0 30 15"><path d="M11 6 Q5 2 2 8 V14" stroke="#b9b9b9" stroke-width="2" fill="none"/><path d="M14 6l-5-4v8z" fill="#b9b9b9"/><path d="M20 5h6l-3 3z" fill="#b5b5b5"/></svg>
<svg class="a" style="left:183px;top:40px;" width="16" height="16" viewBox="0 0 16 16"><path d="M8 1 L16 8 H14 V15 H2 V8 H0 Z" fill="#6e6e6e"/><rect x="6" y="10" width="4" height="5" fill="#d7d7d7"/></svg>
<svg class="a" style="left:460px;top:42px;" width="15" height="15" viewBox="0 0 15 15"><path d="M7.5 0.5 L14.5 4 L14.5 11 L7.5 14.5 L0.5 11 L0.5 4 Z" fill="#f4782a"/><path d="M0.5 4 L7.5 7.5 L14.5 4 L7.5 0.5 Z" fill="#ffbb80"/><path d="M7.5 7.5 L7.5 14.5 L14.5 11 L14.5 4 Z" fill="#e85a12"/></svg>
<div class="a t" style="left:479px;top:42.8px;font-size:12px;line-height:14.4px;color:#2e2e2e;font-weight:normal;">waves*</div>
<div class="a t" style="left:763px;top:40.8px;font-size:12px;line-height:14.4px;color:#666;font-weight:normal;">&#x2715;</div>
<svg class="a" style="left:1031px;top:42px;" width="15" height="15" viewBox="0 0 15 15"><path d="M7.5 0.5 L14.5 4 L14.5 11 L7.5 14.5 L0.5 11 L0.5 4 Z" fill="#f4782a"/><path d="M0.5 4 L7.5 7.5 L14.5 4 L7.5 0.5 Z" fill="#ffbb80"/><path d="M7.5 7.5 L7.5 14.5 L14.5 11 L14.5 4 Z" fill="#e85a12"/></svg>
<div class="a t" style="left:1049px;top:42.8px;font-size:12px;line-height:14.4px;color:#2e2e2e;font-weight:normal;">Molds*</div>
<div class="a t" style="left:1333px;top:40.8px;font-size:12px;line-height:14.4px;color:#555;font-weight:normal;">&#x2715;</div>
<svg class="a" style="left:1367px;top:41px;" width="14" height="14" viewBox="0 0 14 14"><rect x="6" y="1" width="2.4" height="12" fill="#6a6a6a"/><rect x="1" y="6" width="12" height="2.4" fill="#6a6a6a"/></svg>
<svg class="a" style="left:1406px;top:40px;" width="15" height="15" viewBox="0 0 15 15"><circle cx="7.5" cy="7.5" r="7" fill="#1d7fd6"/><path d="M7.5 3 L11 7 H9 V11.5 H6 V7 H4 Z" fill="#fff"/></svg>
<svg class="a" style="left:1437px;top:40px;" width="15" height="15" viewBox="0 0 15 15"><circle cx="7.5" cy="7.5" r="6" fill="none" stroke="#7a7a7a" stroke-width="2"/><path d="M7.5 4 V8 L10 9.5" stroke="#7a7a7a" stroke-width="1.6" fill="none"/></svg>
<svg class="a" style="left:1468px;top:40px;" width="15" height="15" viewBox="0 0 15 15"><circle cx="7.5" cy="7.5" r="7" fill="#858585"/><circle cx="7.5" cy="7.5" r="3.5" fill="#b0b0b0"/><rect x="5" y="6.5" width="5" height="2" fill="#6a6a6a"/></svg>
<svg class="a" style="left:1499px;top:40px;" width="14" height="15" viewBox="0 0 14 15"><path d="M7 1 C3 1 3 5 3 8 L1 11 H13 L11 8 C11 5 11 1 7 1Z" fill="#7a7a7a"/><circle cx="7" cy="13" r="1.6" fill="#7a7a7a"/></svg>
<svg class="a" style="left:1530px;top:40px;" width="15" height="15" viewBox="0 0 15 15"><circle cx="7.5" cy="7.5" r="7" fill="#7e7e7e"/><text x="7.5" y="11.5" font-size="11" font-weight="bold" text-anchor="middle" fill="#d7d7d7" font-family="Liberation Sans">?</text></svg>
<svg class="a" style="left:1564px;top:35px;" width="24" height="24" viewBox="0 0 24 24"><circle cx="12" cy="12" r="11.5" fill="#fafafa"/><text x="12" y="16.5" font-size="12.5" text-anchor="middle" fill="#333" font-family="Liberation Sans">SK</text></svg>
<div class="a" style="left:11px;top:72px;width:104px;height:56px;border:1px solid #cfcfcf;border-radius:4px;background:#f5f5f5"></div>
<div class="a t" style="left:18px;top:93.8px;font-size:10.4px;line-height:12.5px;color:#2e2e2e;font-weight:bold;">MANUFACTURE</div>
<svg class="a" style="left:103px;top:97px;" width="6" height="4" viewBox="0 0 6 4"><path d="M0 0h6l-3 3.5z" fill="#777"/></svg>
<div class="a t" style="left:160.5px;top:67.0px;font-size:10px;line-height:12.0px;color:#333;font-weight:normal;transform:translateX(-50%);">MILLING</div>
<div class="a t" style="left:250px;top:67.0px;font-size:10px;line-height:12.0px;color:#333;font-weight:normal;transform:translateX(-50%);">TURNING</div>
<div class="a t" style="left:342.5px;top:67.0px;font-size:10px;line-height:12.0px;color:#333;font-weight:normal;transform:translateX(-50%);">ADDITIVE</div>
<div class="a t" style="left:445px;top:67.0px;font-size:10px;line-height:12.0px;color:#333;font-weight:normal;transform:translateX(-50%);">INSPECTION</div>
<div class="a t" style="left:559px;top:67.0px;font-size:10px;line-height:12.0px;color:#333;font-weight:normal;transform:translateX(-50%);">FABRICATION</div>
<div class="a t" style="left:663.5px;top:67.0px;font-size:10px;line-height:12.0px;color:#333;font-weight:normal;transform:translateX(-50%);">UTILITIES</div>
<div class="a" style="left:130px;top:81px;width:68px;height:3px;background:#2a2a2a;"></div>
<div class="a" style="left:207px;top:89px;width:1px;height:44px;background:#dcdcdc;"></div>
<div class="a" style="left:339px;top:89px;width:1px;height:44px;background:#dcdcdc;"></div>
<div class="a" style="left:550px;top:89px;width:1px;height:44px;background:#dcdcdc;"></div>
<div class="a" style="left:633px;top:89px;width:1px;height:44px;background:#dcdcdc;"></div>
<div class="a" style="left:764px;top:89px;width:1px;height:44px;background:#dcdcdc;"></div>
<div class="a" style="left:936px;top:89px;width:1px;height:44px;background:#dcdcdc;"></div>
<div class="a" style="left:1014px;top:89px;width:1px;height:44px;background:#dcdcdc;"></div>
<div class="a t" style="left:156px;top:122.5px;font-size:10px;line-height:12.0px;color:#333;font-weight:normal;transform:translateX(-50%);">SETUP</div>
<svg class="a" style="left:177px;top:127px;" width="6" height="4" viewBox="0 0 6 4"><path d="M0 0h5l-2.5 3z" fill="#777"/></svg>
<div class="a t" style="left:268px;top:122.5px;font-size:10px;line-height:12.0px;color:#333;font-weight:normal;transform:translateX(-50%);">2D</div>
<svg class="a" style="left:280px;top:127px;" width="6" height="4" viewBox="0 0 6 4"><path d="M0 0h5l-2.5 3z" fill="#777"/></svg>
<div class="a t" style="left:440px;top:122.5px;font-size:10px;line-height:12.0px;color:#333;font-weight:normal;transform:translateX(-50%);">3D</div>
<svg class="a" style="left:452px;top:127px;" width="6" height="4" viewBox="0 0 6 4"><path d="M0 0h5l-2.5 3z" fill="#777"/></svg>
<div class="a t" style="left:590px;top:122.5px;font-size:10px;line-height:12.0px;color:#333;font-weight:normal;transform:translateX(-50%);">DRILLING</div>
<svg class="a" style="left:617px;top:127px;" width="6" height="4" viewBox="0 0 6 4"><path d="M0 0h5l-2.5 3z" fill="#777"/></svg>
<div class="a t" style="left:693px;top:122.5px;font-size:10px;line-height:12.0px;color:#333;font-weight:normal;transform:translateX(-50%);">ACTIONS</div>
<svg class="a" style="left:720px;top:127px;" width="6" height="4" viewBox="0 0 6 4"><path d="M0 0h5l-2.5 3z" fill="#777"/></svg>
<div class="a t" style="left:843px;top:122.5px;font-size:10px;line-height:12.0px;color:#333;font-weight:normal;transform:translateX(-50%);">MANAGE</div>
<svg class="a" style="left:870px;top:127px;" width="6" height="4" viewBox="0 0 6 4"><path d="M0 0h5l-2.5 3z" fill="#777"/></svg>
<div class="a t" style="left:972px;top:122.5px;font-size:10px;line-height:12.0px;color:#333;font-weight:normal;transform:translateX(-50%);">INSPECT</div>
<svg class="a" style="left:999px;top:127px;" width="6" height="4" viewBox="0 0 6 4"><path d="M0 0h5l-2.5 3z" fill="#777"/></svg>
<div class="a t" style="left:1046px;top:122.5px;font-size:10px;line-height:12.0px;color:#333;font-weight:normal;transform:translateX(-50%);">SELECT</div>
<svg class="a" style="left:1070px;top:127px;" width="6" height="4" viewBox="0 0 6 4"><path d="M0 0h5l-2.5 3z" fill="#777"/></svg>
<svg class="a" style="left:127px;top:87px;" width="33" height="30" viewBox="0 0 33 30"><path d="M1.5 1.5h8l2.5 2.5h15v12M1.5 1.5v22h12" fill="none" stroke="#777" stroke-width="1.3"/><rect x="1.5" y="1.5" width="9" height="4" fill="#aaa"/><path d="M16 17 L23 13 L31 17 L31 24 L23 28.5 L16 24Z" fill="#2f8fd0"/><path d="M16 17 L23 13 L31 17 L23 21Z" fill="#d6eefc"/></svg>
<svg class="a" style="left:169px;top:86px;" width="28" height="31" viewBox="0 0 28 31"><rect x="1" y="1" width="25" height="29" fill="#fafafa" stroke="#6e6e6e" stroke-width="1.3"/><text x="13" y="14" font-size="11" font-weight="bold" text-anchor="middle" fill="#2f8fd0" font-family="Liberation Sans">G</text><rect x="4.5" y="17.5" width="2.5" height="2.5" fill="#444"/><rect x="4.5" y="22.5" width="2.5" height="2.5" fill="#444"/><rect x="9" y="18.3" width="13" height="1" fill="#555"/><rect x="9" y="23.3" width="13" height="1" fill="#555"/></svg>
<svg class="a" style="left:217px;top:86px;" width="34" height="31" viewBox="0 0 34 31"><path d="M2 17 L20 6 L32 13 L32 17 L14 28 L2 21Z" fill="#9a9a9a"/><path d="M2 15 L20 4 L32 11 L14 22Z" fill="#d8d8d8"/><path d="M3 15 L21 4 M6 18 L26 6 M10 21 L29 9 M14 23 L32 12" stroke="#2088d2" stroke-width="3.2" fill="none"/><path d="M3 15 L21 4 M6 18 L26 6 M10 21 L29 9" stroke="#5cb8ee" stroke-width="1.2" fill="none"/></svg>
<svg class="a" style="left:258px;top:86px;" width="33" height="31" viewBox="0 0 33 31"><path d="M16 2 L31 10 L31 20 L16 29 L1 20 L1 10Z" fill="#e7e7e7" stroke="#6e6e6e" stroke-width="1.2"/><path d="M5 16 L16 9 L27 16 L16 23Z" fill="#2e8fd6"/><path d="M9 17 Q14 12 16 15 Q19 19 23 15" stroke="#1a5f99" stroke-width="1.8" fill="none"/><path d="M5 16 L16 22 L27 16 L27 18 L16 25 L5 18Z" fill="#8a8a8a"/></svg>
<svg class="a" style="left:298px;top:86px;" width="34" height="31" viewBox="0 0 34 31"><path d="M17 5 L31 14 L17 23 L3 14Z" fill="#4aa8e8"/><path d="M3 14 L17 23 L31 14 L31 16 L17 26 L3 16Z" fill="#2173b5"/><path d="M17 3 L26 9 L26 14 L17 19 L8 14 L8 9Z" fill="#f4f9fc" stroke="#777" stroke-width="0.8"/><path d="M8 14 L17 19 L26 14 L26 16 L17 21 L8 16Z" fill="#bfbfbf"/></svg>
<svg class="a" style="left:350px;top:86px;" width="30" height="31" viewBox="0 0 30 31"><path d="M2 8 L8 2 L28 2 L28 22 L22 29 L2 29Z" fill="#dcdcdc" stroke="#666" stroke-width="1.2"/><path d="M2 8 L22 8 L28 2 M22 8 V29" stroke="#666" stroke-width="1" fill="none"/><rect x="4" y="9" width="17" height="14" fill="#6cc0f0"/><path d="M4 12 Q12 9 21 12 M4 16 Q12 13 21 16 M5 20 Q12 17 21 20 M22 11 L27 8 M22 16 L27 13" stroke="#1d6fb5" stroke-width="2" fill="none"/></svg>
<svg class="a" style="left:389px;top:86px;" width="33" height="31" viewBox="0 0 33 31"><path d="M1 22 L13 15 L32 15 L32 22 L20 29 L1 29Z" fill="#bdbdbd" stroke="#777" stroke-width="1"/><path d="M1 22 L13 15 L32 15 L20 22Z" fill="#e9e9e9"/><path d="M11 14 L20 8 L32 8 L32 15 L13 15Z" fill="#c8c8c8" stroke="#777" stroke-width="1"/><path d="M20 8 L29 2 L32 2 L32 8Z" fill="#ddd"/><path d="M3 22 H20 M13 14 H30 M20 7 H31" stroke="#1d6fb5" stroke-width="2.5"/><path d="M3 24 H20 M13 16 H30 M20 9 H31" stroke="#7cc8f2" stroke-width="1.2"/></svg>
<svg class="a" style="left:430px;top:86px;" width="32" height="31" viewBox="0 0 32 31"><path d="M2 8 L8 2 L30 2 L30 22 L24 29 L2 29Z" fill="#d5d5d5" stroke="#666" stroke-width="1.2"/><path d="M24 8 V29 M2 8 H24 L30 2" stroke="#666" stroke-width="1" fill="none"/><path d="M3 9 H23 V28 H3Z" fill="#4aa6e6"/><path d="M24 8 L29 3 L29 8 L24 14Z" fill="#4aa6e6"/><path d="M4 27 C6 5 10 5 12 27 C14 5 18 5 20 27 C21 10 23 5 28 4" stroke="#17507f" stroke-width="1.4" fill="none"/></svg>
<svg class="a" style="left:470px;top:86px;" width="34" height="31" viewBox="0 0 34 31"><path d="M2 19 C2 8 10 4 17 4 C24 4 32 8 32 19 L32 22 Q17 30 2 22Z" fill="#3b9ee0"/><path d="M2 19 Q17 27 32 19 L32 22 Q17 30 2 22Z" fill="#f4f4f4" stroke="#aaa" stroke-width="0.6"/><path d="M7 16 Q17 5 27 16 Q17 21 7 16Z" fill="none" stroke="#1d73b8" stroke-width="1.6"/><path d="M13 13 L17 9 L21 13Z" fill="none" stroke="#1d73b8" stroke-width="1.4"/></svg>
<svg class="a" style="left:510px;top:86px;" width="33" height="31" viewBox="0 0 33 31"><path d="M1 23 L32 19 L32 26 L20 30 L1 30Z" fill="#c9c9c9" stroke="#888" stroke-width="0.8"/><ellipse cx="16" cy="21" rx="15" ry="4" fill="#3c9ee2"/><ellipse cx="17" cy="16" rx="11" ry="3.2" fill="#3c9ee2" stroke="#1c6cb0" stroke-width="1"/><ellipse cx="17" cy="11" rx="7" ry="2.6" fill="#4aa8e8" stroke="#1c6cb0" stroke-width="1"/><ellipse cx="17" cy="6.5" rx="4" ry="2" fill="#5ab2ea" stroke="#1c6cb0" stroke-width="1"/><ellipse cx="17" cy="3" rx="2" ry="1.4" fill="#5ab2ea"/></svg>
<svg class="a" style="left:575px;top:86px;" width="34" height="31" viewBox="0 0 34 31"><path d="M1 18 L14 11 L33 11 L20 18Z" fill="#e8e8e8" stroke="#666" stroke-width="1.1"/><path d="M1 18 V23 L20 23 L33 16 V11 M20 18 V23" fill="#cfcfcf" stroke="#666" stroke-width="1.1"/><rect x="13" y="1" width="8" height="28" rx="2" fill="#bdbdbd" stroke="#666" stroke-width="1.1"/><path d="M13 6 L21 3 M13 11 L21 8 M13 16 L21 13 M13 21 L21 18 M13 26 L21 23" stroke="#666" stroke-width="1"/></svg>
<svg class="a" style="left:645px;top:86px;" width="32" height="31" viewBox="0 0 32 31"><path d="M12 6 L2 16 L12 26" fill="none" stroke="#8a8a8a" stroke-width="3.2"/><path d="M12 6 L2 16 L12 26" fill="none" stroke="#cfe8f8" stroke-width="1.4"/><path d="M16 10 L24 16 L18 22" fill="none" stroke="#8a8a8a" stroke-width="2.6"/><path d="M16 10 L24 16 L18 22" fill="none" stroke="#cfe8f8" stroke-width="1"/><rect x="12" y="1" width="6" height="4" fill="#aaa" stroke="#666" stroke-width="0.8"/><rect x="13" y="5" width="4" height="14" fill="#d6d6d6" stroke="#666" stroke-width="0.8"/><path d="M13 9 L17 7 M13 12 L17 10 M13 15 L17 13" stroke="#777" stroke-width="0.8"/><rect x="17" y="19" width="11" height="10" fill="#e4e4e4" stroke="#666" stroke-width="0.9"/><rect x="19" y="21" width="7" height="4" fill="#fff" stroke="#777" stroke-width="0.6"/><rect x="16" y="27" width="13" height="3" fill="#1f4f80"/></svg>
<svg class="a" style="left:686px;top:86px;" width="27" height="31" viewBox="0 0 27 31"><rect x="1" y="1" width="25" height="29" fill="#f7f7f7" stroke="#555" stroke-width="1.3"/><text x="13.5" y="13.5" font-size="10" font-weight="bold" text-anchor="middle" fill="#2b7fcb" font-family="Liberation Mono">G1</text><text x="13.5" y="25" font-size="10" font-weight="bold" text-anchor="middle" fill="#2b7fcb" font-family="Liberation Mono">G2</text></svg>
<svg class="a" style="left:727px;top:86px;" width="26" height="31" viewBox="0 0 26 31"><rect x="1" y="1" width="23" height="28" fill="#fafafa" stroke="#555" stroke-width="1.3"/><rect x="7" y="5" width="11" height="5" fill="none" stroke="#555" stroke-width="1"/><path d="M5 14 H20 M5 18 H20 M5 22 H20" stroke="#555" stroke-width="1.1"/></svg>
<svg class="a" style="left:774px;top:86px;" width="34" height="31" viewBox="0 0 34 31"><rect x="2" y="2" width="8" height="4" fill="#999"/><rect x="4" y="6" width="3" height="14" fill="#aaa"/><circle cx="5.5" cy="22" r="2" fill="#d33"/><rect x="10" y="3" width="12" height="5" fill="#bbb"/><rect x="13" y="8" width="6" height="14" fill="#c9c9c9"/><rect x="13" y="16" width="6" height="6" fill="#f1a02a"/><rect x="22" y="6" width="10" height="6" fill="#aaa"/><rect x="24" y="12" width="6" height="18" fill="#b5b5b5"/><path d="M24 15 L30 13 M24 19 L30 17 M24 23 L30 21" stroke="#666" stroke-width="1"/></svg>
<svg class="a" style="left:815px;top:86px;" width="33" height="31" viewBox="0 0 33 31"><rect x="1" y="7" width="31" height="20" rx="4" fill="#9ec8e6" stroke="#1f5f90" stroke-width="1.2"/><rect x="5" y="10" width="18" height="12" fill="#d9ecf8" stroke="#456" stroke-width="0.8"/><rect x="10" y="13" width="8" height="6" fill="#6aaee0"/><rect x="2" y="24" width="30" height="4" fill="#1f5f90"/><circle cx="27" cy="15" r="1.5" fill="#456"/></svg>
<svg class="a" style="left:855px;top:86px;" width="33" height="31" viewBox="0 0 33 31"><rect x="1" y="1" width="17" height="20" fill="#fff" stroke="#666" stroke-width="1"/><rect x="5" y="5" width="17" height="20" fill="#fff" stroke="#666" stroke-width="1"/><path d="M9 9 H24 L30 15 V30 H9Z" fill="#fff" stroke="#666" stroke-width="1.1"/><text x="19.5" y="26" font-size="12" font-weight="bold" text-anchor="middle" fill="#2b7fcb" font-family="Liberation Sans">G</text></svg>
<svg class="a" style="left:895px;top:86px;" width="33" height="31" viewBox="0 0 33 31"><rect x="1" y="1" width="17" height="20" fill="#fff" stroke="#666" stroke-width="1"/><rect x="5" y="5" width="17" height="20" fill="#fff" stroke="#666" stroke-width="1"/><path d="M9 9 H24 L30 15 V30 H9Z" fill="#fff" stroke="#666" stroke-width="1.1"/><path d="M14 24 L22 15 Q25 12 26 16 L18 26 Q15 28 15 25 L22 18" stroke="#2b7fcb" stroke-width="1.8" fill="none"/></svg>
<svg class="a" style="left:960px;top:93px;" width="30" height="18" viewBox="0 0 30 18"><path d="M2 2 V8 M28 2 V8 M2 5 H28" stroke="#444" stroke-width="1.2"/><path d="M2 5 L6 3 V7Z M28 5 L24 3 V7Z" fill="#444"/><rect x="1" y="11" width="28" height="6" fill="#f0a020"/><path d="M4 11 V14 M7 11 V13 M10 11 V14 M13 11 V13 M16 11 V14 M19 11 V13 M22 11 V14 M25 11 V13" stroke="#7a5200" stroke-width="0.8"/></svg>
<svg class="a" style="left:1035px;top:86px;" width="34" height="31" viewBox="0 0 34 31"><rect x="1.5" y="1.5" width="26" height="20" fill="none" stroke="#777" stroke-width="1.2" stroke-dasharray="3 2"/><path d="M21 14 L21 30 L25 26 L28 31 L30 30 L27 25 L32 25Z" fill="#fff" stroke="#222" stroke-width="1.1"/></svg>
<div class="a" style="left:4px;top:144px;width:281px;height:24px;background:#efefef;"></div>
<svg class="a" style="left:10px;top:152px;" width="10" height="9" viewBox="0 0 10 9"><path d="M4.5 0.5 L0.5 4.5 L4.5 8.5Z M9 0.5 L5 4.5 L9 8.5Z" fill="#9a9a9a"/></svg>
<div class="a t" style="left:30px;top:151.4px;font-size:10.2px;line-height:12.2px;color:#4a4a4a;font-weight:normal;">BROWSER</div>
<div class="a" style="left:263px;top:155px;width:10px;height:1.6px;background:#666;"></div>
<div class="a" style="left:8px;top:480px;width:5px;height:505px;background:#ececec;"></div>
<div class="a" style="left:72px;top:172.3px;width:129px;height:20px;background:#f4f4f4;border-radius:2px"></div>
<svg class="a" style="left:73px;top:174.3px;" width="16" height="16" viewBox="0 0 16 16"><circle cx="8" cy="8" r="7" fill="#f7b23a" stroke="#e8950f" stroke-width="1.1"/><path d="M11.5 5.2 A4.3 4.3 0 1 0 11.8 10.2" fill="none" stroke="#fff3cf" stroke-width="1.7"/><path d="M6.5 8 H11" stroke="#fff3cf" stroke-width="1.7"/></svg>
<svg class="a" style="left:98px;top:174.3px;" width="14" height="16" viewBox="0 0 14 16"><rect x="0.5" y="0.5" width="13" height="15" fill="#fbfbfb" stroke="#8a8a8a" stroke-width="1"/><text x="7" y="7" font-size="6" font-weight="bold" text-anchor="middle" fill="#3b8fd6" font-family="Liberation Sans">G</text><path d="M2.5 10 H11.5 M2.5 12.5 H11.5" stroke="#9a9a9a" stroke-width="0.8"/></svg>
<div class="a t" style="left:125.5px;top:175.9px;font-size:10.7px;line-height:12.8px;color:#2a2a2a;font-weight:normal;">NCProgram1</div>
<div class="a" style="left:72px;top:194.8px;width:129px;height:20px;background:#f4f4f4;border-radius:2px"></div>
<svg class="a" style="left:73px;top:196.76000000000002px;" width="16" height="16" viewBox="0 0 16 16"><circle cx="8" cy="8" r="7" fill="#f7b23a" stroke="#e8950f" stroke-width="1.1"/><path d="M11.5 5.2 A4.3 4.3 0 1 0 11.8 10.2" fill="none" stroke="#fff3cf" stroke-width="1.7"/><path d="M6.5 8 H11" stroke="#fff3cf" stroke-width="1.7"/></svg>
<svg class="a" style="left:98px;top:196.76000000000002px;" width="14" height="16" viewBox="0 0 14 16"><rect x="0.5" y="0.5" width="13" height="15" fill="#fbfbfb" stroke="#8a8a8a" stroke-width="1"/><text x="7" y="7" font-size="6" font-weight="bold" text-anchor="middle" fill="#3b8fd6" font-family="Liberation Sans">G</text><path d="M2.5 10 H11.5 M2.5 12.5 H11.5" stroke="#9a9a9a" stroke-width="0.8"/></svg>
<div class="a t" style="left:125.5px;top:198.3px;font-size:10.7px;line-height:12.8px;color:#2a2a2a;font-weight:normal;">NCProgram2</div>
<div class="a" style="left:72px;top:217.2px;width:129px;height:20px;background:#f4f4f4;border-radius:2px"></div>
<svg class="a" style="left:73px;top:219.22000000000003px;" width="16" height="16" viewBox="0 0 16 16"><circle cx="8" cy="8" r="7" fill="#f7b23a" stroke="#e8950f" stroke-width="1.1"/><path d="M11.5 5.2 A4.3 4.3 0 1 0 11.8 10.2" fill="none" stroke="#fff3cf" stroke-width="1.7"/><path d="M6.5 8 H11" stroke="#fff3cf" stroke-width="1.7"/></svg>
<svg class="a" style="left:98px;top:219.22000000000003px;" width="14" height="16" viewBox="0 0 14 16"><rect x="0.5" y="0.5" width="13" height="15" fill="#fbfbfb" stroke="#8a8a8a" stroke-width="1"/><text x="7" y="7" font-size="6" font-weight="bold" text-anchor="middle" fill="#3b8fd6" font-family="Liberation Sans">G</text><path d="M2.5 10 H11.5 M2.5 12.5 H11.5" stroke="#9a9a9a" stroke-width="0.8"/></svg>
<div class="a t" style="left:125.5px;top:220.8px;font-size:10.7px;line-height:12.8px;color:#2a2a2a;font-weight:normal;">NCProgram3</div>
<div class="a" style="left:72px;top:239.7px;width:129px;height:20px;background:#f4f4f4;border-radius:2px"></div>
<svg class="a" style="left:73px;top:241.68px;" width="16" height="16" viewBox="0 0 16 16"><circle cx="8" cy="8" r="7" fill="#f7b23a" stroke="#e8950f" stroke-width="1.1"/><path d="M11.5 5.2 A4.3 4.3 0 1 0 11.8 10.2" fill="none" stroke="#fff3cf" stroke-width="1.7"/><path d="M6.5 8 H11" stroke="#fff3cf" stroke-width="1.7"/></svg>
<svg class="a" style="left:98px;top:241.68px;" width="14" height="16" viewBox="0 0 14 16"><rect x="0.5" y="0.5" width="13" height="15" fill="#fbfbfb" stroke="#8a8a8a" stroke-width="1"/><text x="7" y="7" font-size="6" font-weight="bold" text-anchor="middle" fill="#3b8fd6" font-family="Liberation Sans">G</text><path d="M2.5 10 H11.5 M2.5 12.5 H11.5" stroke="#9a9a9a" stroke-width="0.8"/></svg>
<div class="a t" style="left:125.5px;top:243.3px;font-size:10.7px;line-height:12.8px;color:#2a2a2a;font-weight:normal;">NCProgram4</div>
<div class="a" style="left:72px;top:262.1px;width:129px;height:20px;background:#f4f4f4;border-radius:2px"></div>
<svg class="a" style="left:73px;top:264.14px;" width="16" height="16" viewBox="0 0 16 16"><path d="M8 0.5 L15.5 8 L8 15.5 L0.5 8Z" fill="#d1111a"/><rect x="7" y="3.5" width="2" height="6" fill="#fff"/><rect x="7" y="11" width="2" height="2" fill="#fff"/></svg>
<svg class="a" style="left:98px;top:264.14px;" width="14" height="16" viewBox="0 0 14 16"><rect x="0.5" y="0.5" width="13" height="15" fill="#fbfbfb" stroke="#8a8a8a" stroke-width="1"/><text x="7" y="7" font-size="6" font-weight="bold" text-anchor="middle" fill="#3b8fd6" font-family="Liberation Sans">G</text><path d="M2.5 10 H11.5 M2.5 12.5 H11.5" stroke="#9a9a9a" stroke-width="0.8"/></svg>
<div class="a t" style="left:125.5px;top:265.7px;font-size:10.7px;line-height:12.8px;color:#2a2a2a;font-weight:normal;">NCProgram7</div>
<div class="a" style="left:72px;top:284.6px;width:129px;height:20px;background:#f4f4f4;border-radius:2px"></div>
<svg class="a" style="left:73px;top:286.6px;" width="16" height="16" viewBox="0 0 16 16"><circle cx="8" cy="8" r="7" fill="#f7b23a" stroke="#e8950f" stroke-width="1.1"/><path d="M11.5 5.2 A4.3 4.3 0 1 0 11.8 10.2" fill="none" stroke="#fff3cf" stroke-width="1.7"/><path d="M6.5 8 H11" stroke="#fff3cf" stroke-width="1.7"/></svg>
<svg class="a" style="left:98px;top:286.6px;" width="14" height="16" viewBox="0 0 14 16"><rect x="0.5" y="0.5" width="13" height="15" fill="#fbfbfb" stroke="#8a8a8a" stroke-width="1"/><text x="7" y="7" font-size="6" font-weight="bold" text-anchor="middle" fill="#3b8fd6" font-family="Liberation Sans">G</text><path d="M2.5 10 H11.5 M2.5 12.5 H11.5" stroke="#9a9a9a" stroke-width="0.8"/></svg>
<div class="a t" style="left:125.5px;top:288.2px;font-size:10.7px;line-height:12.8px;color:#2a2a2a;font-weight:normal;">NCProgram9</div>
<div class="a" style="left:72px;top:307.1px;width:129px;height:20px;background:#f4f4f4;border-radius:2px"></div>
<svg class="a" style="left:73px;top:309.06px;" width="16" height="16" viewBox="0 0 16 16"><circle cx="8" cy="8" r="7" fill="#f7b23a" stroke="#e8950f" stroke-width="1.1"/><path d="M11.5 5.2 A4.3 4.3 0 1 0 11.8 10.2" fill="none" stroke="#fff3cf" stroke-width="1.7"/><path d="M6.5 8 H11" stroke="#fff3cf" stroke-width="1.7"/></svg>
<svg class="a" style="left:98px;top:309.06px;" width="14" height="16" viewBox="0 0 14 16"><rect x="0.5" y="0.5" width="13" height="15" fill="#fbfbfb" stroke="#8a8a8a" stroke-width="1"/><text x="7" y="7" font-size="6" font-weight="bold" text-anchor="middle" fill="#3b8fd6" font-family="Liberation Sans">G</text><path d="M2.5 10 H11.5 M2.5 12.5 H11.5" stroke="#9a9a9a" stroke-width="0.8"/></svg>
<div class="a t" style="left:125.5px;top:310.6px;font-size:10.7px;line-height:12.8px;color:#2a2a2a;font-weight:normal;">NCProgram10</div>
<div class="a" style="left:72px;top:329.5px;width:129px;height:20px;background:#f4f4f4;border-radius:2px"></div>
<svg class="a" style="left:73px;top:331.52px;" width="16" height="16" viewBox="0 0 16 16"><circle cx="8" cy="8" r="7" fill="#f7b23a" stroke="#e8950f" stroke-width="1.1"/><path d="M11.5 5.2 A4.3 4.3 0 1 0 11.8 10.2" fill="none" stroke="#fff3cf" stroke-width="1.7"/><path d="M6.5 8 H11" stroke="#fff3cf" stroke-width="1.7"/></svg>
<svg class="a" style="left:98px;top:331.52px;" width="14" height="16" viewBox="0 0 14 16"><rect x="0.5" y="0.5" width="13" height="15" fill="#fbfbfb" stroke="#8a8a8a" stroke-width="1"/><text x="7" y="7" font-size="6" font-weight="bold" text-anchor="middle" fill="#3b8fd6" font-family="Liberation Sans">G</text><path d="M2.5 10 H11.5 M2.5 12.5 H11.5" stroke="#9a9a9a" stroke-width="0.8"/></svg>
<div class="a t" style="left:125.5px;top:333.1px;font-size:10.7px;line-height:12.8px;color:#2a2a2a;font-weight:normal;">NCProgram11</div>
<div class="a" style="left:72px;top:352.0px;width:129px;height:20px;background:#f4f4f4;border-radius:2px"></div>
<svg class="a" style="left:73px;top:353.98px;" width="16" height="16" viewBox="0 0 16 16"><circle cx="8" cy="8" r="7" fill="#f7b23a" stroke="#e8950f" stroke-width="1.1"/><path d="M11.5 5.2 A4.3 4.3 0 1 0 11.8 10.2" fill="none" stroke="#fff3cf" stroke-width="1.7"/><path d="M6.5 8 H11" stroke="#fff3cf" stroke-width="1.7"/></svg>
<svg class="a" style="left:98px;top:353.98px;" width="14" height="16" viewBox="0 0 14 16"><rect x="0.5" y="0.5" width="13" height="15" fill="#fbfbfb" stroke="#8a8a8a" stroke-width="1"/><text x="7" y="7" font-size="6" font-weight="bold" text-anchor="middle" fill="#3b8fd6" font-family="Liberation Sans">G</text><path d="M2.5 10 H11.5 M2.5 12.5 H11.5" stroke="#9a9a9a" stroke-width="0.8"/></svg>
<div class="a t" style="left:125.5px;top:355.6px;font-size:10.7px;line-height:12.8px;color:#2a2a2a;font-weight:normal;">NCProgram12</div>
<div class="a" style="left:72px;top:374.4px;width:129px;height:20px;background:#f4f4f4;border-radius:2px"></div>
<svg class="a" style="left:73px;top:376.44000000000005px;" width="16" height="16" viewBox="0 0 16 16"><circle cx="8" cy="8" r="7" fill="#f7b23a" stroke="#e8950f" stroke-width="1.1"/><path d="M11.5 5.2 A4.3 4.3 0 1 0 11.8 10.2" fill="none" stroke="#fff3cf" stroke-width="1.7"/><path d="M6.5 8 H11" stroke="#fff3cf" stroke-width="1.7"/></svg>
<svg class="a" style="left:98px;top:376.44000000000005px;" width="14" height="16" viewBox="0 0 14 16"><rect x="0.5" y="0.5" width="13" height="15" fill="#fbfbfb" stroke="#8a8a8a" stroke-width="1"/><text x="7" y="7" font-size="6" font-weight="bold" text-anchor="middle" fill="#3b8fd6" font-family="Liberation Sans">G</text><path d="M2.5 10 H11.5 M2.5 12.5 H11.5" stroke="#9a9a9a" stroke-width="0.8"/></svg>
<div class="a t" style="left:125.5px;top:378.0px;font-size:10.7px;line-height:12.8px;color:#2a2a2a;font-weight:normal;">NCProgram13</div>
<div class="a" style="left:72px;top:396.9px;width:129px;height:20px;background:#f4f4f4;border-radius:2px"></div>
<svg class="a" style="left:73px;top:398.90000000000003px;" width="16" height="16" viewBox="0 0 16 16"><circle cx="8" cy="8" r="7" fill="#f7b23a" stroke="#e8950f" stroke-width="1.1"/><path d="M11.5 5.2 A4.3 4.3 0 1 0 11.8 10.2" fill="none" stroke="#fff3cf" stroke-width="1.7"/><path d="M6.5 8 H11" stroke="#fff3cf" stroke-width="1.7"/></svg>
<svg class="a" style="left:98px;top:398.90000000000003px;" width="14" height="16" viewBox="0 0 14 16"><rect x="0.5" y="0.5" width="13" height="15" fill="#fbfbfb" stroke="#8a8a8a" stroke-width="1"/><text x="7" y="7" font-size="6" font-weight="bold" text-anchor="middle" fill="#3b8fd6" font-family="Liberation Sans">G</text><path d="M2.5 10 H11.5 M2.5 12.5 H11.5" stroke="#9a9a9a" stroke-width="0.8"/></svg>
<div class="a t" style="left:125.5px;top:400.5px;font-size:10.7px;line-height:12.8px;color:#2a2a2a;font-weight:normal;">NCProgram14</div>
<div class="a" style="left:72px;top:419.4px;width:129px;height:20px;background:#f4f4f4;border-radius:2px"></div>
<svg class="a" style="left:73px;top:421.36px;" width="16" height="16" viewBox="0 0 16 16"><circle cx="8" cy="8" r="7" fill="#f7b23a" stroke="#e8950f" stroke-width="1.1"/><path d="M11.5 5.2 A4.3 4.3 0 1 0 11.8 10.2" fill="none" stroke="#fff3cf" stroke-width="1.7"/><path d="M6.5 8 H11" stroke="#fff3cf" stroke-width="1.7"/></svg>
<svg class="a" style="left:98px;top:421.36px;" width="14" height="16" viewBox="0 0 14 16"><rect x="0.5" y="0.5" width="13" height="15" fill="#fbfbfb" stroke="#8a8a8a" stroke-width="1"/><text x="7" y="7" font-size="6" font-weight="bold" text-anchor="middle" fill="#3b8fd6" font-family="Liberation Sans">G</text><path d="M2.5 10 H11.5 M2.5 12.5 H11.5" stroke="#9a9a9a" stroke-width="0.8"/></svg>
<div class="a t" style="left:125.5px;top:422.9px;font-size:10.7px;line-height:12.8px;color:#2a2a2a;font-weight:normal;">NCProgram15</div>
<div class="a" style="left:72px;top:441.8px;width:129px;height:20px;background:#f4f4f4;border-radius:2px"></div>
<svg class="a" style="left:73px;top:443.82px;" width="16" height="16" viewBox="0 0 16 16"><circle cx="8" cy="8" r="7" fill="#f7b23a" stroke="#e8950f" stroke-width="1.1"/><path d="M11.5 5.2 A4.3 4.3 0 1 0 11.8 10.2" fill="none" stroke="#fff3cf" stroke-width="1.7"/><path d="M6.5 8 H11" stroke="#fff3cf" stroke-width="1.7"/></svg>
<svg class="a" style="left:98px;top:443.82px;" width="14" height="16" viewBox="0 0 14 16"><rect x="0.5" y="0.5" width="13" height="15" fill="#fbfbfb" stroke="#8a8a8a" stroke-width="1"/><text x="7" y="7" font-size="6" font-weight="bold" text-anchor="middle" fill="#3b8fd6" font-family="Liberation Sans">G</text><path d="M2.5 10 H11.5 M2.5 12.5 H11.5" stroke="#9a9a9a" stroke-width="0.8"/></svg>
<div class="a t" style="left:125.5px;top:445.4px;font-size:10.7px;line-height:12.8px;color:#2a2a2a;font-weight:normal;">NCProgram16</div>
<div class="a" style="left:72px;top:464.3px;width:129px;height:20px;background:#f4f4f4;border-radius:2px"></div>
<svg class="a" style="left:73px;top:466.28000000000003px;" width="16" height="16" viewBox="0 0 16 16"><circle cx="8" cy="8" r="7" fill="#f7b23a" stroke="#e8950f" stroke-width="1.1"/><path d="M11.5 5.2 A4.3 4.3 0 1 0 11.8 10.2" fill="none" stroke="#fff3cf" stroke-width="1.7"/><path d="M6.5 8 H11" stroke="#fff3cf" stroke-width="1.7"/></svg>
<svg class="a" style="left:98px;top:466.28000000000003px;" width="14" height="16" viewBox="0 0 14 16"><rect x="0.5" y="0.5" width="13" height="15" fill="#fbfbfb" stroke="#8a8a8a" stroke-width="1"/><text x="7" y="7" font-size="6" font-weight="bold" text-anchor="middle" fill="#3b8fd6" font-family="Liberation Sans">G</text><path d="M2.5 10 H11.5 M2.5 12.5 H11.5" stroke="#9a9a9a" stroke-width="0.8"/></svg>
<div class="a t" style="left:125.5px;top:467.9px;font-size:10.7px;line-height:12.8px;color:#2a2a2a;font-weight:normal;">NCProgram17</div>
<div class="a" style="left:72px;top:486.7px;width:129px;height:20px;background:#f4f4f4;border-radius:2px"></div>
<svg class="a" style="left:73px;top:488.74px;" width="16" height="16" viewBox="0 0 16 16"><circle cx="8" cy="8" r="7" fill="#f7b23a" stroke="#e8950f" stroke-width="1.1"/><path d="M11.5 5.2 A4.3 4.3 0 1 0 11.8 10.2" fill="none" stroke="#fff3cf" stroke-width="1.7"/><path d="M6.5 8 H11" stroke="#fff3cf" stroke-width="1.7"/></svg>
<svg class="a" style="left:98px;top:488.74px;" width="14" height="16" viewBox="0 0 14 16"><rect x="0.5" y="0.5" width="13" height="15" fill="#fbfbfb" stroke="#8a8a8a" stroke-width="1"/><text x="7" y="7" font-size="6" font-weight="bold" text-anchor="middle" fill="#3b8fd6" font-family="Liberation Sans">G</text><path d="M2.5 10 H11.5 M2.5 12.5 H11.5" stroke="#9a9a9a" stroke-width="0.8"/></svg>
<div class="a t" style="left:125.5px;top:490.3px;font-size:10.7px;line-height:12.8px;color:#2a2a2a;font-weight:normal;">NCProgram18</div>
<div class="a" style="left:72px;top:509.2px;width:129px;height:20px;background:#f4f4f4;border-radius:2px"></div>
<svg class="a" style="left:73px;top:511.20000000000005px;" width="16" height="16" viewBox="0 0 16 16"><circle cx="8" cy="8" r="7" fill="#f7b23a" stroke="#e8950f" stroke-width="1.1"/><path d="M11.5 5.2 A4.3 4.3 0 1 0 11.8 10.2" fill="none" stroke="#fff3cf" stroke-width="1.7"/><path d="M6.5 8 H11" stroke="#fff3cf" stroke-width="1.7"/></svg>
<svg class="a" style="left:98px;top:511.20000000000005px;" width="14" height="16" viewBox="0 0 14 16"><rect x="0.5" y="0.5" width="13" height="15" fill="#fbfbfb" stroke="#8a8a8a" stroke-width="1"/><text x="7" y="7" font-size="6" font-weight="bold" text-anchor="middle" fill="#3b8fd6" font-family="Liberation Sans">G</text><path d="M2.5 10 H11.5 M2.5 12.5 H11.5" stroke="#9a9a9a" stroke-width="0.8"/></svg>
<div class="a t" style="left:125.5px;top:512.8px;font-size:10.7px;line-height:12.8px;color:#2a2a2a;font-weight:normal;">NCProgram19</div>
<div class="a" style="left:72px;top:531.7px;width:129px;height:20px;background:#f4f4f4;border-radius:2px"></div>
<svg class="a" style="left:73px;top:533.6600000000001px;" width="16" height="16" viewBox="0 0 16 16"><circle cx="8" cy="8" r="7" fill="#f7b23a" stroke="#e8950f" stroke-width="1.1"/><path d="M11.5 5.2 A4.3 4.3 0 1 0 11.8 10.2" fill="none" stroke="#fff3cf" stroke-width="1.7"/><path d="M6.5 8 H11" stroke="#fff3cf" stroke-width="1.7"/></svg>
<svg class="a" style="left:98px;top:533.6600000000001px;" width="14" height="16" viewBox="0 0 14 16"><rect x="0.5" y="0.5" width="13" height="15" fill="#fbfbfb" stroke="#8a8a8a" stroke-width="1"/><text x="7" y="7" font-size="6" font-weight="bold" text-anchor="middle" fill="#3b8fd6" font-family="Liberation Sans">G</text><path d="M2.5 10 H11.5 M2.5 12.5 H11.5" stroke="#9a9a9a" stroke-width="0.8"/></svg>
<div class="a t" style="left:125.5px;top:535.2px;font-size:10.7px;line-height:12.8px;color:#2a2a2a;font-weight:normal;">NCProgram25</div>
<div class="a" style="left:72px;top:554.1px;width:129px;height:20px;background:#f4f4f4;border-radius:2px"></div>
<svg class="a" style="left:73px;top:556.12px;" width="16" height="16" viewBox="0 0 16 16"><circle cx="8" cy="8" r="7" fill="#f7b23a" stroke="#e8950f" stroke-width="1.1"/><path d="M11.5 5.2 A4.3 4.3 0 1 0 11.8 10.2" fill="none" stroke="#fff3cf" stroke-width="1.7"/><path d="M6.5 8 H11" stroke="#fff3cf" stroke-width="1.7"/></svg>
<svg class="a" style="left:98px;top:556.12px;" width="14" height="16" viewBox="0 0 14 16"><rect x="0.5" y="0.5" width="13" height="15" fill="#fbfbfb" stroke="#8a8a8a" stroke-width="1"/><text x="7" y="7" font-size="6" font-weight="bold" text-anchor="middle" fill="#3b8fd6" font-family="Liberation Sans">G</text><path d="M2.5 10 H11.5 M2.5 12.5 H11.5" stroke="#9a9a9a" stroke-width="0.8"/></svg>
<div class="a t" style="left:125.5px;top:557.7px;font-size:10.7px;line-height:12.8px;color:#2a2a2a;font-weight:normal;">NCProgram26</div>
<div class="a" style="left:72px;top:576.6px;width:129px;height:20px;background:#f4f4f4;border-radius:2px"></div>
<svg class="a" style="left:73px;top:578.58px;" width="16" height="16" viewBox="0 0 16 16"><circle cx="8" cy="8" r="7" fill="#f7b23a" stroke="#e8950f" stroke-width="1.1"/><path d="M11.5 5.2 A4.3 4.3 0 1 0 11.8 10.2" fill="none" stroke="#fff3cf" stroke-width="1.7"/><path d="M6.5 8 H11" stroke="#fff3cf" stroke-width="1.7"/></svg>
<svg class="a" style="left:98px;top:578.58px;" width="14" height="16" viewBox="0 0 14 16"><rect x="0.5" y="0.5" width="13" height="15" fill="#fbfbfb" stroke="#8a8a8a" stroke-width="1"/><text x="7" y="7" font-size="6" font-weight="bold" text-anchor="middle" fill="#3b8fd6" font-family="Liberation Sans">G</text><path d="M2.5 10 H11.5 M2.5 12.5 H11.5" stroke="#9a9a9a" stroke-width="0.8"/></svg>
<div class="a t" style="left:125.5px;top:580.2px;font-size:10.7px;line-height:12.8px;color:#2a2a2a;font-weight:normal;">NCProgram23</div>
<div class="a" style="left:72px;top:599.0px;width:129px;height:20px;background:#f4f4f4;border-radius:2px"></div>
<svg class="a" style="left:73px;top:601.04px;" width="16" height="16" viewBox="0 0 16 16"><circle cx="8" cy="8" r="7" fill="#f7b23a" stroke="#e8950f" stroke-width="1.1"/><path d="M11.5 5.2 A4.3 4.3 0 1 0 11.8 10.2" fill="none" stroke="#fff3cf" stroke-width="1.7"/><path d="M6.5 8 H11" stroke="#fff3cf" stroke-width="1.7"/></svg>
<svg class="a" style="left:98px;top:601.04px;" width="14" height="16" viewBox="0 0 14 16"><rect x="0.5" y="0.5" width="13" height="15" fill="#fbfbfb" stroke="#8a8a8a" stroke-width="1"/><text x="7" y="7" font-size="6" font-weight="bold" text-anchor="middle" fill="#3b8fd6" font-family="Liberation Sans">G</text><path d="M2.5 10 H11.5 M2.5 12.5 H11.5" stroke="#9a9a9a" stroke-width="0.8"/></svg>
<div class="a t" style="left:125.5px;top:602.6px;font-size:10.7px;line-height:12.8px;color:#2a2a2a;font-weight:normal;">NCProgram24</div>
<div class="a" style="left:72px;top:621.5px;width:129px;height:20px;background:#f4f4f4;border-radius:2px"></div>
<svg class="a" style="left:73px;top:623.5px;" width="16" height="16" viewBox="0 0 16 16"><circle cx="8" cy="8" r="7" fill="#f7b23a" stroke="#e8950f" stroke-width="1.1"/><path d="M11.5 5.2 A4.3 4.3 0 1 0 11.8 10.2" fill="none" stroke="#fff3cf" stroke-width="1.7"/><path d="M6.5 8 H11" stroke="#fff3cf" stroke-width="1.7"/></svg>
<svg class="a" style="left:98px;top:623.5px;" width="14" height="16" viewBox="0 0 14 16"><rect x="0.5" y="0.5" width="13" height="15" fill="#fbfbfb" stroke="#8a8a8a" stroke-width="1"/><text x="7" y="7" font-size="6" font-weight="bold" text-anchor="middle" fill="#3b8fd6" font-family="Liberation Sans">G</text><path d="M2.5 10 H11.5 M2.5 12.5 H11.5" stroke="#9a9a9a" stroke-width="0.8"/></svg>
<div class="a t" style="left:125.5px;top:625.1px;font-size:10.7px;line-height:12.8px;color:#2a2a2a;font-weight:normal;">NCProgram28</div>
<div class="a" style="left:72px;top:644.0px;width:129px;height:20px;background:#f4f4f4;border-radius:2px"></div>
<svg class="a" style="left:73px;top:645.96px;" width="16" height="16" viewBox="0 0 16 16"><circle cx="8" cy="8" r="7" fill="#f7b23a" stroke="#e8950f" stroke-width="1.1"/><path d="M11.5 5.2 A4.3 4.3 0 1 0 11.8 10.2" fill="none" stroke="#fff3cf" stroke-width="1.7"/><path d="M6.5 8 H11" stroke="#fff3cf" stroke-width="1.7"/></svg>
<svg class="a" style="left:98px;top:645.96px;" width="14" height="16" viewBox="0 0 14 16"><rect x="0.5" y="0.5" width="13" height="15" fill="#fbfbfb" stroke="#8a8a8a" stroke-width="1"/><text x="7" y="7" font-size="6" font-weight="bold" text-anchor="middle" fill="#3b8fd6" font-family="Liberation Sans">G</text><path d="M2.5 10 H11.5 M2.5 12.5 H11.5" stroke="#9a9a9a" stroke-width="0.8"/></svg>
<div class="a t" style="left:125.5px;top:647.5px;font-size:10.7px;line-height:12.8px;color:#2a2a2a;font-weight:normal;">NCProgram29</div>
<div class="a" style="left:72px;top:666.4px;width:129px;height:20px;background:#f4f4f4;border-radius:2px"></div>
<svg class="a" style="left:73px;top:668.4200000000001px;" width="16" height="16" viewBox="0 0 16 16"><circle cx="8" cy="8" r="7" fill="#f7b23a" stroke="#e8950f" stroke-width="1.1"/><path d="M11.5 5.2 A4.3 4.3 0 1 0 11.8 10.2" fill="none" stroke="#fff3cf" stroke-width="1.7"/><path d="M6.5 8 H11" stroke="#fff3cf" stroke-width="1.7"/></svg>
<svg class="a" style="left:98px;top:668.4200000000001px;" width="14" height="16" viewBox="0 0 14 16"><rect x="0.5" y="0.5" width="13" height="15" fill="#fbfbfb" stroke="#8a8a8a" stroke-width="1"/><text x="7" y="7" font-size="6" font-weight="bold" text-anchor="middle" fill="#3b8fd6" font-family="Liberation Sans">G</text><path d="M2.5 10 H11.5 M2.5 12.5 H11.5" stroke="#9a9a9a" stroke-width="0.8"/></svg>
<div class="a t" style="left:125.5px;top:670.0px;font-size:10.7px;line-height:12.8px;color:#2a2a2a;font-weight:normal;">NCProgram30</div>
<div class="a" style="left:72px;top:688.9px;width:129px;height:20px;background:#f4f4f4;border-radius:2px"></div>
<svg class="a" style="left:73px;top:690.8800000000001px;" width="16" height="16" viewBox="0 0 16 16"><circle cx="8" cy="8" r="7" fill="#f7b23a" stroke="#e8950f" stroke-width="1.1"/><path d="M11.5 5.2 A4.3 4.3 0 1 0 11.8 10.2" fill="none" stroke="#fff3cf" stroke-width="1.7"/><path d="M6.5 8 H11" stroke="#fff3cf" stroke-width="1.7"/></svg>
<svg class="a" style="left:98px;top:690.8800000000001px;" width="14" height="16" viewBox="0 0 14 16"><rect x="0.5" y="0.5" width="13" height="15" fill="#fbfbfb" stroke="#8a8a8a" stroke-width="1"/><text x="7" y="7" font-size="6" font-weight="bold" text-anchor="middle" fill="#3b8fd6" font-family="Liberation Sans">G</text><path d="M2.5 10 H11.5 M2.5 12.5 H11.5" stroke="#9a9a9a" stroke-width="0.8"/></svg>
<div class="a t" style="left:125.5px;top:692.5px;font-size:10.7px;line-height:12.8px;color:#2a2a2a;font-weight:normal;">NCProgram31</div>
<div class="a" style="left:72px;top:711.3px;width:129px;height:20px;background:#f4f4f4;border-radius:2px"></div>
<svg class="a" style="left:73px;top:713.3399999999999px;" width="16" height="16" viewBox="0 0 16 16"><circle cx="8" cy="8" r="6.5" fill="#f5f9ec" stroke="#8fbf4a" stroke-width="1.2"/><path d="M4.5 8 L7 10.5 L11.5 5.5" stroke="#7aae3a" stroke-width="1.4" fill="none"/></svg>
<svg class="a" style="left:98px;top:713.3399999999999px;" width="14" height="16" viewBox="0 0 14 16"><rect x="0.5" y="0.5" width="13" height="15" fill="#fbfbfb" stroke="#8a8a8a" stroke-width="1"/><text x="7" y="7" font-size="6" font-weight="bold" text-anchor="middle" fill="#3b8fd6" font-family="Liberation Sans">G</text><path d="M2.5 10 H11.5 M2.5 12.5 H11.5" stroke="#9a9a9a" stroke-width="0.8"/></svg>
<div class="a t" style="left:125.5px;top:714.9px;font-size:10.7px;line-height:12.8px;color:#2a2a2a;font-weight:normal;">NCProgram32</div>
<div class="a" style="left:54px;top:733.8px;width:99px;height:20px;background:#f4f4f4;border-radius:2px"></div>
<svg class="a" style="left:36.5px;top:739.8px;" width="10" height="8" viewBox="0 0 10 8"><path d="M1.5 2 L5 5.5 L8.5 2" stroke="#555" stroke-width="1.5" fill="none"/></svg>
<svg class="a" style="left:55.400000000000006px;top:737.8px;" width="18" height="12" viewBox="0 0 18 12"><path d="M0.5 6 Q9 -2 17.5 6 Q9 14 0.5 6Z" fill="#686868"/><circle cx="9" cy="6" r="3.6" fill="#ececec"/><circle cx="9" cy="6" r="1.7" fill="#4a4a4a"/></svg>
<svg class="a" style="left:80px;top:735.8px;" width="17" height="16" viewBox="0 0 17 16"><path d="M0.5 2.5 H5 L6.5 4 H14.5 V13.5 H0.5Z" fill="#fbfbfb" stroke="#8a8a8a" stroke-width="1"/><path d="M0.5 5.5 H14.5" stroke="#8a8a8a" stroke-width="0.8"/><path d="M10 10.5 L13 8.5 L16 10.5 L13 14Z" fill="#3a9ad9" stroke="#fff" stroke-width="0.8"/></svg>
<div class="a t" style="left:108.7px;top:737.4px;font-size:10.6px;line-height:12.7px;color:#2a2a2a;font-weight:normal;letter-spacing:0.25px">Setups</div>
<div class="a" style="left:70px;top:756.3px;width:149px;height:20px;background:#f4f4f4;border-radius:2px"></div>
<svg class="a" style="left:52.8px;top:762.26px;" width="10" height="8" viewBox="0 0 10 8"><path d="M1.5 2 L5 5.5 L8.5 2" stroke="#555" stroke-width="1.5" fill="none"/></svg>
<svg class="a" style="left:72.2px;top:760.26px;" width="18" height="12" viewBox="0 0 18 12"><path d="M0.5 6 Q9 -2 17.5 6 Q9 14 0.5 6Z" fill="#686868"/><circle cx="9" cy="6" r="3.6" fill="#ececec"/><circle cx="9" cy="6" r="1.7" fill="#4a4a4a"/></svg>
<svg class="a" style="left:99px;top:760.26px;" width="12" height="12" viewBox="0 0 12 12"><path d="M11.5 0.5 L11.5 11 L0.5 11Z" fill="#f29a1e"/><path d="M11.5 0.5 L11.5 11 L6 11Z" fill="#f7b54a"/></svg>
<svg class="a" style="left:120px;top:758.26px;" width="17" height="16" viewBox="0 0 17 16"><path d="M0.5 2.5 H5 L6.5 4 H14.5 V13.5 H0.5Z" fill="#fbfbfb" stroke="#8a8a8a" stroke-width="1"/><path d="M0.5 5.5 H14.5" stroke="#8a8a8a" stroke-width="0.8"/><path d="M10 10.5 L13 8.5 L16 10.5 L13 14Z" fill="#3a9ad9" stroke="#fff" stroke-width="0.8"/></svg>
<div class="a t" style="left:148.8px;top:759.9px;font-size:10.6px;line-height:12.7px;color:#2a2a2a;font-weight:bold;letter-spacing:0.25px">Setup1</div>
<svg class="a" style="left:197.5px;top:759.26px;" width="14" height="14" viewBox="0 0 14 14"><defs><radialGradient id="rg" cx="0.4" cy="0.35" r="0.7"><stop offset="0" stop-color="#fafafa"/><stop offset="1" stop-color="#b9b9b9"/></radialGradient></defs><circle cx="7" cy="7" r="6" fill="url(#rg)" stroke="#9d9d9d" stroke-width="0.8"/><circle cx="7" cy="7" r="2.3" fill="#333"/></svg>
<div class="a" style="left:88px;top:778.7px;width:152px;height:20px;background:#f4f4f4;border-radius:2px"></div>
<svg class="a" style="left:71.3px;top:783.72px;" width="8" height="10" viewBox="0 0 8 10"><path d="M2 1.5 L5.5 5 L2 8.5" stroke="#555" stroke-width="1.5" fill="none"/></svg>
<svg class="a" style="left:89.2px;top:782.72px;" width="18" height="12" viewBox="0 0 18 12"><path d="M0.5 6 Q9 -2 17.5 6 Q9 14 0.5 6Z" fill="#686868"/><circle cx="9" cy="6" r="3.6" fill="#ececec"/><circle cx="9" cy="6" r="1.7" fill="#4a4a4a"/></svg>
<svg class="a" style="left:116px;top:782.72px;" width="12" height="12" viewBox="0 0 12 12"><path d="M11.5 0.5 L11.5 11 L0.5 11Z" fill="#f29a1e"/><path d="M11.5 0.5 L11.5 11 L6 11Z" fill="#f7b54a"/></svg>
<svg class="a" style="left:136.5px;top:780.72px;" width="17" height="16" viewBox="0 0 17 16"><path d="M0.5 2.5 H5 L6.5 4 H14.5 V13.5 H0.5Z" fill="#fbfbfb" stroke="#8a8a8a" stroke-width="1"/><path d="M0.5 5.5 H14.5" stroke="#8a8a8a" stroke-width="0.8"/></svg>
<div class="a t" style="left:165.8px;top:782.4px;font-size:10.6px;line-height:12.7px;color:#2a2a2a;font-weight:normal;letter-spacing:0.25px">Mariam</div>
<svg class="a" style="left:218.4px;top:781.72px;" width="14" height="14" viewBox="0 0 14 14"><defs><radialGradient id="rg" cx="0.4" cy="0.35" r="0.7"><stop offset="0" stop-color="#fafafa"/><stop offset="1" stop-color="#b9b9b9"/></radialGradient></defs><circle cx="7" cy="7" r="6" fill="url(#rg)" stroke="#9d9d9d" stroke-width="0.8"/></svg>
<div class="a" style="left:88px;top:801.2px;width:136px;height:20px;background:#f4f4f4;border-radius:2px"></div>
<svg class="a" style="left:71.3px;top:806.1800000000001px;" width="8" height="10" viewBox="0 0 8 10"><path d="M2 1.5 L5.5 5 L2 8.5" stroke="#555" stroke-width="1.5" fill="none"/></svg>
<svg class="a" style="left:89.2px;top:805.1800000000001px;" width="18" height="12" viewBox="0 0 18 12"><path d="M0.5 6 Q9 -2 17.5 6 Q9 14 0.5 6Z" fill="#686868"/><circle cx="9" cy="6" r="3.6" fill="#ececec"/><circle cx="9" cy="6" r="1.7" fill="#4a4a4a"/></svg>
<svg class="a" style="left:116px;top:805.1800000000001px;" width="12" height="12" viewBox="0 0 12 12"><path d="M11.5 0.5 L11.5 11 L0.5 11Z" fill="#f29a1e"/><path d="M11.5 0.5 L11.5 11 L6 11Z" fill="#f7b54a"/></svg>
<svg class="a" style="left:136.5px;top:803.1800000000001px;" width="17" height="16" viewBox="0 0 17 16"><path d="M0.5 2.5 H5 L6.5 4 H14.5 V13.5 H0.5Z" fill="#fbfbfb" stroke="#8a8a8a" stroke-width="1"/><path d="M0.5 5.5 H14.5" stroke="#8a8a8a" stroke-width="0.8"/></svg>
<div class="a t" style="left:165.8px;top:804.8px;font-size:10.6px;line-height:12.7px;color:#2a2a2a;font-weight:normal;letter-spacing:0.25px">Sveta</div>
<svg class="a" style="left:207px;top:804.1800000000001px;" width="14" height="14" viewBox="0 0 14 14"><defs><radialGradient id="rg" cx="0.4" cy="0.35" r="0.7"><stop offset="0" stop-color="#fafafa"/><stop offset="1" stop-color="#b9b9b9"/></radialGradient></defs><circle cx="7" cy="7" r="6" fill="url(#rg)" stroke="#9d9d9d" stroke-width="0.8"/></svg>
<div class="a" style="left:88px;top:823.6px;width:126px;height:20px;background:#f4f4f4;border-radius:2px"></div>
<svg class="a" style="left:71.3px;top:828.6400000000001px;" width="8" height="10" viewBox="0 0 8 10"><path d="M2 1.5 L5.5 5 L2 8.5" stroke="#555" stroke-width="1.5" fill="none"/></svg>
<svg class="a" style="left:89.2px;top:827.6400000000001px;" width="18" height="12" viewBox="0 0 18 12"><path d="M0.5 6 Q9 -2 17.5 6 Q9 14 0.5 6Z" fill="#686868"/><circle cx="9" cy="6" r="3.6" fill="#ececec"/><circle cx="9" cy="6" r="1.7" fill="#4a4a4a"/></svg>
<svg class="a" style="left:116px;top:827.6400000000001px;" width="12" height="12" viewBox="0 0 12 12"><path d="M11.5 0.5 L11.5 11 L0.5 11Z" fill="#f29a1e"/><path d="M11.5 0.5 L11.5 11 L6 11Z" fill="#f7b54a"/></svg>
<svg class="a" style="left:136.5px;top:825.6400000000001px;" width="17" height="16" viewBox="0 0 17 16"><path d="M0.5 2.5 H5 L6.5 4 H14.5 V13.5 H0.5Z" fill="#fbfbfb" stroke="#8a8a8a" stroke-width="1"/><path d="M0.5 5.5 H14.5" stroke="#8a8a8a" stroke-width="0.8"/></svg>
<div class="a t" style="left:165.8px;top:827.3px;font-size:10.6px;line-height:12.7px;color:#2a2a2a;font-weight:normal;letter-spacing:0.25px">Lilit</div>
<svg class="a" style="left:195.7px;top:826.6400000000001px;" width="14" height="14" viewBox="0 0 14 14"><defs><radialGradient id="rg" cx="0.4" cy="0.35" r="0.7"><stop offset="0" stop-color="#fafafa"/><stop offset="1" stop-color="#b9b9b9"/></radialGradient></defs><circle cx="7" cy="7" r="6" fill="url(#rg)" stroke="#9d9d9d" stroke-width="0.8"/></svg>
<div class="a" style="left:88px;top:846.1px;width:152px;height:20px;background:#f4f4f4;border-radius:2px"></div>
<svg class="a" style="left:70.3px;top:852.1000000000001px;" width="10" height="8" viewBox="0 0 10 8"><path d="M1.5 2 L5 5.5 L8.5 2" stroke="#555" stroke-width="1.5" fill="none"/></svg>
<svg class="a" style="left:89.2px;top:850.1000000000001px;" width="18" height="12" viewBox="0 0 18 12"><path d="M0.5 6 Q9 -2 17.5 6 Q9 14 0.5 6Z" fill="#686868"/><circle cx="9" cy="6" r="3.6" fill="#ececec"/><circle cx="9" cy="6" r="1.7" fill="#4a4a4a"/></svg>
<svg class="a" style="left:116px;top:850.1000000000001px;" width="12" height="12" viewBox="0 0 12 12"><path d="M11.5 0.5 L11.5 11 L0.5 11Z" fill="#f29a1e"/><path d="M11.5 0.5 L11.5 11 L6 11Z" fill="#f7b54a"/></svg>
<svg class="a" style="left:136.5px;top:848.1000000000001px;" width="17" height="16" viewBox="0 0 17 16"><path d="M0.5 2.5 H5 L6.5 4 H14.5 V13.5 H0.5Z" fill="#fbfbfb" stroke="#8a8a8a" stroke-width="1"/><path d="M0.5 5.5 H14.5" stroke="#8a8a8a" stroke-width="0.8"/></svg>
<div class="a t" style="left:165.8px;top:849.7px;font-size:10.6px;line-height:12.7px;color:#2a2a2a;font-weight:normal;letter-spacing:0.25px">Sveta 2</div>
<svg class="a" style="left:218.4px;top:849.1000000000001px;" width="14" height="14" viewBox="0 0 14 14"><defs><radialGradient id="rg" cx="0.4" cy="0.35" r="0.7"><stop offset="0" stop-color="#fafafa"/><stop offset="1" stop-color="#b9b9b9"/></radialGradient></defs><circle cx="7" cy="7" r="6" fill="url(#rg)" stroke="#9d9d9d" stroke-width="0.8"/></svg>
<div class="a" style="left:104px;top:868.6px;width:168px;height:20px;background:#f4f4f4;border-radius:2px"></div>
<svg class="a" style="left:88.4px;top:873.56px;" width="8" height="10" viewBox="0 0 8 10"><path d="M2 1.5 L5.5 5 L2 8.5" stroke="#555" stroke-width="1.5" fill="none"/></svg>
<svg class="a" style="left:106px;top:872.56px;" width="18" height="12" viewBox="0 0 18 12"><path d="M0.5 6 Q9 -2 17.5 6 Q9 14 0.5 6Z" fill="#686868"/><circle cx="9" cy="6" r="3.6" fill="#ececec"/><circle cx="9" cy="6" r="1.7" fill="#4a4a4a"/></svg>
<svg class="a" style="left:130px;top:870.56px;" width="16" height="16" viewBox="0 0 16 16"><circle cx="8" cy="8" r="7" fill="#f7b23a" stroke="#e8950f" stroke-width="1.1"/><path d="M11.5 5.2 A4.3 4.3 0 1 0 11.8 10.2" fill="none" stroke="#fff3cf" stroke-width="1.7"/><path d="M6.5 8 H11" stroke="#fff3cf" stroke-width="1.7"/></svg>
<svg class="a" style="left:153px;top:870.56px;" width="16" height="16" viewBox="0 0 16 16"><path d="M8 1 L15 5 L15 11 L8 15 L1 11 L1 5Z" fill="#9fd0f2" stroke="#2f7fc0" stroke-width="0.8"/><path d="M3 8 L8 5 L13 8 L8 11Z" fill="#1f6fb0"/><path d="M5 8 Q8 6 11 8" stroke="#7fc4f2" stroke-width="1" fill="none"/></svg>
<div class="a t" style="left:182.3px;top:872.2px;font-size:10.6px;line-height:12.7px;color:#2a2a2a;font-weight:normal;letter-spacing:0.25px">[T1] Pocket1 (5)</div>
<div class="a" style="left:104px;top:891.0px;width:178px;height:20px;background:#f4f4f4;border-radius:2px"></div>
<svg class="a" style="left:88.4px;top:896.02px;" width="8" height="10" viewBox="0 0 8 10"><path d="M2 1.5 L5.5 5 L2 8.5" stroke="#555" stroke-width="1.5" fill="none"/></svg>
<svg class="a" style="left:106px;top:895.02px;" width="18" height="12" viewBox="0 0 18 12"><path d="M0.5 6 Q9 -2 17.5 6 Q9 14 0.5 6Z" fill="#686868"/><circle cx="9" cy="6" r="3.6" fill="#ececec"/><circle cx="9" cy="6" r="1.7" fill="#4a4a4a"/></svg>
<svg class="a" style="left:130px;top:893.02px;" width="16" height="16" viewBox="0 0 16 16"><path d="M8 1 L15.5 14.5 H0.5Z" fill="#f39c12"/><rect x="7.1" y="5" width="1.8" height="5.5" fill="#fff"/><rect x="7.1" y="11.5" width="1.8" height="1.8" fill="#fff"/></svg>
<svg class="a" style="left:153px;top:893.02px;" width="16" height="16" viewBox="0 0 16 16"><path d="M8 3 L15 8 L8 13 L1 8Z" fill="#53aee8"/><path d="M8 2 L12 5 L12 8 L8 10.5 L4 8 L4 5Z" fill="#f2f8fc" stroke="#8ab" stroke-width="0.6"/><path d="M1 8 L8 13 L15 8 L15 9.5 L8 14.5 L1 9.5Z" fill="#2a7fc0"/></svg>
<div class="a t" style="left:182.3px;top:894.7px;font-size:10.6px;line-height:12.7px;color:#2a2a2a;font-weight:normal;letter-spacing:0.25px">[T1] 2D Contour ...</div>
<div class="a" style="left:88px;top:913.5px;width:152px;height:20px;background:#f4f4f4;border-radius:2px"></div>
<svg class="a" style="left:70.3px;top:919.48px;" width="10" height="8" viewBox="0 0 10 8"><path d="M1.5 2 L5 5.5 L8.5 2" stroke="#555" stroke-width="1.5" fill="none"/></svg>
<svg class="a" style="left:89.2px;top:917.48px;" width="18" height="12" viewBox="0 0 18 12"><path d="M0.5 6 Q9 -2 17.5 6 Q9 14 0.5 6Z" fill="#686868"/><circle cx="9" cy="6" r="3.6" fill="#ececec"/><circle cx="9" cy="6" r="1.7" fill="#4a4a4a"/></svg>
<svg class="a" style="left:116px;top:917.48px;" width="12" height="12" viewBox="0 0 12 12"><path d="M11.5 0.5 L11.5 11 L0.5 11Z" fill="#f29a1e"/><path d="M11.5 0.5 L11.5 11 L6 11Z" fill="#f7b54a"/></svg>
<svg class="a" style="left:136.5px;top:915.48px;" width="17" height="16" viewBox="0 0 17 16"><path d="M0.5 2.5 H5 L6.5 4 H14.5 V13.5 H0.5Z" fill="#fbfbfb" stroke="#8a8a8a" stroke-width="1"/><path d="M0.5 5.5 H14.5" stroke="#8a8a8a" stroke-width="0.8"/></svg>
<div class="a t" style="left:165.8px;top:917.1px;font-size:10.6px;line-height:12.7px;color:#2a2a2a;font-weight:normal;letter-spacing:0.25px">Sveta 3</div>
<svg class="a" style="left:218.4px;top:916.48px;" width="14" height="14" viewBox="0 0 14 14"><defs><radialGradient id="rg" cx="0.4" cy="0.35" r="0.7"><stop offset="0" stop-color="#fafafa"/><stop offset="1" stop-color="#b9b9b9"/></radialGradient></defs><circle cx="7" cy="7" r="6" fill="url(#rg)" stroke="#9d9d9d" stroke-width="0.8"/></svg>
<div class="a" style="left:104px;top:935.9px;width:168px;height:20px;background:#f4f4f4;border-radius:2px"></div>
<svg class="a" style="left:88.4px;top:940.94px;" width="8" height="10" viewBox="0 0 8 10"><path d="M2 1.5 L5.5 5 L2 8.5" stroke="#555" stroke-width="1.5" fill="none"/></svg>
<svg class="a" style="left:106px;top:938.94px;" width="18" height="14" viewBox="0 0 18 14"><path d="M1.5 7 Q9 0.5 16.5 7 Q9 13.5 1.5 7Z" fill="none" stroke="#8a8a8a" stroke-width="1.3"/><circle cx="9" cy="7" r="2.5" fill="none" stroke="#8a8a8a" stroke-width="1.2"/><path d="M3 12.5 L15 1.5" stroke="#8a8a8a" stroke-width="1.3"/></svg>
<svg class="a" style="left:130px;top:937.94px;" width="16" height="16" viewBox="0 0 16 16"><circle cx="8" cy="8" r="7" fill="#f7b23a" stroke="#e8950f" stroke-width="1.1"/><path d="M11.5 5.2 A4.3 4.3 0 1 0 11.8 10.2" fill="none" stroke="#fff3cf" stroke-width="1.7"/><path d="M6.5 8 H11" stroke="#fff3cf" stroke-width="1.7"/></svg>
<svg class="a" style="left:153px;top:937.94px;" width="16" height="16" viewBox="0 0 16 16"><path d="M8 1 L15 5 L15 11 L8 15 L1 11 L1 5Z" fill="#9fd0f2" stroke="#2f7fc0" stroke-width="0.8"/><path d="M3 8 L8 5 L13 8 L8 11Z" fill="#1f6fb0"/><path d="M5 8 Q8 6 11 8" stroke="#7fc4f2" stroke-width="1" fill="none"/></svg>
<div class="a t" style="left:182.3px;top:939.6px;font-size:10.6px;line-height:12.7px;color:#2a2a2a;font-weight:normal;letter-spacing:0.25px">[T1] Pocket1 (6)</div>
<div class="a" style="left:104px;top:958.4px;width:178px;height:20px;background:#f4f4f4;border-radius:2px"></div>
<svg class="a" style="left:88.4px;top:963.4000000000001px;" width="8" height="10" viewBox="0 0 8 10"><path d="M2 1.5 L5.5 5 L2 8.5" stroke="#555" stroke-width="1.5" fill="none"/></svg>
<svg class="a" style="left:106px;top:961.4000000000001px;" width="18" height="14" viewBox="0 0 18 14"><path d="M1.5 7 Q9 0.5 16.5 7 Q9 13.5 1.5 7Z" fill="none" stroke="#8a8a8a" stroke-width="1.3"/><circle cx="9" cy="7" r="2.5" fill="none" stroke="#8a8a8a" stroke-width="1.2"/><path d="M3 12.5 L15 1.5" stroke="#8a8a8a" stroke-width="1.3"/></svg>
<svg class="a" style="left:130px;top:960.4000000000001px;" width="16" height="16" viewBox="0 0 16 16"><circle cx="8" cy="8" r="7" fill="#f7b23a" stroke="#e8950f" stroke-width="1.1"/><path d="M11.5 5.2 A4.3 4.3 0 1 0 11.8 10.2" fill="none" stroke="#fff3cf" stroke-width="1.7"/><path d="M6.5 8 H11" stroke="#fff3cf" stroke-width="1.7"/></svg>
<svg class="a" style="left:153px;top:960.4000000000001px;" width="16" height="16" viewBox="0 0 16 16"><path d="M8 3 L15 8 L8 13 L1 8Z" fill="#53aee8"/><path d="M8 2 L12 5 L12 8 L8 10.5 L4 8 L4 5Z" fill="#f2f8fc" stroke="#8ab" stroke-width="0.6"/><path d="M1 8 L8 13 L15 8 L15 9.5 L8 14.5 L1 9.5Z" fill="#2a7fc0"/></svg>
<div class="a t" style="left:182.3px;top:962.0px;font-size:10.6px;line-height:12.7px;color:#2a2a2a;font-weight:normal;letter-spacing:0.25px">[T1] 2D Contour ...</div>
<div class="a" style="left:88px;top:980.9px;width:178px;height:20px;background:#f4f4f4;border-radius:2px"></div>
<svg class="a" style="left:71.3px;top:985.8600000000001px;" width="8" height="10" viewBox="0 0 8 10"><path d="M2 1.5 L5.5 5 L2 8.5" stroke="#555" stroke-width="1.5" fill="none"/></svg>
<svg class="a" style="left:89.2px;top:983.8600000000001px;" width="18" height="14" viewBox="0 0 18 14"><path d="M1.5 7 Q9 0.5 16.5 7 Q9 13.5 1.5 7Z" fill="none" stroke="#8a8a8a" stroke-width="1.3"/><circle cx="9" cy="7" r="2.5" fill="none" stroke="#8a8a8a" stroke-width="1.2"/><path d="M3 12.5 L15 1.5" stroke="#8a8a8a" stroke-width="1.3"/></svg>
<svg class="a" style="left:113.6px;top:982.8600000000001px;" width="16" height="16" viewBox="0 0 16 16"><circle cx="8" cy="8" r="7" fill="#f7b23a" stroke="#e8950f" stroke-width="1.1"/><path d="M11.5 5.2 A4.3 4.3 0 1 0 11.8 10.2" fill="none" stroke="#fff3cf" stroke-width="1.7"/><path d="M6.5 8 H11" stroke="#fff3cf" stroke-width="1.7"/></svg>
<svg class="a" style="left:136.5px;top:982.8600000000001px;" width="16" height="16" viewBox="0 0 16 16"><path d="M8 3 L15 8 L8 13 L1 8Z" fill="#53aee8"/><path d="M8 2 L12 5 L12 8 L8 10.5 L4 8 L4 5Z" fill="#f2f8fc" stroke="#8ab" stroke-width="0.6"/><path d="M1 8 L8 13 L15 8 L15 9.5 L8 14.5 L1 9.5Z" fill="#2a7fc0"/></svg>
<div class="a t" style="left:165.8px;top:984.5px;font-size:10.6px;line-height:12.7px;color:#2a2a2a;font-weight:normal;letter-spacing:0.25px">[T1] 2D Contour13</div>
<div class="a" style="left:4px;top:1008px;width:281px;height:24px;background:#efefef;"></div>
<div class="a t" style="left:30px;top:1014.9px;font-size:10.2px;line-height:12.2px;color:#4a4a4a;font-weight:normal;">COMMENTS</div>
<svg class="a" style="left:262px;top:1014px;" width="12" height="12" viewBox="0 0 12 12"><rect x="5.2" y="1" width="1.6" height="10" fill="#666"/><rect x="1" y="5.2" width="10" height="1.6" fill="#666"/></svg>
<div class="a" style="left:1217px;top:256px;width:376px;height:561px;background:#f4f4f4;box-shadow:0 0 4px rgba(0,0,0,0.15)"></div>
<div class="a" style="left:1595px;top:256px;width:1px;height:561px;background:#e6e6e6;"></div>
<div class="a" style="left:1229px;top:268px;width:8px;height:1.6px;background:#555;"></div>
<div class="a t" style="left:1244px;top:263.8px;font-size:10.4px;line-height:12.5px;color:#444;font-weight:normal;">SETUP : SETUP1</div>
<svg class="a" style="left:1581px;top:265px;" width="9" height="8" viewBox="0 0 9 8"><path d="M0.5 0.5 L4 4 L0.5 7.5Z M4.5 0.5 L8 4 L4.5 7.5Z" fill="#888"/></svg>
<div class="a" style="left:1217px;top:280px;width:376px;height:27px;background:#f3f3f3;"></div>
<div class="a" style="left:1220px;top:281px;width:65px;height:25px;background:#f0f0f0;border-right:1px solid #dedede"></div>
<div class="a" style="left:1287px;top:280px;width:65px;height:28px;background:#f4f4f4;border:1px solid #dcdcdc;border-bottom:none"></div>
<div class="a" style="left:1352px;top:281px;width:104px;height:25px;background:#f0f0f0;border-right:1px solid #dedede"></div>
<div class="a" style="left:1217px;top:306px;width:70px;height:1px;background:#d2d2d2;"></div>
<div class="a" style="left:1352px;top:306px;width:241px;height:1px;background:#d2d2d2;"></div>
<svg class="a" style="left:1224px;top:285px;" width="18" height="17" viewBox="0 0 18 17"><path d="M3 8 L9 5 L15 8 L15 15 L9 17 L3 14Z" fill="#e8e8e8" stroke="#777" stroke-width="0.8"/><path d="M7 4 L12 1 L17 3 L17 9 L12 12 L7 10Z" fill="#2f8fd8"/><path d="M7 4 L12 1 L17 3 L12 6Z" fill="#8fd0fa"/></svg>
<div class="a t" style="left:1246px;top:288.1px;font-size:10.7px;line-height:12.8px;color:#333;font-weight:normal;">Setup</div>
<svg class="a" style="left:1293px;top:286px;" width="16" height="16" viewBox="0 0 16 16"><path d="M2 4 L7 1 L14 2 L14 12 L9 15 L2 13Z" fill="#e7c35a"/><path d="M2 4 L7 1 L14 2 L9 5Z" fill="#f5de8e"/><path d="M9 5 L14 2 L14 12 L9 15Z" fill="#caa03a"/></svg>
<div class="a t" style="left:1313.5px;top:288.1px;font-size:10.7px;line-height:12.8px;color:#333;font-weight:normal;">Stock</div>
<svg class="a" style="left:1359px;top:285px;" width="16" height="17" viewBox="0 0 16 17"><rect x="0.5" y="1.5" width="15" height="15" fill="#dfeefa" stroke="#3b6f9e" stroke-width="1"/><rect x="0.5" y="1.5" width="15" height="3" fill="#3b6f9e"/><rect x="3" y="7" width="4" height="3" fill="#3b7fc0"/><rect x="9" y="7" width="4" height="3" fill="#3b7fc0"/><rect x="3" y="12" width="4" height="3" fill="#3b7fc0"/><rect x="9" y="12" width="4" height="3" fill="#3b7fc0"/></svg>
<div class="a t" style="left:1380.5px;top:288.3px;font-size:10.3px;line-height:12.4px;color:#333;font-weight:normal;">Post Process</div>
<svg class="a" style="left:1228px;top:318px;" width="9" height="8" viewBox="0 0 9 8"><path d="M0.5 0.5 H8.5 L4.5 7Z" fill="#666"/></svg>
<div class="a t" style="left:1241.5px;top:315.7px;font-size:10.5px;line-height:12.6px;color:#333;font-weight:bold;">Stock</div>
<div class="a t" style="left:1230px;top:345.3px;font-size:11.2px;line-height:13.4px;color:#3a3a3a;font-weight:normal;">Mode</div>
<div class="a t" style="left:1230px;top:374.3px;font-size:11.2px;line-height:13.4px;color:#3a3a3a;font-weight:normal;">Ground Stock at Model Origin</div>
<div class="a t" style="left:1230px;top:403.3px;font-size:11.2px;line-height:13.4px;color:#3a3a3a;font-weight:normal;">Width (X)</div>
<div class="a t" style="left:1230px;top:432.3px;font-size:11.2px;line-height:13.4px;color:#3a3a3a;font-weight:normal;">Model Position</div>
<div class="a t" style="left:1230px;top:461.3px;font-size:11.2px;line-height:13.4px;color:#3a3a3a;font-weight:normal;">Offset</div>
<div class="a t" style="left:1230px;top:490.3px;font-size:11.2px;line-height:13.4px;color:#3a3a3a;font-weight:normal;">Depth (Y)</div>
<div class="a t" style="left:1230px;top:519.3px;font-size:11.2px;line-height:13.4px;color:#3a3a3a;font-weight:normal;">Model Position</div>
<div class="a t" style="left:1230px;top:548.3px;font-size:11.2px;line-height:13.4px;color:#3a3a3a;font-weight:normal;">Offset</div>
<div class="a t" style="left:1230px;top:577.3px;font-size:11.2px;line-height:13.4px;color:#3a3a3a;font-weight:normal;">Height (Z)</div>
<div class="a t" style="left:1230px;top:606.3px;font-size:11.2px;line-height:13.4px;color:#3a3a3a;font-weight:normal;">Model Position</div>
<div class="a t" style="left:1230px;top:635.3px;font-size:11.2px;line-height:13.4px;color:#3a3a3a;font-weight:normal;">Round Up to Nearest</div>
<div class="a" style="left:1377px;top:333px;width:200px;height:38px;border:2.5px solid #e3262a"></div>
<div class="a" style="left:1397px;top:339px;width:168px;height:24px;background:#fff;border:1px solid #e6e6e6"></div>
<div class="a t" style="left:1408.5px;top:345.3px;font-size:11.2px;line-height:13.4px;color:#333;font-weight:normal;"></div>
<svg class="a" style="left:1553px;top:349px;" width="7" height="5" viewBox="0 0 7 5"><path d="M0 0 H6 L3 4Z" fill="#666"/></svg>
<svg class="a" style="left:1401px;top:344px;" width="16" height="14" viewBox="0 0 16 14"><path d="M1 3 L6 1 L15 2 L15 11 L10 13 L1 12Z" fill="#f5d020"/><path d="M10 4 L15 2 L15 11 L10 13Z" fill="#dcb000"/></svg>
<div class="a t" style="left:1420px;top:345.3px;font-size:11.2px;line-height:13.4px;color:#333;font-weight:normal;">Fixed size box</div>
<div class="a" style="left:1403px;top:374px;width:12px;height:12px;background:#fff;border:1px solid #c9c9c9;border-radius:2px"></div>
<div class="a" style="left:1399px;top:397px;width:165px;height:24px;background:#fff;border:1px solid #e6e6e6"></div>
<div class="a t" style="left:1408.5px;top:403.3px;font-size:11.2px;line-height:13.4px;color:#333;font-weight:normal;">2440 mm</div>
<div class="a" style="left:1399px;top:426px;width:165px;height:24px;background:#fff;border:1px solid #e6e6e6"></div>
<div class="a t" style="left:1405px;top:432.3px;font-size:11.2px;line-height:13.4px;color:#333;font-weight:normal;">Offset from left side (&#x2013;X)</div>
<svg class="a" style="left:1552px;top:436px;" width="7" height="5" viewBox="0 0 7 5"><path d="M0 0 H6 L3 4Z" fill="#666"/></svg>
<div class="a" style="left:1399px;top:455px;width:165px;height:24px;background:#fff;border:1px solid #e6e6e6"></div>
<div class="a t" style="left:1408.5px;top:461.3px;font-size:11.2px;line-height:13.4px;color:#333;font-weight:normal;">400 mm</div>
<div class="a" style="left:1399px;top:484px;width:165px;height:24px;background:#fff;border:1px solid #e6e6e6"></div>
<div class="a t" style="left:1408.5px;top:490.3px;font-size:11.2px;line-height:13.4px;color:#333;font-weight:normal;">1200 mm</div>
<div class="a" style="left:1399px;top:513px;width:165px;height:24px;background:#fff;border:1px solid #e6e6e6"></div>
<div class="a t" style="left:1405px;top:519.3px;font-size:11.2px;line-height:13.4px;color:#333;font-weight:normal;">Offset from front side (&#x2013;Y)</div>
<svg class="a" style="left:1552px;top:523px;" width="7" height="5" viewBox="0 0 7 5"><path d="M0 0 H6 L3 4Z" fill="#666"/></svg>
<div class="a" style="left:1399px;top:542px;width:165px;height:24px;background:#fff;border:1px solid #e6e6e6"></div>
<div class="a t" style="left:1408.5px;top:548.3px;font-size:11.2px;line-height:13.4px;color:#333;font-weight:normal;">30 mm</div>
<div class="a" style="left:1399px;top:571px;width:165px;height:24px;background:#fff;border:1px solid #e6e6e6"></div>
<div class="a t" style="left:1408.5px;top:577.3px;font-size:11.2px;line-height:13.4px;color:#333;font-weight:normal;">18 mm</div>
<div class="a" style="left:1399px;top:594px;width:165px;height:1.5px;background:#d9534f;"></div>
<div class="a" style="left:1399px;top:600px;width:165px;height:24px;background:#fff;border:1px solid #e6e6e6"></div>
<div class="a t" style="left:1405px;top:606.3px;font-size:11.2px;line-height:13.4px;color:#333;font-weight:normal;">Center</div>
<svg class="a" style="left:1552px;top:610px;" width="7" height="5" viewBox="0 0 7 5"><path d="M0 0 H6 L3 4Z" fill="#666"/></svg>
<div class="a" style="left:1399px;top:629px;width:165px;height:24px;background:#fff;border:1px solid #e6e6e6"></div>
<div class="a t" style="left:1408.5px;top:635.3px;font-size:11.2px;line-height:13.4px;color:#333;font-weight:normal;">10 mm</div>
<svg class="a" style="left:1325px;top:399.5px;" width="64" height="16" viewBox="0 0 64 16"><path d="M0.5 8 H50" stroke="#d9301e" stroke-width="2.6" stroke-linecap="round"/><path d="M50 1 L63.5 8 L50 15Z" fill="#ee2a1a"/></svg>
<svg class="a" style="left:1325px;top:486.5px;" width="64" height="16" viewBox="0 0 64 16"><path d="M0.5 8 H50" stroke="#d9301e" stroke-width="2.6" stroke-linecap="round"/><path d="M50 1 L63.5 8 L50 15Z" fill="#ee2a1a"/></svg>
<svg class="a" style="left:1324px;top:573.5px;" width="64" height="16" viewBox="0 0 64 16"><path d="M0.5 8 H50" stroke="#d9301e" stroke-width="2.6" stroke-linecap="round"/><path d="M50 1 L63.5 8 L50 15Z" fill="#ee2a1a"/></svg>
<div class="a" style="left:1225px;top:661px;width:359px;height:1.5px;background:#e4e4e4;"></div>
<svg class="a" style="left:1228px;top:676px;" width="9" height="8" viewBox="0 0 9 8"><path d="M0.5 0.5 H8.5 L4.5 7Z" fill="#666"/></svg>
<div class="a t" style="left:1241.5px;top:673.7px;font-size:10.5px;line-height:12.6px;color:#333;font-weight:bold;">Model Dimensions</div>
<div class="a t" style="left:1230px;top:702.3px;font-size:11.2px;line-height:13.4px;color:#3a3a3a;font-weight:normal;">Model Width (X)</div>
<div class="a t" style="left:1402px;top:702.3px;font-size:11.2px;line-height:13.4px;color:#3a3a3a;font-weight:normal;">766.882 mm</div>
<div class="a t" style="left:1230px;top:731.3px;font-size:11.2px;line-height:13.4px;color:#3a3a3a;font-weight:normal;">Model Depth (Y)</div>
<div class="a t" style="left:1402px;top:731.3px;font-size:11.2px;line-height:13.4px;color:#3a3a3a;font-weight:normal;">1020.27 mm</div>
<div class="a t" style="left:1230px;top:761.3px;font-size:11.2px;line-height:13.4px;color:#3a3a3a;font-weight:normal;">Model Height (Z)</div>
<div class="a t" style="left:1402px;top:761.3px;font-size:11.2px;line-height:13.4px;color:#3a3a3a;font-weight:normal;">21.2586 mm</div>
<div class="a" style="left:1217px;top:783px;width:376px;height:34px;background:#f4f4f4;"></div>
<div class="a" style="left:1217px;top:783px;width:376px;height:1px;background:#e8e8e8;"></div>
<svg class="a" style="left:1231px;top:793px;" width="14" height="14" viewBox="0 0 14 14"><circle cx="7" cy="7" r="6.5" fill="#8a8a8a"/><rect x="6" y="6" width="2" height="5" fill="#fff"/><circle cx="7" cy="4" r="1.2" fill="#fff"/></svg>
<div class="a" style="left:1463px;top:789px;width:41px;height:22px;background:#f8f8f8;border:1px solid #c6c6c6;border-radius:2px"></div>
<div class="a t" style="left:1476px;top:793.3px;font-size:11.2px;line-height:13.4px;color:#333;font-weight:normal;">OK</div>
<div class="a" style="left:1524px;top:789px;width:59px;height:22px;background:#f8f8f8;border:1px solid #c6c6c6;border-radius:2px"></div>
<div class="a t" style="left:1535px;top:793.3px;font-size:11.2px;line-height:13.4px;color:#333;font-weight:normal;">Cancel</div>
<svg class="a" style="left:1490px;top:155px;" width="100" height="105" viewBox="0 0 100 105"><defs><linearGradient id="vcg" x1="0" y1="0" x2="0" y2="1"><stop offset="0" stop-color="#f4f4f4"/><stop offset="1" stop-color="#e4e4e4"/></linearGradient><radialGradient id="vsh" cx="0.5" cy="0.5" r="0.5"><stop offset="0" stop-color="#dcdcdc"/><stop offset="1" stop-color="#fff" stop-opacity="0"/></radialGradient></defs><ellipse cx="55" cy="76" rx="42" ry="16" fill="url(#vsh)"/><path d="M20 26.5 L50 11.5 L83.5 27 L50 45Z" fill="#efefef" stroke="#d2d2d2" stroke-width="1"/><path d="M20 26.5 L50 45 L50 83 L20 63.5Z" fill="url(#vcg)" stroke="#d2d2d2" stroke-width="1"/><path d="M50 45 L83.5 27 L82.5 65.5 L50 83Z" fill="#e8e8e8" stroke="#d2d2d2" stroke-width="1"/><text x="51" y="30" font-size="7" fill="#a0a0a0" transform="rotate(28 51 30)" text-anchor="middle" font-family="Liberation Sans">TOP</text><text x="35" y="58" font-size="8" fill="#a5a5a5" transform="rotate(30 35 58)" text-anchor="middle" font-family="Liberation Sans">FRONT</text><text x="66" y="58" font-size="8" fill="#a5a5a5" transform="rotate(-30 66 58)" text-anchor="middle" font-family="Liberation Sans">RIGHT</text><path d="M15 20 L19.5 63.5" fill="none" stroke="#8a8ac0" stroke-width="1.2"/><path d="M19.5 63.5 L57 86" stroke="#e8a8a8" stroke-width="1.2"/><text x="14.6" y="17.5" font-size="12" fill="#6a6ab8" text-anchor="middle" font-family="Liberation Sans">Z</text><text x="60.4" y="96" font-size="12" fill="#e87070" text-anchor="middle" font-family="Liberation Sans">X</text></svg>
<div class="a" style="left:601px;top:1007px;width:399px;height:25px;background:rgba(241,241,241,0.9);"></div>
<svg class="a" style="left:604px;top:1010.5px;" width="18" height="18" viewBox="0 0 18 18"><ellipse cx="9" cy="10" rx="7" ry="3.5" fill="none" stroke="#444" stroke-width="1.6"/><path d="M9 2 V16" stroke="#8a8a8a" stroke-width="1.2"/></svg>
<svg class="a" style="left:625px;top:1017.5px;" width="6" height="4" viewBox="0 0 6 4"><path d="M0 0 H5 L2.5 3Z" fill="#666"/></svg>
<svg class="a" style="left:636px;top:1010.5px;" width="16" height="17" viewBox="0 0 16 17"><rect x="1" y="5" width="14" height="11" fill="#6cb6ea" stroke="#5a6a7a" stroke-width="1"/><path d="M3 5 L5 1 L7 5 M9 5 L11 1 L13 5" fill="#6a7a8a"/></svg>
<svg class="a" style="left:659px;top:1009.5px;" width="17" height="19" viewBox="0 0 17 19"><path d="M4 18 C1 12 1 9 3 8 L3 4 Q5 2 6 4 L6 8 L6 2 Q8 0 9 2 L9 8 L9 3 Q11 1 12 3 L12 9 L13 6 Q15 5 15 7 L14 13 C13 16 12 18 11 18Z" fill="#f8f8f8" stroke="#777" stroke-width="1.1"/></svg>
<svg class="a" style="left:683px;top:1009.5px;" width="20" height="19" viewBox="0 0 20 19"><circle cx="8" cy="10" r="5.5" fill="none" stroke="#666" stroke-width="1.5"/><path d="M12 14 L17 19" stroke="#666" stroke-width="2"/><path d="M15 2 V8 M12 5 H18" stroke="#444" stroke-width="1.2"/></svg>
<svg class="a" style="left:707px;top:1009.5px;" width="20" height="19" viewBox="0 0 20 19"><rect x="1" y="1" width="17" height="17" fill="none" stroke="#888" stroke-width="1" stroke-dasharray="2 1.5"/><circle cx="9" cy="9" r="6" fill="#e0e0e0" stroke="#666" stroke-width="1.5"/><path d="M13 13 L18 18" stroke="#666" stroke-width="2"/></svg>
<svg class="a" style="left:730px;top:1017.5px;" width="6" height="4" viewBox="0 0 6 4"><path d="M0 0 H5 L2.5 3Z" fill="#666"/></svg>
<svg class="a" style="left:739px;top:1010.5px;" width="19" height="17" viewBox="0 0 19 17"><rect x="1" y="1" width="17" height="12" fill="#e8e8e8" stroke="#666" stroke-width="1.4"/><rect x="6" y="13" width="7" height="3" fill="#666"/></svg>
<svg class="a" style="left:761px;top:1017.5px;" width="6" height="4" viewBox="0 0 6 4"><path d="M0 0 H5 L2.5 3Z" fill="#666"/></svg>
<svg class="a" style="left:768px;top:1009.5px;" width="17" height="17" viewBox="0 0 17 17"><path d="M1 1 H16 V16 H1Z M6 1 V16 M11 1 V16 M1 6 H16 M1 11 H16" fill="none" stroke="#555" stroke-width="1.1"/></svg>
<svg class="a" style="left:788px;top:1017.5px;" width="6" height="4" viewBox="0 0 6 4"><path d="M0 0 H5 L2.5 3Z" fill="#666"/></svg>
<svg class="a" style="left:798px;top:1009.5px;" width="18" height="18" viewBox="0 0 18 18"><rect x="6" y="1" width="11" height="11" fill="#ddd" stroke="#666" stroke-width="1.1"/><rect x="1" y="6" width="11" height="11" fill="#6fb0e0" stroke="#555" stroke-width="1.1"/></svg>
<svg class="a" style="left:818px;top:1017.5px;" width="6" height="4" viewBox="0 0 6 4"><path d="M0 0 H5 L2.5 3Z" fill="#666"/></svg>
<svg class="a" style="left:827px;top:1010.5px;" width="18" height="16" viewBox="0 0 18 16"><rect x="1" y="2" width="16" height="3" rx="1" fill="#2b6fb0"/><rect x="1" y="7" width="16" height="3" rx="1" fill="#555"/><rect x="1" y="12" width="16" height="3" rx="1" fill="#2b6fb0"/></svg>
<svg class="a" style="left:847px;top:1017.5px;" width="6" height="4" viewBox="0 0 6 4"><path d="M0 0 H5 L2.5 3Z" fill="#666"/></svg>
<svg class="a" style="left:856px;top:1009.5px;" width="18" height="18" viewBox="0 0 18 18"><path d="M15 9 A6 6 0 1 1 9 3" fill="none" stroke="#555" stroke-width="1.8"/><path d="M3 9 A6 6 0 0 1 9 3" fill="none" stroke="#3a8fd8" stroke-width="1.8"/><path d="M9 0 L12 3 L9 6Z" fill="#555"/></svg>
<svg class="a" style="left:876px;top:1017.5px;" width="6" height="4" viewBox="0 0 6 4"><path d="M0 0 H5 L2.5 3Z" fill="#666"/></svg>
<svg class="a" style="left:885px;top:1009.5px;" width="18" height="18" viewBox="0 0 18 18"><path d="M9 1 L17 9 L9 17 L1 9Z" fill="#3a9ae0"/><path d="M9 1 L17 9 L9 9Z" fill="#8fd0f8"/></svg>
<svg class="a" style="left:904px;top:1017.5px;" width="6" height="4" viewBox="0 0 6 4"><path d="M0 0 H5 L2.5 3Z" fill="#666"/></svg>
<svg class="a" style="left:913px;top:1010.5px;" width="19" height="16" viewBox="0 0 19 16"><rect x="1" y="1" width="17" height="12" fill="#cfe6f7" stroke="#3a6f9f" stroke-width="1.2"/><rect x="5" y="3" width="8" height="7" fill="#6aaee0"/><rect x="1" y="13" width="17" height="2.5" fill="#2a5f8f"/></svg>
<svg class="a" style="left:934px;top:1017.5px;" width="6" height="4" viewBox="0 0 6 4"><path d="M0 0 H5 L2.5 3Z" fill="#666"/></svg>
<svg class="a" style="left:942px;top:1009.5px;" width="16" height="18" viewBox="0 0 16 18"><rect x="3" y="1" width="10" height="4" fill="#999"/><rect x="5.5" y="5" width="5" height="12" fill="#bbb"/><path d="M5.5 8 L10.5 6 M5.5 11 L10.5 9 M5.5 14 L10.5 12" stroke="#666" stroke-width="1"/></svg>
<svg class="a" style="left:961px;top:1017.5px;" width="6" height="4" viewBox="0 0 6 4"><path d="M0 0 H5 L2.5 3Z" fill="#666"/></svg>
<svg class="a" style="left:970px;top:1010.5px;" width="20" height="16" viewBox="0 0 20 16"><path d="M1 3 H14 Q19 3 19 8 Q19 13 14 13 H1 V10 H13 Q15 10 15 8 Q15 6 13 6 H1Z" fill="#3a9ae0"/><rect x="1" y="3" width="6" height="10" fill="#2a7fc8"/></svg>
<svg class="a" style="left:991px;top:1017.5px;" width="6" height="4" viewBox="0 0 6 4"><path d="M0 0 H5 L2.5 3Z" fill="#666"/></svg>
<div class="a t" style="left:1401px;top:1017.5px;font-size:10.9px;line-height:13.1px;color:#222;font-weight:bold;word-spacing:1px">1 Sketch Line | Length : 200.00 mm</div>
<div class="a" style="left:1584px;top:1010px;width:16px;height:26px;background:#fff;"></div>
<div class="a" style="left:1275px;top:906px;width:45px;height:18px;background:#fff;border:1px solid #c4c4c4;box-shadow:0 2px 4px rgba(0,0,0,0.18)"></div>
<div class="a t" style="left:1279.5px;top:908.4px;font-size:11.8px;line-height:14.2px;color:#222;font-weight:normal;">X Axis</div>
</body></html>
